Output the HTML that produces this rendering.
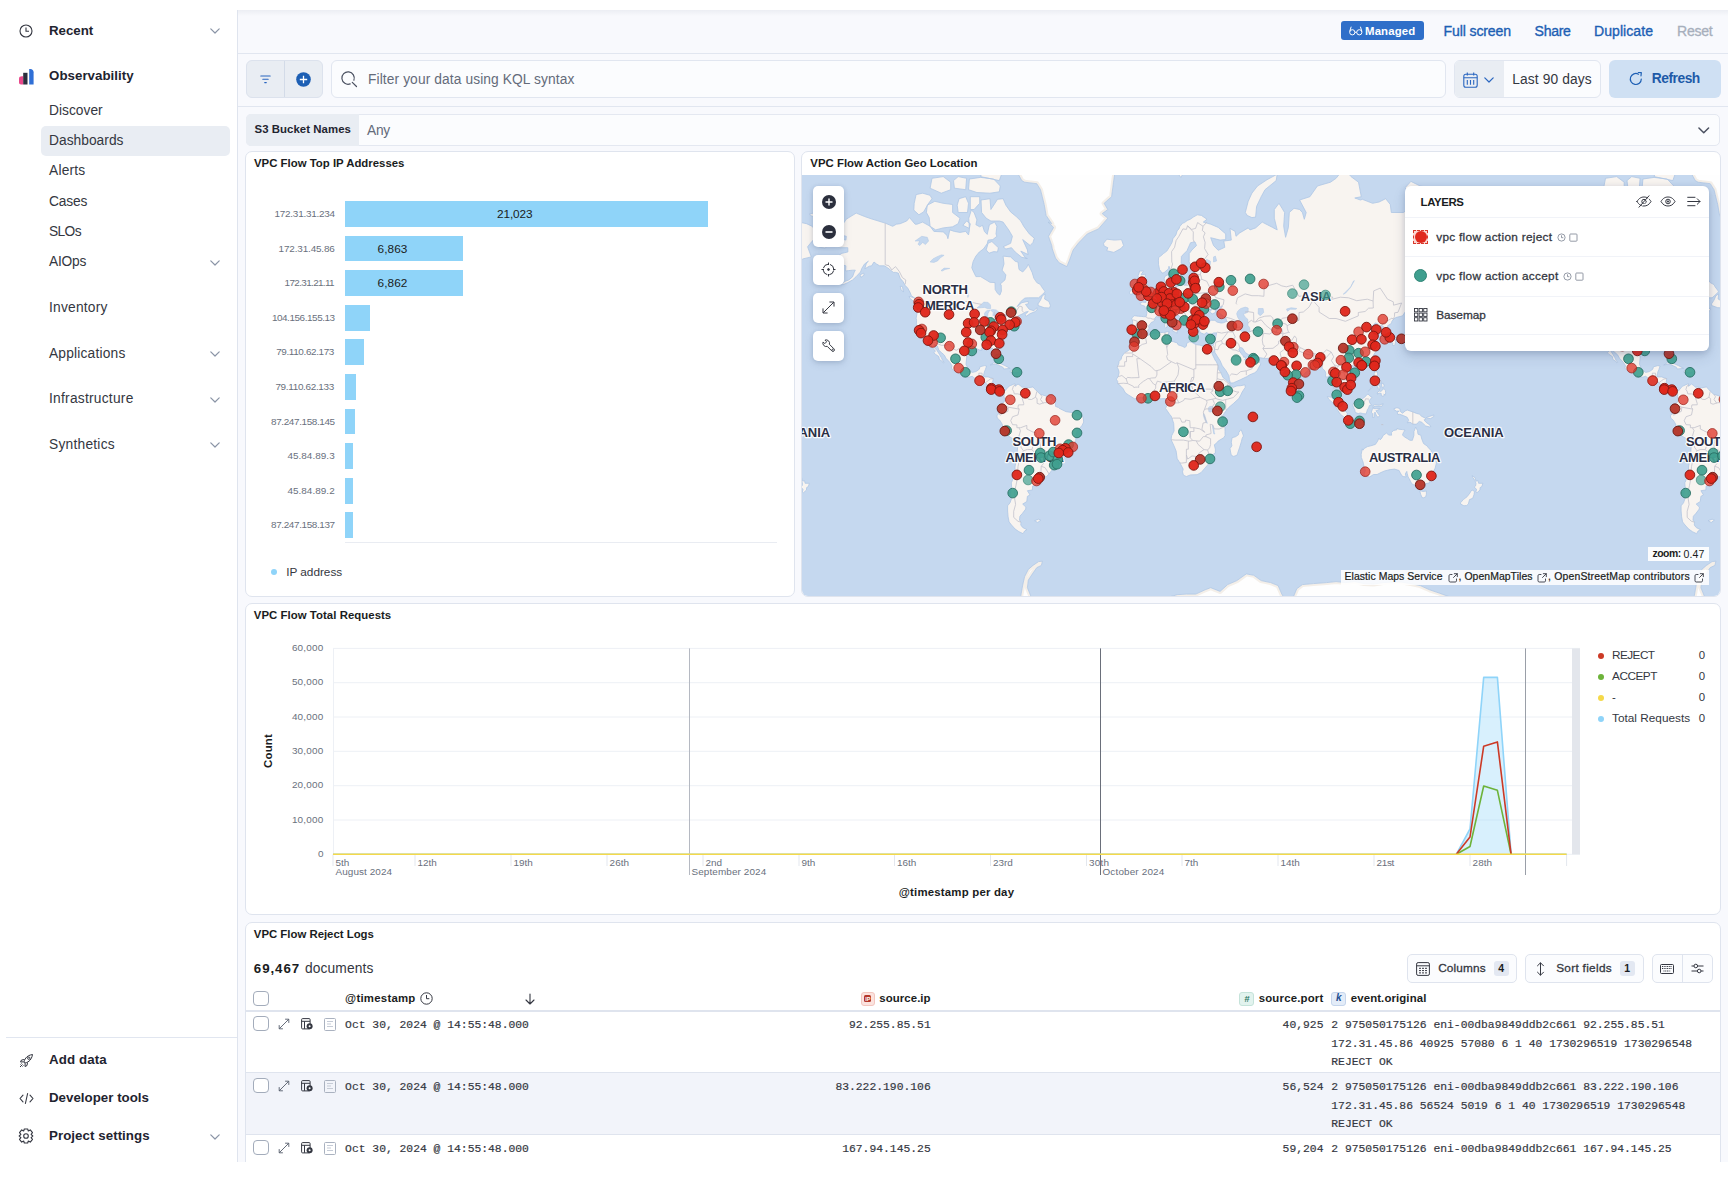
<!DOCTYPE html><html><head><meta charset="utf-8"><title>VPC Flow Logs Overview</title><style>
*{box-sizing:border-box;margin:0;padding:0}
html,body{width:1734px;height:1180px;overflow:hidden;background:#fff}
body{font-family:"Liberation Sans",sans-serif;position:relative}
.t{position:absolute;white-space:nowrap;line-height:20px;height:20px}
.b{position:absolute}
svg{position:absolute;overflow:visible}
.m{-webkit-text-stroke:0.3px currentColor}
</style></head><body>
<div class="b" style="left:237px;top:10px;width:1491px;height:1152px;background:#f8f9fd;border-left:1px solid #dfe4ee;overflow:hidden"></div>
<div class="b" style="left:238px;top:10px;width:1490px;height:6px;background:linear-gradient(#eceef4,#f8f9fd)"></div>
<div class="b" style="left:238px;top:53px;width:1490px;height:1px;background:#e1e6f0;"></div>
<div class="b" style="left:238px;top:106px;width:1490px;height:1px;background:#e1e6f0;"></div>
<svg style="left:18.5px;top:24px" width="14" height="14" viewBox="0 0 14 14"><circle cx="7" cy="7" r="6" fill="none" stroke="#343741" stroke-width="1.1"/><path d="M7 3.4V7.2H10" fill="none" stroke="#343741" stroke-width="1.1"/></svg>
<div class="t" style="left:49.0px;top:21.0px;font-size:13.3px;color:#1f2430;font-weight:700;letter-spacing:-0.008px;">Recent</div>
<svg style="left:209.5px;top:28.2px" width="10.0" height="6.0" viewBox="0 0 10 6"><path d="M0.8 0.8 L5 5 L9.2 0.8" fill="none" stroke="#8a94a6" stroke-width="1.2" stroke-linecap="round" stroke-linejoin="round"/></svg>
<svg style="left:18.5px;top:68.5px" width="15" height="16" viewBox="0 0 15 16"><path d="M0 9.5C0 8 1.2 7.2 3 7.2H4.2V15.5H2C0.8 15.500 0 14.6 0 13.500Z" fill="#e8488b"/><rect x="4.200" y="3.8" width="4.3" height="11.7" fill="#2b2f3d"/><path d="M10.2 0H11.300C13.300 0 14.6 1.3 14.6 3.2V15.5H10.2Z" fill="#2f6fd6"/></svg>
<div class="t" style="left:49.0px;top:66.0px;font-size:13.3px;color:#1f2430;font-weight:700;letter-spacing:0.033px;">Observability</div>
<div class="b" style="left:41px;top:126px;width:189px;height:30px;background:#e9edf3;border-radius:5px;"></div>
<div class="t" style="left:49.0px;top:100.8px;font-size:13.77px;color:#343741;letter-spacing:0.017px;">Discover</div>
<div class="t" style="left:49.0px;top:131.0px;font-size:13.77px;color:#343741;letter-spacing:0.025px;">Dashboards</div>
<div class="t" style="left:49.0px;top:161.3px;font-size:13.77px;color:#343741;letter-spacing:0.200px;">Alerts</div>
<div class="t" style="left:49.0px;top:191.8px;font-size:13.77px;color:#343741;letter-spacing:-0.166px;">Cases</div>
<div class="t" style="left:49.0px;top:222.0px;font-size:13.77px;color:#343741;letter-spacing:-0.610px;">SLOs</div>
<div class="t" style="left:49.0px;top:252.3px;font-size:13.77px;color:#343741;letter-spacing:-0.233px;">AIOps</div>
<svg style="left:209.5px;top:259.8px" width="10.0" height="6.0" viewBox="0 0 10 6"><path d="M0.8 0.8 L5 5 L9.2 0.8" fill="none" stroke="#8a94a6" stroke-width="1.2" stroke-linecap="round" stroke-linejoin="round"/></svg>
<div class="t" style="left:49.0px;top:298.0px;font-size:13.77px;color:#343741;letter-spacing:0.218px;">Inventory</div>
<div class="t" style="left:49.0px;top:343.5px;font-size:13.77px;color:#343741;letter-spacing:0.188px;">Applications</div>
<svg style="left:209.5px;top:351.0px" width="10.0" height="6.0" viewBox="0 0 10 6"><path d="M0.8 0.8 L5 5 L9.2 0.8" fill="none" stroke="#8a94a6" stroke-width="1.2" stroke-linecap="round" stroke-linejoin="round"/></svg>
<div class="t" style="left:49.0px;top:389.0px;font-size:13.77px;color:#343741;letter-spacing:0.249px;">Infrastructure</div>
<svg style="left:209.5px;top:396.5px" width="10.0" height="6.0" viewBox="0 0 10 6"><path d="M0.8 0.8 L5 5 L9.2 0.8" fill="none" stroke="#8a94a6" stroke-width="1.2" stroke-linecap="round" stroke-linejoin="round"/></svg>
<div class="t" style="left:49.0px;top:434.5px;font-size:13.77px;color:#343741;letter-spacing:0.238px;">Synthetics</div>
<svg style="left:209.5px;top:442.0px" width="10.0" height="6.0" viewBox="0 0 10 6"><path d="M0.8 0.8 L5 5 L9.2 0.8" fill="none" stroke="#8a94a6" stroke-width="1.2" stroke-linecap="round" stroke-linejoin="round"/></svg>
<div class="b" style="left:6px;top:1037px;width:231px;height:1px;background:#e1e6f0;"></div>
<div class="t" style="left:49.0px;top:1050.2px;font-size:13.3px;color:#1f2430;font-weight:700;letter-spacing:0.101px;">Add data</div>
<div class="t" style="left:49.0px;top:1088.2px;font-size:13.3px;color:#1f2430;font-weight:700;letter-spacing:0.015px;">Developer tools</div>
<div class="t" style="left:49.0px;top:1126.3px;font-size:13.3px;color:#1f2430;font-weight:700;letter-spacing:0.058px;">Project settings</div>
<svg style="left:209.5px;top:1134.0px" width="10.0" height="6.0" viewBox="0 0 10 6"><path d="M0.8 0.8 L5 5 L9.2 0.8" fill="none" stroke="#8a94a6" stroke-width="1.2" stroke-linecap="round" stroke-linejoin="round"/></svg>
<svg style="left:19px;top:1053px" width="15" height="15" viewBox="0 0 15 15" fill="none" stroke="#343741" stroke-width="1"><path d="M5.2 9.8C5 7 7 2.500 13.500 1.500C12.500 8 8 10 5.2 9.800Z"/><circle cx="9.800" cy="5.200" r="1.200"/><path d="M5.500 6.500L2.500 7L1.500 9L4.800 8.800M8.500 9.500L8 12.500L6 13.500L6.200 10.200M1 14L3.500 11.500M1.500 11.500L2.500 10.500M3.500 13.500L4.500 12.500"/></svg>
<svg style="left:18.5px;top:1092px" width="15" height="13" viewBox="0 0 15 13" fill="none" stroke="#343741" stroke-width="1.1" stroke-linecap="round" stroke-linejoin="round"><path d="M4 3.200L1 6.500L4 9.800M11 3.200L14 6.500L11 9.800M8.600 1.500L6.400 11.500"/></svg>
<svg style="left:18px;top:1128px" width="16" height="16" viewBox="0 0 16 16" fill="none" stroke="#343741" stroke-width="1.1" stroke-linejoin="round"><path d="M6.300 1H9.700L10.300 3L12.300 1.900L14.500 4.700L13.100 6.300L14.800 8L13.100 9.700L14.500 11.300L12.300 14.100L10.300 13L9.700 15H6.300L5.700 13L3.700 14.100L1.500 11.300L2.900 9.700L1.200 8L2.900 6.300L1.500 4.700L3.700 1.900L5.700 3Z"/><circle cx="8" cy="8" r="2.300"/></svg>
<div class="b" style="left:1341px;top:21px;width:83px;height:19px;background:#2f6fc9;border-radius:3px;"></div>
<svg style="left:1348.5px;top:25.5px" width="14" height="10" viewBox="0 0 14 10" fill="none" stroke="#fff" stroke-width="1"><circle cx="3.300" cy="6.300" r="2.600"/><circle cx="10.300" cy="6.300" r="2.600"/><path d="M5.900 6.300H7.700M0.700 5.500L2.200 0.700M12.900 5.500L11.400 0.700"/></svg>
<div class="t" style="left:1365.0px;top:20.5px;font-size:11.4px;color:#fff;font-weight:700;letter-spacing:0.142px;">Managed</div>
<div class="t" style="left:1443.5px;top:20.5px;font-size:14.08px;color:#1d5fb4;letter-spacing:-0.124px;-webkit-text-stroke:0.35px #1d5fb4;">Full screen</div>
<div class="t" style="left:1534.6px;top:20.5px;font-size:14.08px;color:#1d5fb4;letter-spacing:-0.314px;-webkit-text-stroke:0.35px #1d5fb4;">Share</div>
<div class="t" style="left:1594.0px;top:20.5px;font-size:14.08px;color:#1d5fb4;letter-spacing:0.033px;-webkit-text-stroke:0.35px #1d5fb4;">Duplicate</div>
<div class="t" style="left:1677.0px;top:20.5px;font-size:14.08px;color:#a7afbc;letter-spacing:-0.256px;-webkit-text-stroke:0.3px #a7afbc;">Reset</div>
<div class="b" style="left:246px;top:60px;width:77px;height:38px;background:#e9edf3;border:1px solid #dce2ed;border-radius:6px;"></div>
<div class="b" style="left:284.3px;top:61px;width:1.0px;height:36px;background:#d3dbe8;"></div>
<svg style="left:260px;top:75px" width="11" height="9" viewBox="0 0 11 9" stroke="#2a66c0" stroke-width="1.1" stroke-linecap="round"><path d="M0.800 1H10.200M2.800 4.300H8.200M4.700 7.600H6.300"/></svg>
<svg style="left:296px;top:71.500px" width="15" height="15" viewBox="0 0 15 15"><circle cx="7.500" cy="7.500" r="7.300" fill="#1d5fb4"/><path d="M7.500 3.800V11.200M3.800 7.500H11.200" stroke="#fff" stroke-width="1.300"/></svg>
<div class="b" style="left:331px;top:60px;width:1115px;height:38px;background:#fbfcfe;border:1px solid #e1e6f0;border-radius:6px;"></div>
<svg style="left:341px;top:71px" width="17" height="17" viewBox="0 0 17 17" fill="none" stroke="#4a5060" stroke-width="1.200" stroke-linecap="round"><path d="M11.300 11.300L15.500 15.500"/><path d="M12.900 9.200A6.200 6.200 0 1 0 9.200 12.900"/></svg>
<div class="t" style="left:368.0px;top:69.5px;font-size:13.77px;color:#646b7a;letter-spacing:0.103px;">Filter your data using KQL syntax</div>
<div class="b" style="left:1454px;top:60px;width:147px;height:38px;background:#fbfcfe;border:1px solid #e1e6f0;border-radius:6px;"></div>
<div class="b" style="left:1455px;top:61px;width:49px;height:36px;background:#e9edf3;border-radius:5px 0 0 5px;"></div>
<svg style="left:1462.500px;top:71.500px" width="15" height="16" viewBox="0 0 15 16" fill="none" stroke="#2a66c0" stroke-width="1.100" stroke-linejoin="round"><rect x="0.800" y="2.300" width="13.400" height="12.900" rx="2"/><path d="M0.800 5.800H14.200M4.300 0.500V3.500M10.700 0.500V3.500M4.300 8V12.800M7.500 8V12.800M10.700 8V12.800"/></svg>
<svg style="left:1483.7px;top:76.6px" width="10.0" height="6.0" viewBox="0 0 10 6"><path d="M0.8 0.8 L5 5 L9.2 0.8" fill="none" stroke="#2a66c0" stroke-width="1.2" stroke-linecap="round" stroke-linejoin="round"/></svg>
<div class="t" style="left:1512.2px;top:70.0px;font-size:13.77px;color:#343741;letter-spacing:0.127px;">Last 90 days</div>
<div class="b" style="left:1608.5px;top:60px;width:112.0px;height:38px;background:#cfe0f3;border-radius:6px;"></div>
<svg style="left:1629px;top:72px" width="14" height="14" viewBox="0 0 14 14" fill="none" stroke="#1d5fb4" stroke-width="1.200" stroke-linecap="round"><path d="M12.300 7A5.500 5.500 0 1 1 9.500 2.200"/><path d="M9.300 0.500L12.300 0.700L12 3.800" stroke-linejoin="round"/></svg>
<div class="t" style="left:1651.8px;top:69.3px;font-size:13.8px;color:#1d5aa8;font-weight:700;letter-spacing:-0.484px;">Refresh</div>
<div class="b" style="left:246px;top:114px;width:1474px;height:31.5px;background:#fbfcfe;border:1px solid #e4e8f1;border-radius:5px;"></div>
<div class="b" style="left:246px;top:114px;width:113px;height:31.5px;background:#e9edf3;border-radius:5px 0 0 5px;"></div>
<div class="t" style="left:254.5px;top:119.2px;font-size:11.4px;color:#1f2430;font-weight:700;letter-spacing:0.055px;">S3 Bucket Names</div>
<div class="t" style="left:367.0px;top:120.5px;font-size:13.77px;color:#646b7a;letter-spacing:-0.243px;">Any</div>
<svg style="left:1698.25px;top:127.05px" width="11.5" height="6.8999999999999995" viewBox="0 0 10 6"><path d="M0.8 0.8 L5 5 L9.2 0.8" fill="none" stroke="#4a5060" stroke-width="1.3" stroke-linecap="round" stroke-linejoin="round"/></svg>
<div class="b" style="left:245px;top:151px;width:550px;height:446px;background:#fff;border:1px solid #dfe4ee;border-radius:7px;"></div>
<div class="b" style="left:801px;top:151px;width:920px;height:446px;background:#fff;border:1px solid #dfe4ee;border-radius:7px;"></div>
<div class="b" style="left:245px;top:603px;width:1476px;height:312px;background:#fff;border:1px solid #dfe4ee;border-radius:7px;"></div>
<div class="b" style="left:245px;top:922px;width:1476px;height:278px;background:#fff;border:1px solid #dfe4ee;border-radius:7px;"></div>
<div class="t" style="left:254.0px;top:153.1px;font-size:11.4px;color:#1a1c21;font-weight:700;">VPC Flow Top IP Addresses</div>
<div class="t" style="left:810.3px;top:153.0px;font-size:11.4px;color:#1a1c21;font-weight:700;letter-spacing:0.018px;">VPC Flow Action Geo Location</div>
<div class="t" style="left:253.8px;top:604.7px;font-size:11.4px;color:#1a1c21;font-weight:700;letter-spacing:0.041px;">VPC Flow Total Requests</div>
<div class="t" style="left:253.8px;top:923.6px;font-size:11.4px;color:#1a1c21;font-weight:700;letter-spacing:-0.008px;">VPC Flow Reject Logs</div>
<div class="b" style="left:344.7px;top:200.9px;width:363.7px;height:25.900000000000006px;background:#8fd4f9;"></div>
<div class="t" style="left:274.6px;top:203.9px;font-size:9.94px;color:#69707d;letter-spacing:-0.259px;">172.31.31.234</div>
<div class="b" style="left:344.7px;top:235.5px;width:118.69999999999999px;height:25.899999999999977px;background:#8fd4f9;"></div>
<div class="t" style="left:278.6px;top:238.5px;font-size:9.94px;color:#69707d;letter-spacing:-0.153px;">172.31.45.86</div>
<div class="b" style="left:344.7px;top:270.1px;width:118.69999999999999px;height:25.899999999999977px;background:#8fd4f9;"></div>
<div class="t" style="left:284.6px;top:273.1px;font-size:9.94px;color:#69707d;letter-spacing:-0.653px;">172.31.21.11</div>
<div class="b" style="left:344.7px;top:304.7px;width:25.100000000000023px;height:25.900000000000034px;background:#8fd4f9;"></div>
<div class="t" style="left:271.9px;top:307.7px;font-size:9.94px;color:#69707d;letter-spacing:-0.442px;">104.156.155.13</div>
<div class="b" style="left:344.7px;top:339.3px;width:19.600000000000023px;height:25.899999999999977px;background:#8fd4f9;"></div>
<div class="t" style="left:276.2px;top:342.3px;font-size:9.94px;color:#69707d;letter-spacing:-0.382px;">79.110.62.173</div>
<div class="b" style="left:344.7px;top:374.0px;width:11.199999999999989px;height:25.899999999999977px;background:#8fd4f9;"></div>
<div class="t" style="left:275.4px;top:377.0px;font-size:9.94px;color:#69707d;letter-spacing:-0.320px;">79.110.62.133</div>
<div class="b" style="left:344.7px;top:408.6px;width:10.400000000000034px;height:25.899999999999977px;background:#8fd4f9;"></div>
<div class="t" style="left:271.1px;top:411.6px;font-size:9.94px;color:#69707d;letter-spacing:-0.385px;">87.247.158.145</div>
<div class="b" style="left:344.7px;top:443.2px;width:8.400000000000034px;height:25.900000000000034px;background:#8fd4f9;"></div>
<div class="t" style="left:287.4px;top:446.2px;font-size:9.94px;color:#69707d;letter-spacing:0.042px;">45.84.89.3</div>
<div class="b" style="left:344.7px;top:477.8px;width:8.400000000000034px;height:25.899999999999977px;background:#8fd4f9;"></div>
<div class="t" style="left:287.4px;top:480.8px;font-size:9.94px;color:#69707d;letter-spacing:0.042px;">45.84.89.2</div>
<div class="b" style="left:344.7px;top:512.4px;width:8.400000000000034px;height:25.899999999999977px;background:#8fd4f9;"></div>
<div class="t" style="left:271.1px;top:515.4px;font-size:9.94px;color:#69707d;letter-spacing:-0.385px;">87.247.158.137</div>
<div class="t" style="left:497.0px;top:204.0px;font-size:11.8px;color:#1a1c21;letter-spacing:-0.099px;">21,023</div>
<div class="t" style="left:377.5px;top:238.5px;font-size:11.8px;color:#1a1c21;letter-spacing:0.094px;">6,863</div>
<div class="t" style="left:377.5px;top:273.1px;font-size:11.8px;color:#1a1c21;letter-spacing:0.094px;">6,862</div>
<div class="b" style="left:344.7px;top:541.8px;width:432.7px;height:1.0px;background:#e9ecf2;"></div>
<div class="b" style="left:271.300px;top:569.200px;width:6px;height:6px;border-radius:50%;background:#8fd4f9"></div>
<div class="t" style="left:286.2px;top:561.5px;font-size:11.8px;color:#343741;letter-spacing:-0.021px;">IP address</div>
<svg style="left:0;top:0" width="1734" height="1180" viewBox="0 0 1734 1180">
<path d="M333 854.3H1580" stroke="#edf0f5" stroke-width="1"/>
<path d="M333 820.0H1580" stroke="#edf0f5" stroke-width="1"/>
<path d="M333 785.7H1580" stroke="#edf0f5" stroke-width="1"/>
<path d="M333 751.3H1580" stroke="#edf0f5" stroke-width="1"/>
<path d="M333 717.0H1580" stroke="#edf0f5" stroke-width="1"/>
<path d="M333 682.7H1580" stroke="#edf0f5" stroke-width="1"/>
<path d="M333 648.4H1580" stroke="#edf0f5" stroke-width="1"/>
<path d="M333.5 648.4V854.3" stroke="#edf0f5" stroke-width="1"/>
<rect x="1572" y="648.4" width="8" height="205.89999999999998" fill="#e3e6ec"/>
<path d="M333 854.3V866" stroke="#e3e7ee" stroke-width="1"/>
<path d="M415 854.3V866" stroke="#e3e7ee" stroke-width="1"/>
<path d="M511 854.3V866" stroke="#e3e7ee" stroke-width="1"/>
<path d="M607 854.3V866" stroke="#e3e7ee" stroke-width="1"/>
<path d="M703 854.3V866" stroke="#e3e7ee" stroke-width="1"/>
<path d="M799 854.3V866" stroke="#e3e7ee" stroke-width="1"/>
<path d="M894.5 854.3V866" stroke="#e3e7ee" stroke-width="1"/>
<path d="M990.5 854.3V866" stroke="#e3e7ee" stroke-width="1"/>
<path d="M1086.5 854.3V866" stroke="#e3e7ee" stroke-width="1"/>
<path d="M1182 854.3V866" stroke="#e3e7ee" stroke-width="1"/>
<path d="M1278 854.3V866" stroke="#e3e7ee" stroke-width="1"/>
<path d="M1374 854.3V866" stroke="#e3e7ee" stroke-width="1"/>
<path d="M1470 854.3V866" stroke="#e3e7ee" stroke-width="1"/>
<path d="M1566.6 854.3V866" stroke="#e3e7ee" stroke-width="1"/>
<path d="M689.500 648.4V875" stroke="#b5b9c2" stroke-width="1"/>
<path d="M1100.500 648.4V875" stroke="#6a6f7a" stroke-width="1"/>
<path d="M1525.500 648.4V875" stroke="#9a9fa8" stroke-width="1"/>
<path d="M1456.3 854.3 L1470 829 L1483.7 677.4 L1497.4 677.4 L1511.1 854.3Z" fill="#8fd4f9" fill-opacity="0.350"/>
<path d="M333 854.3L1456.3 854.3 1456.3 854.3 L1470 829 L1483.7 677.4 L1497.4 677.4 L1511.1 854.3 L1566.600 854.3" fill="none" stroke="#8fd4f9" stroke-width="1.600" stroke-linejoin="round"/>
<path d="M1456.3 854.3 L1470 846.5 L1483.7 786 L1497.4 790.3 L1511.1 854.3" fill="none" stroke="#6db33a" stroke-width="1.600" stroke-linejoin="round"/>
<path d="M1456.3 854.3 L1470 837 L1483.7 746.2 L1497.4 741.9 L1511.1 854.3" fill="none" stroke="#cc3a26" stroke-width="1.600" stroke-linejoin="round"/>
<path d="M333 854.3H1566.600" stroke="#f5d94a" stroke-width="1.600"/>
</svg>
<div class="t" style="left:318.0px;top:844.0px;font-size:9.94px;color:#69707d;">0</div>
<div class="t" style="left:291.9px;top:809.7px;font-size:9.94px;color:#69707d;letter-spacing:0.200px;">10,000</div>
<div class="t" style="left:291.9px;top:775.4px;font-size:9.94px;color:#69707d;letter-spacing:0.200px;">20,000</div>
<div class="t" style="left:291.9px;top:741.0px;font-size:9.94px;color:#69707d;letter-spacing:0.200px;">30,000</div>
<div class="t" style="left:291.9px;top:706.7px;font-size:9.94px;color:#69707d;letter-spacing:0.200px;">40,000</div>
<div class="t" style="left:291.9px;top:672.4px;font-size:9.94px;color:#69707d;letter-spacing:0.200px;">50,000</div>
<div class="t" style="left:291.9px;top:638.1px;font-size:9.94px;color:#69707d;letter-spacing:0.200px;">60,000</div>
<div class="t" style="left:248px;top:741.400px;width:40px;text-align:center;font-size:11.400px;font-weight:700;color:#1a1c21;transform:rotate(-90deg);letter-spacing:0.2px">Count</div>
<div class="t" style="left:335.6px;top:852.5px;font-size:9.94px;color:#69707d;letter-spacing:-0.106px;">5th</div>
<div class="t" style="left:417.6px;top:852.5px;font-size:9.94px;color:#69707d;letter-spacing:-0.087px;">12th</div>
<div class="t" style="left:513.6px;top:852.5px;font-size:9.94px;color:#69707d;letter-spacing:-0.087px;">19th</div>
<div class="t" style="left:609.6px;top:852.5px;font-size:9.94px;color:#69707d;letter-spacing:0.038px;">26th</div>
<div class="t" style="left:705.6px;top:852.5px;font-size:9.94px;color:#69707d;letter-spacing:-0.028px;">2nd</div>
<div class="t" style="left:801.6px;top:852.5px;font-size:9.94px;color:#69707d;letter-spacing:-0.106px;">9th</div>
<div class="t" style="left:897.1px;top:852.5px;font-size:9.94px;color:#69707d;letter-spacing:-0.087px;">16th</div>
<div class="t" style="left:993.1px;top:852.5px;font-size:9.94px;color:#69707d;letter-spacing:-0.099px;">23rd</div>
<div class="t" style="left:1089.1px;top:852.5px;font-size:9.94px;color:#69707d;letter-spacing:0.163px;">30th</div>
<div class="t" style="left:1184.6px;top:852.5px;font-size:9.94px;color:#69707d;letter-spacing:-0.106px;">7th</div>
<div class="t" style="left:1280.6px;top:852.5px;font-size:9.94px;color:#69707d;letter-spacing:-0.087px;">14th</div>
<div class="t" style="left:1376.6px;top:852.5px;font-size:9.94px;color:#69707d;letter-spacing:-0.322px;">21st</div>
<div class="t" style="left:1472.6px;top:852.5px;font-size:9.94px;color:#69707d;letter-spacing:0.038px;">28th</div>
<div class="t" style="left:335.6px;top:862.3px;font-size:9.94px;color:#69707d;letter-spacing:0.071px;">August 2024</div>
<div class="t" style="left:691.5px;top:862.3px;font-size:9.94px;color:#69707d;letter-spacing:0.107px;">September 2024</div>
<div class="t" style="left:1102.5px;top:862.3px;font-size:9.94px;color:#69707d;letter-spacing:0.147px;">October 2024</div>
<div class="t" style="left:898.7px;top:882.4px;font-size:11.4px;color:#1a1c21;font-weight:700;letter-spacing:0.208px;">@timestamp per day</div>
<div class="b" style="left:1597.800px;top:652.5px;width:6px;height:6px;border-radius:50%;background:#cc3a26"></div>
<div class="t" style="left:1612.0px;top:644.7px;font-size:11.8px;color:#343741;letter-spacing:-0.565px;">REJECT</div>
<div class="t" style="left:1698.7px;top:644.7px;font-size:11.4px;color:#343741;">0</div>
<div class="b" style="left:1597.800px;top:673.5px;width:6px;height:6px;border-radius:50%;background:#6db33a"></div>
<div class="t" style="left:1612.0px;top:665.7px;font-size:11.8px;color:#343741;letter-spacing:-0.477px;">ACCEPT</div>
<div class="t" style="left:1698.7px;top:665.7px;font-size:11.4px;color:#343741;">0</div>
<div class="b" style="left:1597.800px;top:694.5px;width:6px;height:6px;border-radius:50%;background:#f5d94a"></div>
<div class="t" style="left:1612.0px;top:686.7px;font-size:11.4px;color:#343741;">-</div>
<div class="t" style="left:1698.7px;top:686.7px;font-size:11.4px;color:#343741;">0</div>
<div class="b" style="left:1597.800px;top:715.5px;width:6px;height:6px;border-radius:50%;background:#8fd4f9"></div>
<div class="t" style="left:1612.0px;top:707.7px;font-size:11.8px;color:#343741;letter-spacing:0.010px;">Total Requests</div>
<div class="t" style="left:1698.7px;top:707.7px;font-size:11.4px;color:#343741;">0</div>
<div class="t" style="left:253.8px;top:959.3px;font-size:13.3px;color:#1a1c21;font-weight:700;letter-spacing:0.937px;">69,467</div>
<div class="t" style="left:304.9px;top:959.3px;font-size:13.77px;color:#343741;letter-spacing:0.149px;">documents</div>
<div class="b" style="left:1407px;top:954px;width:110px;height:29px;background:#fbfcfe;border:1px solid #dfe4ee;border-radius:5px;"></div>
<div class="b" style="left:1525px;top:954px;width:118.5px;height:29px;background:#fbfcfe;border:1px solid #dfe4ee;border-radius:5px;"></div>
<div class="b" style="left:1651.5px;top:954px;width:61.0px;height:29px;background:#fbfcfe;border:1px solid #dfe4ee;border-radius:5px;"></div>
<div class="b" style="left:1682px;top:955px;width:1px;height:27px;background:#dfe4ee;"></div>
<svg style="left:1415.600px;top:961.500px" width="14" height="14" viewBox="0 0 14 14" fill="none" stroke="#343741" stroke-width="1"><rect x="0.600" y="0.600" width="12.800" height="12.800" rx="1.500"/><path d="M0.600 3.800H13.400M3 6.300H5M6 6.300H8M9 6.300H11M3 8.600H5M6 8.600H8M9 8.600H11M3 10.900H5M6 10.900H8M9 10.900H11"/></svg>
<div class="t" style="left:1438.2px;top:958.2px;font-size:11.8px;color:#343741;letter-spacing:0.134px;-webkit-text-stroke:0.300px #343741;">Columns</div>
<div class="b" style="left:1493.5px;top:961.3px;width:15.200000000000045px;height:14.400000000000091px;background:#e3e8f2;border-radius:3px;"></div>
<div class="t" style="left:1498.2px;top:958.4px;font-size:10.5px;color:#1a1c21;font-weight:700;">4</div>
<svg style="left:1536.200px;top:961.500px" width="9" height="14" viewBox="0 0 9 14" fill="none" stroke="#343741" stroke-width="1" stroke-linecap="round" stroke-linejoin="round"><path d="M4.500 1V13M1.500 3.800L4.500 0.800L7.500 3.800M1.500 10.200L4.500 13.200L7.500 10.200"/></svg>
<div class="t" style="left:1556.2px;top:958.2px;font-size:11.8px;color:#343741;letter-spacing:0.303px;-webkit-text-stroke:0.300px #343741;">Sort fields</div>
<div class="b" style="left:1619.8px;top:961.3px;width:14.799999999999955px;height:14.400000000000091px;background:#e3e8f2;border-radius:3px;"></div>
<div class="t" style="left:1624.3px;top:958.4px;font-size:10.5px;color:#1a1c21;font-weight:700;">1</div>
<svg style="left:1659.500px;top:963.500px" width="14" height="10" viewBox="0 0 14 10" fill="none" stroke="#343741" stroke-width="1"><rect x="0.500" y="0.500" width="13" height="9" rx="1"/><path d="M2 2.500H12M2 4.500H12M3.500 7H10.500" stroke-width="1.200" stroke-dasharray="1 0.700"/></svg>
<svg style="left:1690.500px;top:963px" width="13" height="11" viewBox="0 0 13 11" fill="none" stroke="#343741" stroke-width="1"><path d="M0.500 3H3M6.600 3H12.500M0.500 8H6.400M10 8H12.500"/><circle cx="4.800" cy="3" r="1.800"/><circle cx="8.200" cy="8" r="1.800"/></svg>
<div class="b" style="left:253.4px;top:990.7px;width:15.500px;height:15.500px;border:1px solid #a3acbb;border-radius:4px;background:#fff"></div>
<div class="t" style="left:345.1px;top:988.3px;font-size:11.4px;color:#1a1c21;font-weight:700;letter-spacing:0.237px;">@timestamp</div>
<svg style="left:419.500px;top:992px" width="13" height="13" viewBox="0 0 13 13" fill="none" stroke="#343741" stroke-width="1"><circle cx="6.500" cy="6.500" r="5.700"/><path d="M6.500 3V6.700H9.300"/></svg>
<svg style="left:525.200px;top:993px" width="10" height="12" viewBox="0 0 10 12" fill="none" stroke="#343741" stroke-width="1.100" stroke-linecap="round" stroke-linejoin="round"><path d="M5 1V11M1 7L5 11L9 7"/></svg>
<div class="b" style="left:861px;top:992px;width:13.5px;height:13.5px;background:#fbe3df;border:1px solid #f3c6bf;border-radius:3px;"></div>
<div class="b" style="left:864.200px;top:995.300px;width:7.200px;height:7px;background:#b5372a;border-radius:1.500px"></div>
<div class="t" style="left:864.200px;top:988.800px;font-size:5.500px;font-weight:700;color:#fff;letter-spacing:0;width:7.200px;text-align:center">IP</div>
<div class="t" style="left:879.3px;top:988.3px;font-size:11.4px;color:#1a1c21;font-weight:700;letter-spacing:0.080px;">source.ip</div>
<div class="b" style="left:1239.2px;top:992px;width:15.099999999999909px;height:13.5px;background:#e2f3ee;border:1px solid #c5e3da;border-radius:3px;"></div>
<div class="t" style="left:1244.2px;top:988.6px;font-size:9.5px;color:#2c7a66;font-weight:700;font-family:'Liberation Sans',sans-serif;font-style:italic;">#</div>
<div class="t" style="left:1258.7px;top:988.3px;font-size:11.4px;color:#1a1c21;font-weight:700;letter-spacing:0.190px;">source.port</div>
<div class="b" style="left:1331.3px;top:992px;width:15.200000000000045px;height:13.5px;background:#e3ecf8;border:1px solid #c5d5ec;border-radius:3px;"></div>
<div class="t" style="left:1336.1px;top:988.2px;font-size:10px;color:#1d4f91;font-weight:700;font-family:'Liberation Sans',sans-serif;font-style:italic;">k</div>
<div class="t" style="left:1350.8px;top:988.3px;font-size:11.4px;color:#1a1c21;font-weight:700;letter-spacing:0.113px;">event.original</div>
<div class="b" style="left:246px;top:1010px;width:1474px;height:2px;background:#dfe4ee;"></div>
<div class="b" style="left:253.4px;top:1015.9px;width:15.500px;height:15.500px;border:1px solid #a3acbb;border-radius:4px;background:#fff"></div>
<svg style="left:278.1px;top:1018.4000000000001px" width="12" height="12" viewBox="0 0 12 12" fill="none" stroke="#555c6b" stroke-width="0.9" stroke-linecap="round" stroke-linejoin="round"><path d="M1.500 10.500L10.500 1.500M7.500 1.200H10.800V4.500M1.200 7.500V10.800H4.500"/></svg>
<svg style="left:300.7px;top:1018.4000000000001px" width="12" height="12" viewBox="0 0 12 12"><rect x="0.600" y="0.600" width="8.500" height="10.300" rx="1" fill="none" stroke="#343741"/><path d="M0.600 3.300H9M3.500 3.300V10.800" stroke="#343741" fill="none"/><circle cx="8.600" cy="8.300" r="3" fill="#343741"/><circle cx="8.600" cy="8.300" r="1" fill="#fff"/></svg>
<svg style="left:323.5px;top:1017.9000000000001px" width="12" height="13" viewBox="0 0 12 13" fill="none" stroke="#aab2c0" stroke-width="1"><rect x="0.500" y="0.500" width="11" height="12" rx="1"/><path d="M3 3.500H9M3 6H7M3 8.500H9" stroke="#c5cbd6"/></svg>
<div class="t" style="left:345.1px;top:1014.8px;font-size:11.35px;color:#343741;font-family:'Liberation Mono',monospace;-webkit-text-stroke:0.18px #343741;">Oct 30, 2024 @ 14:55:48.000</div>
<div class="t" style="left:849.0px;top:1014.8px;font-size:11.35px;color:#343741;font-family:'Liberation Mono',monospace;-webkit-text-stroke:0.18px #343741;">92.255.85.51</div>
<div class="t" style="left:1282.6px;top:1014.8px;font-size:11.35px;color:#343741;font-family:'Liberation Mono',monospace;-webkit-text-stroke:0.18px #343741;">40,925</div>
<div class="t" style="left:1331.3px;top:1014.8px;font-size:11.35px;color:#343741;font-family:'Liberation Mono',monospace;-webkit-text-stroke:0.18px #343741;">2 975050175126 eni-00dba9849ddb2c661 92.255.85.51</div>
<div class="t" style="left:1331.3px;top:1033.6px;font-size:11.35px;color:#343741;font-family:'Liberation Mono',monospace;-webkit-text-stroke:0.18px #343741;">172.31.45.86 40925 57080 6 1 40 1730296519 1730296548</div>
<div class="t" style="left:1331.3px;top:1052.4px;font-size:11.35px;color:#343741;font-family:'Liberation Mono',monospace;-webkit-text-stroke:0.18px #343741;">REJECT OK</div>
<div class="b" style="left:246px;top:1072.9px;width:1474px;height:61.0px;background:#f2f4fa;"></div>
<div class="b" style="left:246px;top:1071.9px;width:1474px;height:1.0px;background:#dfe4ee;"></div>
<div class="b" style="left:253.4px;top:1077.8px;width:15.500px;height:15.500px;border:1px solid #a3acbb;border-radius:4px;background:#fff"></div>
<svg style="left:278.1px;top:1080.3000000000002px" width="12" height="12" viewBox="0 0 12 12" fill="none" stroke="#555c6b" stroke-width="0.9" stroke-linecap="round" stroke-linejoin="round"><path d="M1.500 10.500L10.500 1.500M7.500 1.200H10.800V4.500M1.200 7.500V10.800H4.500"/></svg>
<svg style="left:300.7px;top:1080.3000000000002px" width="12" height="12" viewBox="0 0 12 12"><rect x="0.600" y="0.600" width="8.500" height="10.300" rx="1" fill="none" stroke="#343741"/><path d="M0.600 3.300H9M3.500 3.300V10.800" stroke="#343741" fill="none"/><circle cx="8.600" cy="8.300" r="3" fill="#343741"/><circle cx="8.600" cy="8.300" r="1" fill="#fff"/></svg>
<svg style="left:323.5px;top:1079.8000000000002px" width="12" height="13" viewBox="0 0 12 13" fill="none" stroke="#aab2c0" stroke-width="1"><rect x="0.500" y="0.500" width="11" height="12" rx="1"/><path d="M3 3.500H9M3 6H7M3 8.500H9" stroke="#c5cbd6"/></svg>
<div class="t" style="left:345.1px;top:1076.7px;font-size:11.35px;color:#343741;font-family:'Liberation Mono',monospace;-webkit-text-stroke:0.18px #343741;">Oct 30, 2024 @ 14:55:48.000</div>
<div class="t" style="left:835.4px;top:1076.7px;font-size:11.35px;color:#343741;font-family:'Liberation Mono',monospace;-webkit-text-stroke:0.18px #343741;">83.222.190.106</div>
<div class="t" style="left:1282.6px;top:1076.7px;font-size:11.35px;color:#343741;font-family:'Liberation Mono',monospace;-webkit-text-stroke:0.18px #343741;">56,524</div>
<div class="t" style="left:1331.3px;top:1076.7px;font-size:11.35px;color:#343741;font-family:'Liberation Mono',monospace;-webkit-text-stroke:0.18px #343741;">2 975050175126 eni-00dba9849ddb2c661 83.222.190.106</div>
<div class="t" style="left:1331.3px;top:1095.5px;font-size:11.35px;color:#343741;font-family:'Liberation Mono',monospace;-webkit-text-stroke:0.18px #343741;">172.31.45.86 56524 5019 6 1 40 1730296519 1730296548</div>
<div class="t" style="left:1331.3px;top:1114.3px;font-size:11.35px;color:#343741;font-family:'Liberation Mono',monospace;-webkit-text-stroke:0.18px #343741;">REJECT OK</div>
<div class="b" style="left:246px;top:1133.8px;width:1474px;height:1.0px;background:#dfe4ee;"></div>
<div class="b" style="left:253.4px;top:1139.7px;width:15.500px;height:15.500px;border:1px solid #a3acbb;border-radius:4px;background:#fff"></div>
<svg style="left:278.1px;top:1142.2px" width="12" height="12" viewBox="0 0 12 12" fill="none" stroke="#555c6b" stroke-width="0.9" stroke-linecap="round" stroke-linejoin="round"><path d="M1.500 10.500L10.500 1.500M7.500 1.200H10.800V4.500M1.200 7.500V10.800H4.500"/></svg>
<svg style="left:300.7px;top:1142.2px" width="12" height="12" viewBox="0 0 12 12"><rect x="0.600" y="0.600" width="8.500" height="10.300" rx="1" fill="none" stroke="#343741"/><path d="M0.600 3.300H9M3.500 3.300V10.800" stroke="#343741" fill="none"/><circle cx="8.600" cy="8.300" r="3" fill="#343741"/><circle cx="8.600" cy="8.300" r="1" fill="#fff"/></svg>
<svg style="left:323.5px;top:1141.7px" width="12" height="13" viewBox="0 0 12 13" fill="none" stroke="#aab2c0" stroke-width="1"><rect x="0.500" y="0.500" width="11" height="12" rx="1"/><path d="M3 3.500H9M3 6H7M3 8.500H9" stroke="#c5cbd6"/></svg>
<div class="t" style="left:345.1px;top:1138.6px;font-size:11.35px;color:#343741;font-family:'Liberation Mono',monospace;-webkit-text-stroke:0.18px #343741;">Oct 30, 2024 @ 14:55:48.000</div>
<div class="t" style="left:842.2px;top:1138.6px;font-size:11.35px;color:#343741;font-family:'Liberation Mono',monospace;-webkit-text-stroke:0.18px #343741;">167.94.145.25</div>
<div class="t" style="left:1282.6px;top:1138.6px;font-size:11.35px;color:#343741;font-family:'Liberation Mono',monospace;-webkit-text-stroke:0.18px #343741;">59,204</div>
<div class="t" style="left:1331.3px;top:1138.6px;font-size:11.35px;color:#343741;font-family:'Liberation Mono',monospace;-webkit-text-stroke:0.18px #343741;">2 975050175126 eni-00dba9849ddb2c661 167.94.145.25</div>
<div class="b" style="left:802px;top:175px;width:918px;height:421px;background:#c5d8ef;border-radius:0 0 6px 6px;overflow:hidden">
<svg style="left:0;top:0" width="918" height="421" viewBox="802 175 918 421">
<path d="M523.8 214.8L527.9 215.4L533.5 219.3L529.8 222.1L537.2 224.2L544.7 227.4L552.2 233.9L552.2 239.6L546.6 240.1L537.2 237.7L540.0 245.5L544.7 250.3L551.3 247.3L550.3 241.0L557.8 240.1L556.5 228.4L561.6 231.4L562.5 236.3L566.2 232.9L574.7 227.9L576.5 229.9L582.1 227.9L588.7 222.1L599.0 227.4L603.7 229.9L600.8 218.2L600.8 209.5L605.5 203.3L611.1 212.5L610.2 226.3L612.1 237.3L614.9 227.4L615.8 212.5L620.5 208.3L626.1 209.5L628.9 212.5L630.8 219.3L632.7 212.5L626.1 200.0L636.4 196.7L643.9 186.0L657.0 182.2L662.6 178.3L670.6 168.2L677.5 176.6L685.0 182.2L687.8 196.7L681.3 198.0L686.9 200.0L688.8 199.3L699.1 203.3L705.6 202.0L712.2 198.7L716.8 204.5L717.8 212.5L722.5 212.5L729.9 212.5L736.5 207.6L739.3 204.5L746.8 207.6L756.1 211.3L759.9 215.9L775.8 223.1L782.3 222.6L793.5 223.7L794.5 221.0L799.2 222.1L806.6 223.7L812.2 226.3L816.9 232.4L821.6 236.3L831.5 240.5L825.3 248.1L819.7 247.3L815.1 243.3L813.7 239.6L810.4 243.3L807.6 246.8L811.3 256.9L802.9 258.9L795.4 265.1L794.1 266.2L786.1 265.1L782.3 266.6L780.4 271.3L779.5 274.9L781.0 279.3L778.6 283.9L774.8 289.0L772.4 289.6L768.7 296.0L767.3 294.2L766.6 286.5L766.8 278.3L769.2 273.5L773.9 268.4L778.2 263.9L781.4 258.9L783.3 256.1L775.8 259.3L768.7 259.7L765.5 267.7L757.6 267.3L753.3 268.4L743.4 268.1L738.4 273.1L734.0 278.3L732.2 285.5L732.7 287.4L738.4 287.1L739.8 289.0L738.7 294.2L738.0 301.5L734.6 308.5L730.9 313.1L729.0 315.9L722.5 317.5L720.2 319.0L718.3 321.5L718.1 323.3L714.2 325.7L714.0 327.2L715.7 328.6L717.6 332.4L717.8 334.7L717.0 336.8L714.4 337.7L712.0 338.4L711.8 335.9L712.2 332.9L712.3 331.2L709.0 329.8L709.9 326.4L708.0 325.5L705.6 326.2L702.8 328.1L704.1 323.8L701.9 323.0L699.1 325.7L695.9 327.4L696.6 329.8L698.1 330.5L699.1 331.9L701.3 330.5L704.7 331.5L702.8 333.1L700.6 334.7L698.7 337.0L700.4 338.6L701.5 341.5L703.4 344.4L703.6 346.2L701.5 347.5L703.6 348.3L703.0 351.3L701.5 352.6L699.3 356.6L696.4 359.7L693.8 362.2L689.1 364.2L686.9 364.8L683.2 366.0L682.0 368.2L680.9 366.0L678.1 365.6L675.3 367.2L673.4 370.4L674.7 373.2L677.0 375.9L678.1 376.7L679.8 380.9L680.2 383.4L679.8 384.8L677.5 386.7L675.7 387.4L674.7 389.1L671.6 390.9L671.9 388.2L671.0 387.4L669.1 387.1L668.0 385.0L666.7 383.8L664.3 383.0L663.5 381.5L662.6 381.9L662.6 384.4L661.3 386.3L661.1 389.5L663.1 391.2L663.7 393.5L666.0 394.8L668.2 396.7L669.1 398.6L668.9 401.8L670.3 404.4L669.1 404.6L666.7 402.9L665.0 401.4L663.7 398.6L663.1 396.7L662.8 394.8L659.4 392.2L659.8 389.1L660.2 387.2L659.8 383.4L658.8 380.5L658.1 375.7L656.0 375.7L653.8 377.1L651.9 376.7L652.3 373.7L651.4 370.8L649.1 368.6L647.2 364.2L644.8 364.8L642.0 365.4L638.3 365.8L637.9 367.4L636.0 369.2L631.3 373.3L629.5 375.5L627.0 377.1L625.4 378.6L625.7 382.3L624.8 385.3L625.0 387.6L623.3 389.5L621.8 390.3L620.5 391.8L619.4 391.0L618.1 388.2L615.4 382.7L613.6 377.8L611.7 370.8L611.3 366.4L610.8 364.8L608.3 367.4L604.6 364.2L607.0 363.0L604.0 361.7L600.8 359.1L599.9 357.8L595.2 358.3L592.1 358.5L588.7 358.1L585.5 357.6L582.7 357.0L581.8 354.5L580.8 354.3L577.5 355.3L574.7 354.5L571.8 352.6L570.5 350.5L569.0 348.1L566.8 347.5L565.3 349.2L566.2 351.3L568.1 354.1L569.4 355.6L570.5 357.6L571.3 356.4L572.0 358.7L570.9 359.7L575.6 360.3L577.5 359.7L579.0 358.1L580.8 356.0L581.0 359.1L585.1 361.5L587.4 363.8L585.1 367.8L583.6 370.8L581.2 372.8L576.5 374.7L573.2 376.7L567.2 379.6L559.7 382.9L556.9 383.0L555.9 379.6L555.4 375.7L552.6 370.8L548.8 365.8L546.6 360.7L544.0 356.6L541.4 352.4L541.0 349.2L539.9 352.4L539.5 352.8L536.5 348.3L535.9 345.3L538.7 345.7L539.7 345.1L541.0 342.0L541.9 339.5L542.5 335.9L543.2 332.9L540.2 332.9L536.9 334.7L532.9 332.6L530.7 334.3L527.9 333.1L526.6 332.4L525.6 329.1L524.5 326.4L524.5 325.2L526.9 324.2L530.1 323.0L534.1 322.3L537.8 320.3L541.4 320.3L543.4 322.0L547.5 323.0L549.8 322.8L553.3 321.3L552.2 317.7L549.8 316.2L546.2 313.3L544.0 312.0L546.6 308.5L549.0 306.6L547.0 306.9L545.7 307.1L541.4 308.8L541.9 311.5L543.8 311.5L541.7 312.5L538.5 314.1L536.3 311.5L538.4 309.6L535.4 309.0L533.1 308.5L531.1 312.0L529.2 314.6L527.7 317.2L526.9 319.0L527.9 320.5L529.8 322.1L526.9 322.8L524.5 324.5L524.0 323.3L521.1 323.0L520.4 324.7L518.3 323.8L517.8 326.4L519.1 327.6L520.4 329.6L519.8 330.3L518.9 331.5L518.9 333.8L517.6 333.8L516.1 332.9L515.3 330.7L516.1 329.3L514.2 328.1L513.3 326.4L511.8 324.0L511.8 320.8L510.1 319.3L509.4 318.7L506.2 316.4L503.9 314.6L502.6 311.7L500.9 312.8L501.1 310.9L498.5 311.5L498.5 314.4L500.8 316.2L502.1 319.0L505.8 320.5L505.4 321.8L507.1 322.5L510.1 325.0L509.9 325.7L507.7 324.0L506.6 326.0L507.7 327.6L506.6 329.1L505.4 330.3L504.8 329.8L505.6 327.6L504.7 325.2L503.2 323.8L502.1 323.3L499.8 322.0L498.3 320.8L496.1 319.3L495.1 318.0L494.8 316.4L493.8 314.9L492.2 314.1L489.2 315.9L486.7 317.5L485.4 317.0L483.9 316.7L482.8 316.4L481.1 318.7L481.7 319.5L479.6 321.8L477.7 322.5L477.0 323.5L474.9 326.4L475.9 328.4L474.6 329.3L474.2 331.0L471.0 332.9L467.3 333.1L465.4 334.5L463.7 333.6L462.4 331.9L460.7 332.4L458.7 332.4L457.9 328.4L458.8 324.7L459.2 322.3L458.8 319.8L458.1 318.0L459.8 316.7L460.7 315.7L464.8 316.2L468.4 316.4L469.9 316.7L472.1 316.7L472.7 316.4L473.3 313.3L473.4 310.9L473.3 309.3L471.8 307.7L471.4 306.3L470.3 305.8L467.3 304.9L466.5 303.2L469.0 302.1L471.8 302.4L472.5 302.4L472.1 299.5L473.1 299.5L473.4 300.4L474.9 300.7L475.7 300.1L477.6 299.0L478.5 297.5L479.1 295.7L480.9 295.1L482.2 294.5L483.0 292.7L484.3 289.6L485.8 288.7L488.6 288.4L490.7 287.8L491.8 286.8L492.2 285.2L491.6 283.6L491.0 281.6L490.7 278.3L491.6 276.2L495.3 274.2L495.1 276.6L494.8 278.3L495.9 278.6L494.6 280.0L493.6 282.6L493.5 283.9L494.6 285.2L495.9 286.5L497.8 286.2L498.1 285.9L500.8 284.6L502.3 286.8L505.4 285.9L509.2 283.9L510.5 285.2L512.2 285.2L512.9 283.9L514.8 282.3L515.0 281.0L514.8 277.3L515.7 275.2L517.8 274.0L520.2 276.6L521.1 273.8L521.3 271.7L519.5 271.0L519.5 268.8L521.7 267.7L527.9 267.7L532.0 266.2L529.2 263.2L522.3 265.1L518.5 266.6L517.0 264.3L515.5 262.0L515.7 260.1L515.7 253.6L518.5 249.9L523.0 245.5L521.5 241.9L520.6 241.9L517.0 242.8L513.5 250.7L510.1 254.1L507.9 256.5L507.7 263.2L510.5 265.1L510.3 268.4L507.3 270.6L506.7 274.2L506.2 277.6L505.4 279.3L504.7 279.3L502.3 281.6L501.3 282.0L499.8 281.3L499.3 280.0L499.6 278.0L497.8 274.2L496.5 269.5L495.5 266.2L495.0 268.4L494.2 269.5L490.5 272.7L488.6 273.1L486.0 269.5L485.0 264.3L484.9 260.1L485.2 257.3L487.1 256.1L489.9 253.6L493.3 251.1L495.7 247.3L496.5 246.0L498.5 242.4L499.4 238.7L502.4 234.9L503.6 230.9L505.4 228.9L506.4 226.3L509.2 223.1L511.0 222.6L513.9 220.4L516.7 219.3L519.8 217.1ZM798.6 475.6L801.6 477.7L802.5 481.1L804.6 480.7L805.1 483.3L809.4 483.3L808.3 486.6L806.6 487.6L806.5 490.0L803.5 492.7L802.3 492.0L803.1 489.3L800.7 487.1L802.1 485.9L802.5 483.5L801.4 480.4L799.2 477.4ZM798.6 490.0L801.0 491.5L800.5 494.7L799.2 498.3L796.0 499.6L794.9 503.9L793.2 505.5L790.4 505.8L787.2 504.1L787.0 502.8L789.8 499.6L793.5 496.8L796.3 493.2L797.5 491.0ZM809.4 214.2L815.1 212.5L816.9 214.2L812.2 216.5ZM838.1 226.8L844.1 222.6L846.1 219.3L856.2 213.1L864.6 216.5L871.2 218.8L885.2 223.1L892.7 226.3L896.4 224.2L900.2 223.7L906.7 221.0L909.5 217.6L915.1 224.2L917.0 224.2L922.6 222.1L930.1 226.3L933.9 231.4L943.2 231.9L947.0 235.4L947.9 238.7L949.8 229.9L954.4 231.4L960.0 232.4L965.7 231.4L968.5 234.9L969.4 230.4L968.8 218.2L971.3 210.1L974.1 212.5L976.9 219.9L975.9 224.7L979.7 226.8L982.5 225.3L984.4 231.4L987.2 234.4L989.4 224.7L994.7 222.1L996.9 226.3L996.0 233.9L996.9 236.3L992.8 239.6L988.1 240.1L987.2 243.7L983.4 249.0L979.3 252.0L975.9 256.1L973.1 261.6L971.8 267.7L972.8 270.2L975.9 276.6L980.6 276.6L986.2 280.0L990.0 282.3L995.0 282.6L995.2 289.6L997.5 293.3L999.9 295.1L1001.4 291.2L1001.2 284.9L999.9 284.3L1004.9 280.0L1005.9 274.9L1002.1 270.2L1004.0 263.9L1003.1 256.1L1010.6 256.9L1015.2 261.3L1018.0 262.0L1019.0 269.5L1022.7 272.0L1026.5 267.7L1028.3 264.3L1032.1 272.4L1033.9 278.3L1036.8 282.6L1040.5 284.6L1041.4 286.5L1044.2 290.3L1045.0 291.8L1042.7 294.2L1038.6 297.8L1033.0 297.8L1028.3 297.8L1024.8 298.1L1020.8 301.5L1017.1 306.6L1021.8 302.7L1028.3 301.3L1028.3 303.8L1025.5 304.4L1027.4 306.9L1029.3 309.3L1033.9 310.7L1036.8 307.7L1037.1 309.9L1034.9 311.7L1030.2 313.6L1026.1 316.4L1025.2 314.4L1028.3 311.5L1025.5 312.0L1023.7 313.3L1019.9 315.1L1017.5 316.2L1016.7 318.2L1016.4 319.5L1018.0 320.8L1016.7 321.3L1015.2 321.8L1010.9 323.0L1010.6 323.8L1010.6 325.7L1008.9 327.9L1007.8 326.7L1008.5 328.8L1007.6 331.0L1006.8 332.2L1006.1 328.8L1005.7 332.4L1006.8 332.6L1007.8 336.3L1005.9 337.9L1003.1 339.5L999.5 342.2L997.5 343.8L996.7 347.3L998.4 351.3L999.3 354.9L999.1 357.2L997.6 358.5L996.0 356.4L994.1 352.8L994.1 350.3L992.4 348.1L990.0 348.8L985.9 347.5L984.4 347.5L981.6 347.9L982.1 350.1L979.7 350.1L977.8 349.2L975.0 348.6L971.6 349.6L967.2 352.8L966.8 356.6L966.0 364.4L969.2 370.4L972.2 372.4L975.9 371.6L979.3 369.2L979.9 366.8L984.4 365.6L986.6 366.0L985.3 369.8L984.4 371.8L984.0 373.7L983.2 376.9L988.1 376.9L993.3 378.6L992.6 382.5L992.4 386.3L993.7 388.2L995.6 390.1L999.3 389.7L1001.2 389.1L1004.0 390.7L1004.9 391.0L1007.8 387.4L1009.1 386.3L1010.2 385.7L1014.9 383.6L1015.0 386.3L1018.0 384.0L1020.8 385.9L1021.8 387.2L1023.8 387.1L1028.3 387.8L1033.0 386.9L1034.9 389.1L1036.8 391.0L1040.1 394.2L1045.7 395.9L1051.2 397.8L1052.7 398.8L1055.5 403.6L1055.5 406.4L1058.3 407.4L1059.2 408.3L1066.1 411.7L1071.4 412.4L1077.0 413.9L1083.0 416.7L1083.7 422.0L1082.2 425.2L1077.0 431.5L1076.0 435.4L1075.7 440.7L1073.6 445.8L1070.4 451.2L1068.2 451.2L1062.4 453.3L1058.6 456.6L1058.3 460.8L1057.3 462.9L1055.1 466.3L1051.5 470.7L1049.1 474.0L1046.3 476.7L1043.9 476.7L1039.7 474.7L1039.7 476.1L1042.0 478.1L1042.9 480.2L1041.4 484.0L1032.6 486.1L1032.4 490.0L1027.4 490.7L1030.0 495.0L1027.4 496.3L1026.8 501.5L1022.7 504.1L1025.9 507.1L1025.7 509.1L1022.5 513.3L1019.9 516.2L1019.5 520.1L1021.0 522.2L1020.8 525.0L1022.7 527.5L1027.0 529.7L1024.6 531.0L1023.1 533.7L1019.0 531.7L1015.2 529.1L1011.5 525.0L1009.1 521.9L1008.1 516.8L1007.6 511.0L1007.6 505.8L1010.0 502.8L1011.5 498.6L1010.0 497.0L1010.4 493.5L1010.9 490.0L1011.7 488.3L1011.3 482.8L1012.2 480.9L1013.2 478.1L1015.0 472.5L1015.0 467.0L1015.6 463.7L1017.1 456.2L1017.3 452.5L1017.7 445.6L1017.5 442.2L1015.2 439.9L1011.5 437.9L1008.3 436.0L1006.3 433.3L1004.8 429.6L1002.7 425.8L1002.0 423.9L1001.0 422.2L999.5 419.9L997.3 418.2L996.9 415.8L998.8 413.4L999.5 411.7L997.5 411.1L998.0 408.9L999.1 407.0L1000.1 405.1L1001.6 403.6L1004.0 402.1L1004.8 399.7L1004.0 396.7L1004.2 394.6L1003.3 393.5L1002.7 391.4L1000.3 390.3L998.6 391.6L999.0 393.1L997.5 393.3L996.2 392.0L993.9 391.6L992.4 391.2L990.5 389.0L988.7 388.4L988.7 386.3L985.3 382.5L981.6 381.5L977.8 380.5L976.1 379.4L972.2 376.3L968.5 377.3L962.1 375.1L958.2 373.0L953.9 370.8L951.3 368.0L952.0 365.8L949.9 362.4L946.0 358.3L944.3 355.1L941.5 352.6L938.9 350.3L937.4 345.9L934.4 344.4L934.4 347.7L937.2 350.7L939.5 354.5L941.3 357.6L942.6 360.3L944.1 362.4L943.4 363.0L942.6 361.7L939.3 359.3L938.9 356.6L935.4 354.3L933.9 352.8L935.4 351.1L932.4 347.5L930.9 344.2L929.7 342.2L927.5 339.5L923.6 338.2L920.9 333.3L919.8 330.5L917.6 327.6L916.3 324.2L916.6 320.3L916.1 318.2L917.0 313.6L917.0 309.3L915.7 303.2L919.3 304.1L919.8 306.3L920.2 303.2L918.5 300.7L915.5 298.7L911.4 295.7L909.9 292.1L907.7 288.1L905.2 285.5L903.0 281.6L900.2 278.3L898.3 273.1L895.5 272.4L893.4 272.4L887.5 267.7L884.3 265.8L879.6 265.8L876.4 263.9L874.0 262.0L871.6 265.8L869.3 266.2L864.8 268.8L866.5 262.8L868.4 261.3L864.6 263.9L861.8 268.4L860.5 272.0L856.2 276.6L852.5 280.0L847.8 282.6L844.1 284.3L840.7 284.9L845.0 281.3L848.7 280.0L852.5 276.9L854.3 272.0L855.3 270.2L852.5 270.2L848.7 270.6L845.6 271.0L845.9 265.8L841.2 264.7L839.4 262.0L838.4 258.1L840.7 253.6L847.8 252.0L847.8 247.7L839.6 247.7L834.5 242.8L841.2 238.7L845.9 240.1L846.3 236.3L842.6 235.4L842.2 232.9L836.9 229.9ZM1027.4 258.5L1021.8 257.3L1015.2 252.0L1011.5 247.7L1005.9 249.0L1003.1 246.8L1010.6 243.3L1012.4 236.3L1008.7 229.9L1003.1 222.1L999.3 221.0L990.9 221.0L986.2 218.2L981.6 212.5L981.0 200.0L990.0 198.7L990.9 209.5L997.5 199.3L1003.1 198.7L1005.9 205.2L1010.6 211.9L1016.2 216.5L1020.8 221.0L1023.7 226.3L1029.3 233.9L1034.3 238.2L1033.0 242.4L1030.2 245.5L1022.7 239.6L1027.4 249.9L1028.1 254.5L1020.8 251.1L1025.5 258.1ZM930.1 226.3L935.7 229.9L943.2 227.9L952.6 226.8L958.2 223.7L960.0 218.2L952.6 212.5L952.6 204.5L943.2 203.3L934.8 201.3L927.3 205.2L926.4 212.5L929.2 217.6ZM913.8 210.1L918.9 214.8L923.6 211.9L928.2 203.9L932.0 198.7L930.1 195.3L922.6 193.2L916.1 194.6L914.2 203.3ZM958.2 212.5L967.5 212.5L968.5 203.3L965.7 196.7L959.1 198.7L957.2 205.2ZM970.3 209.5L974.1 209.5L979.7 203.3L979.7 196.7L970.3 196.7ZM968.5 189.7L976.9 192.5L990.0 193.2L999.3 191.8L1000.3 186.0L993.7 179.0L980.6 177.4L969.4 179.0ZM930.1 188.2L941.3 193.2L950.7 189.7L950.7 182.2L943.2 176.6L932.0 178.3ZM954.4 188.2L965.7 189.7L966.6 178.3L958.2 176.6L953.5 180.6ZM962.9 225.3L969.4 228.4L970.3 223.7L966.6 221.0ZM980.6 176.6L999.3 180.6L1003.1 169.9L1006.8 156.1L1018.0 140.3L1027.4 121.8L1008.7 107.5L980.6 121.8L976.9 145.9L984.4 165.5ZM986.2 249.9L989.0 253.2L993.7 251.6L997.5 252.0L998.4 247.7L991.9 241.5L988.1 243.3ZM1038.1 305.5L1044.2 307.7L1049.5 308.0L1050.4 305.5L1048.9 301.5L1044.6 299.0L1045.2 293.9L1042.4 295.7L1040.5 300.1L1038.1 303.8ZM990.2 365.0L993.7 362.8L998.4 362.6L1004.9 365.6L1010.2 368.4L1003.6 369.0L1003.1 367.4L998.4 365.2L995.6 364.0ZM1009.8 371.8L1012.8 369.0L1018.0 369.2L1021.0 371.6L1016.2 372.8L1011.5 372.4ZM1103.5 243.3L1106.9 239.2L1114.4 240.1L1121.5 239.6L1123.6 245.5L1120.9 248.6L1113.8 252.4L1106.7 250.7L1107.8 247.7L1104.1 246.0ZM1197.3 214.8L1201.4 215.4L1207.0 219.3L1203.3 222.1L1210.7 224.2L1218.2 227.4L1225.7 233.9L1225.7 239.6L1220.1 240.1L1210.7 237.7L1213.5 245.5L1218.2 250.3L1224.8 247.3L1223.8 241.0L1231.3 240.1L1230.0 228.4L1235.1 231.4L1236.0 236.3L1239.7 232.9L1248.2 227.9L1250.0 229.9L1255.6 227.9L1262.2 222.1L1272.5 227.4L1277.2 229.9L1274.3 218.2L1274.3 209.5L1279.0 203.3L1284.6 212.5L1283.7 226.3L1285.6 237.3L1288.4 227.4L1289.3 212.5L1294.0 208.3L1299.6 209.5L1302.4 212.5L1304.3 219.3L1306.2 212.5L1299.6 200.0L1309.9 196.7L1317.4 186.0L1330.5 182.2L1336.1 178.3L1344.1 168.2L1351.0 176.6L1358.5 182.2L1361.3 196.7L1354.8 198.0L1360.4 200.0L1362.3 199.3L1372.6 203.3L1379.1 202.0L1385.7 198.7L1390.3 204.5L1391.3 212.5L1396.0 212.5L1403.4 212.5L1410.0 207.6L1412.8 204.5L1420.3 207.6L1429.6 211.3L1433.4 215.9L1449.3 223.1L1455.8 222.6L1467.0 223.7L1468.0 221.0L1472.7 222.1L1480.1 223.7L1485.8 226.3L1490.4 232.4L1495.1 236.3L1505.0 240.5L1498.8 248.1L1493.2 247.3L1488.6 243.3L1487.2 239.6L1483.9 243.3L1481.1 246.8L1484.8 256.9L1476.4 258.9L1468.9 265.1L1467.6 266.2L1459.6 265.1L1455.8 266.6L1453.9 271.3L1453.0 274.9L1454.5 279.3L1452.1 283.9L1448.3 289.0L1445.9 289.6L1442.2 296.0L1440.8 294.2L1440.1 286.5L1440.3 278.3L1442.7 273.5L1447.4 268.4L1451.7 263.9L1454.9 258.9L1456.8 256.1L1449.3 259.3L1442.2 259.7L1439.0 267.7L1431.1 267.3L1426.8 268.4L1416.9 268.1L1411.9 273.1L1407.5 278.3L1405.7 285.5L1406.2 287.4L1411.9 287.1L1413.3 289.0L1412.2 294.2L1411.5 301.5L1408.1 308.5L1404.4 313.1L1402.5 315.9L1396.0 317.5L1393.7 319.0L1391.8 321.5L1391.6 323.3L1387.7 325.7L1387.5 327.2L1389.2 328.6L1391.1 332.4L1391.3 334.7L1390.5 336.8L1387.9 337.7L1385.5 338.4L1385.3 335.9L1385.7 332.9L1385.8 331.2L1382.5 329.8L1383.4 326.4L1381.5 325.5L1379.1 326.2L1376.3 328.1L1377.6 323.8L1375.4 323.0L1372.6 325.7L1369.4 327.4L1370.1 329.8L1371.6 330.5L1372.6 331.9L1374.8 330.5L1378.2 331.5L1376.3 333.1L1374.1 334.7L1372.2 337.0L1373.9 338.6L1375.0 341.5L1376.9 344.4L1377.1 346.2L1375.0 347.5L1377.1 348.3L1376.5 351.3L1375.0 352.6L1372.8 356.6L1369.9 359.7L1367.3 362.2L1362.6 364.2L1360.4 364.8L1356.7 366.0L1355.5 368.2L1354.4 366.0L1351.6 365.6L1348.8 367.2L1346.9 370.4L1348.2 373.2L1350.5 375.9L1351.6 376.7L1353.3 380.9L1353.7 383.4L1353.3 384.8L1351.0 386.7L1349.2 387.4L1348.2 389.1L1345.1 390.9L1345.4 388.2L1344.5 387.4L1342.6 387.1L1341.5 385.0L1340.2 383.8L1337.8 383.0L1337.0 381.5L1336.1 381.9L1336.1 384.4L1334.8 386.3L1334.6 389.5L1336.6 391.2L1337.2 393.5L1339.5 394.8L1341.7 396.7L1342.6 398.6L1342.4 401.8L1343.8 404.4L1342.6 404.6L1340.2 402.9L1338.5 401.4L1337.2 398.6L1336.6 396.7L1336.3 394.8L1332.9 392.2L1333.3 389.1L1333.7 387.2L1333.3 383.4L1332.3 380.5L1331.6 375.7L1329.5 375.7L1327.3 377.1L1325.4 376.7L1325.8 373.7L1324.9 370.8L1322.6 368.6L1320.7 364.2L1318.3 364.8L1315.5 365.4L1311.8 365.8L1311.4 367.4L1309.5 369.2L1304.8 373.3L1303.0 375.5L1300.5 377.1L1298.9 378.6L1299.2 382.3L1298.3 385.3L1298.5 387.6L1296.8 389.5L1295.3 390.3L1294.0 391.8L1292.9 391.0L1291.6 388.2L1288.9 382.7L1287.1 377.8L1285.2 370.8L1284.8 366.4L1284.3 364.8L1281.8 367.4L1278.1 364.2L1280.5 363.0L1277.5 361.7L1274.3 359.1L1273.4 357.8L1268.7 358.3L1265.6 358.5L1262.2 358.1L1259.0 357.6L1256.2 357.0L1255.3 354.5L1254.3 354.3L1251.0 355.3L1248.2 354.5L1245.3 352.6L1244.0 350.5L1242.5 348.1L1240.3 347.5L1238.8 349.2L1239.7 351.3L1241.6 354.1L1242.9 355.6L1244.0 357.6L1244.8 356.4L1245.5 358.7L1244.4 359.7L1249.1 360.3L1251.0 359.7L1252.5 358.1L1254.3 356.0L1254.5 359.1L1258.6 361.5L1260.9 363.8L1258.6 367.8L1257.1 370.8L1254.7 372.8L1250.0 374.7L1246.7 376.7L1240.7 379.6L1233.2 382.9L1230.4 383.0L1229.4 379.6L1228.9 375.7L1226.1 370.8L1222.3 365.8L1220.1 360.7L1217.5 356.6L1214.9 352.4L1214.5 349.2L1213.4 352.4L1213.0 352.8L1210.0 348.3L1209.4 345.3L1212.2 345.7L1213.2 345.1L1214.5 342.0L1215.4 339.5L1216.0 335.9L1216.7 332.9L1213.7 332.9L1210.4 334.7L1206.4 332.6L1204.2 334.3L1201.4 333.1L1200.1 332.4L1199.1 329.1L1198.0 326.4L1198.0 325.2L1200.4 324.2L1203.6 323.0L1207.6 322.3L1211.3 320.3L1214.9 320.3L1216.9 322.0L1221.0 323.0L1223.3 322.8L1226.8 321.3L1225.7 317.7L1223.3 316.2L1219.7 313.3L1217.5 312.0L1220.1 308.5L1222.5 306.6L1220.5 306.9L1219.2 307.1L1214.9 308.8L1215.4 311.5L1217.3 311.5L1215.2 312.5L1212.0 314.1L1209.8 311.5L1211.9 309.6L1208.9 309.0L1206.6 308.5L1204.6 312.0L1202.7 314.6L1201.2 317.2L1200.4 319.0L1201.4 320.5L1203.3 322.1L1200.4 322.8L1198.0 324.5L1197.5 323.3L1194.6 323.0L1193.9 324.7L1191.8 323.8L1191.3 326.4L1192.6 327.6L1193.9 329.6L1193.3 330.3L1192.4 331.5L1192.4 333.8L1191.1 333.8L1189.6 332.9L1188.8 330.7L1189.6 329.3L1187.7 328.1L1186.8 326.4L1185.3 324.0L1185.3 320.8L1183.6 319.3L1182.9 318.7L1179.7 316.4L1177.4 314.6L1176.1 311.7L1174.4 312.8L1174.6 310.9L1172.0 311.5L1172.0 314.4L1174.3 316.2L1175.6 319.0L1179.3 320.5L1178.9 321.8L1180.6 322.5L1183.6 325.0L1183.4 325.7L1181.2 324.0L1180.1 326.0L1181.2 327.6L1180.1 329.1L1178.9 330.3L1178.3 329.8L1179.1 327.6L1178.2 325.2L1176.7 323.8L1175.6 323.3L1173.3 322.0L1171.8 320.8L1169.6 319.3L1168.6 318.0L1168.3 316.4L1167.3 314.9L1165.7 314.1L1162.7 315.9L1160.2 317.5L1158.9 317.0L1157.4 316.7L1156.3 316.4L1154.6 318.7L1155.2 319.5L1153.1 321.8L1151.2 322.5L1150.5 323.5L1148.4 326.4L1149.4 328.4L1148.1 329.3L1147.7 331.0L1144.5 332.9L1140.8 333.1L1138.9 334.5L1137.2 333.6L1135.9 331.9L1134.2 332.4L1132.2 332.4L1131.4 328.4L1132.3 324.7L1132.7 322.3L1132.3 319.8L1131.6 318.0L1133.3 316.7L1134.2 315.7L1138.3 316.2L1141.9 316.4L1143.4 316.7L1145.6 316.7L1146.2 316.4L1146.8 313.3L1146.9 310.9L1146.8 309.3L1145.3 307.7L1144.9 306.3L1143.8 305.8L1140.8 304.9L1140.0 303.2L1142.5 302.1L1145.3 302.4L1146.0 302.4L1145.6 299.5L1146.6 299.5L1146.9 300.4L1148.4 300.7L1149.2 300.1L1151.1 299.0L1152.0 297.5L1152.6 295.7L1154.4 295.1L1155.7 294.5L1156.5 292.7L1157.8 289.6L1159.3 288.7L1162.1 288.4L1164.2 287.8L1165.3 286.8L1165.7 285.2L1165.1 283.6L1164.5 281.6L1164.2 278.3L1165.1 276.2L1168.8 274.2L1168.6 276.6L1168.3 278.3L1169.4 278.6L1168.1 280.0L1167.1 282.6L1167.0 283.9L1168.1 285.2L1169.4 286.5L1171.3 286.2L1171.6 285.9L1174.3 284.6L1175.8 286.8L1178.9 285.9L1182.7 283.9L1184.0 285.2L1185.7 285.2L1186.4 283.9L1188.3 282.3L1188.5 281.0L1188.3 277.3L1189.2 275.2L1191.3 274.0L1193.7 276.6L1194.6 273.8L1194.8 271.7L1193.0 271.0L1193.0 268.8L1195.2 267.7L1201.4 267.7L1205.5 266.2L1202.7 263.2L1195.8 265.1L1192.0 266.6L1190.5 264.3L1189.0 262.0L1189.2 260.1L1189.2 253.6L1192.0 249.9L1196.5 245.5L1195.0 241.9L1194.1 241.9L1190.5 242.8L1187.0 250.7L1183.6 254.1L1181.4 256.5L1181.2 263.2L1184.0 265.1L1183.8 268.4L1180.8 270.6L1180.2 274.2L1179.7 277.6L1178.9 279.3L1178.2 279.3L1175.8 281.6L1174.8 282.0L1173.3 281.3L1172.8 280.0L1173.1 278.0L1171.3 274.2L1170.0 269.5L1169.0 266.2L1168.5 268.4L1167.7 269.5L1164.0 272.7L1162.1 273.1L1159.5 269.5L1158.5 264.3L1158.4 260.1L1158.7 257.3L1160.6 256.1L1163.4 253.6L1166.8 251.1L1169.2 247.3L1170.0 246.0L1172.0 242.4L1172.9 238.7L1175.9 234.9L1177.1 230.9L1178.9 228.9L1179.9 226.3L1182.7 223.1L1184.5 222.6L1187.4 220.4L1190.2 219.3L1193.3 217.1ZM1138.3 298.4L1139.3 298.7L1141.3 297.8L1142.3 298.1L1144.5 297.2L1146.6 296.9L1149.4 296.6L1150.9 296.0L1151.6 295.4L1151.6 294.5L1150.1 294.2L1151.2 293.3L1152.2 290.9L1151.4 290.0L1149.6 290.0L1149.4 288.1L1148.8 286.2L1147.9 284.9L1146.4 283.3L1145.3 280.6L1144.1 280.0L1143.0 280.0L1144.1 279.0L1145.1 276.2L1145.6 274.9L1145.3 274.2L1141.1 274.9L1141.7 273.5L1143.2 271.7L1143.4 271.0L1139.6 271.0L1138.9 273.5L1138.1 275.5L1138.3 277.6L1137.4 279.0L1138.5 280.0L1138.1 282.3L1139.8 281.6L1140.2 282.0L1139.5 283.6L1139.8 284.6L1142.5 283.6L1142.3 284.9L1143.6 286.2L1143.2 288.4L1142.6 288.7L1140.4 288.7L1140.2 290.3L1141.3 291.2L1140.2 292.4L1139.1 293.0L1139.5 293.9L1141.5 293.9L1143.0 294.5L1143.9 293.9L1143.4 295.1L1141.1 295.1L1140.6 295.7L1139.6 297.2ZM1137.0 292.1L1137.8 289.6L1137.6 288.7L1137.4 286.5L1138.7 285.2L1138.3 284.3L1137.6 282.6L1135.2 282.0L1133.5 283.0L1132.7 284.6L1133.5 284.9L1132.9 285.5L1130.3 285.5L1130.3 288.1L1132.2 289.0L1131.2 290.0L1130.5 290.9L1129.5 292.4L1129.9 293.6L1130.7 294.5L1133.5 293.3L1135.9 292.4ZM1210.0 348.3L1211.7 352.4L1212.2 354.1L1215.4 360.7L1216.0 360.9L1218.6 366.8L1218.6 369.6L1221.0 372.8L1222.9 377.4L1225.7 379.6L1228.9 382.5L1230.0 383.4L1229.8 385.1L1233.2 387.4L1236.9 385.9L1240.7 385.7L1245.0 384.8L1245.2 387.4L1242.2 392.0L1240.7 395.2L1238.8 398.6L1233.7 403.3L1228.5 407.7L1225.7 411.3L1223.3 414.7L1222.1 416.6L1222.5 419.8L1222.7 423.7L1224.2 426.4L1225.0 427.1L1225.0 431.5L1225.1 435.4L1223.8 437.7L1218.2 441.0L1216.9 442.8L1214.3 444.8L1215.4 449.2L1215.4 453.1L1210.7 455.7L1210.0 457.4L1210.2 461.6L1209.1 463.3L1207.0 465.7L1201.2 472.5L1197.1 474.7L1190.5 474.9L1186.4 476.5L1183.4 475.2L1182.5 471.8L1183.2 469.1L1179.9 462.9L1177.2 458.7L1176.1 451.0L1173.7 445.2L1171.1 439.7L1171.6 435.8L1174.1 430.8L1173.7 423.5L1172.0 418.4L1171.1 416.0L1169.6 414.3L1165.5 408.3L1166.6 406.3L1167.3 403.4L1167.1 401.4L1166.8 399.5L1165.7 398.6L1164.0 398.6L1160.2 398.9L1158.7 396.7L1155.4 395.0L1153.5 395.2L1151.2 395.6L1148.6 396.7L1145.1 398.2L1141.5 397.3L1137.8 398.0L1134.6 398.8L1128.8 395.2L1125.6 393.1L1124.3 391.0L1123.4 389.1L1120.9 386.3L1119.1 384.6L1117.6 383.6L1117.8 381.7L1116.3 379.2L1118.1 376.7L1119.1 372.6L1118.5 369.8L1117.2 367.2L1118.7 363.8L1119.1 361.3L1121.1 359.3L1121.9 356.4L1124.3 353.0L1124.9 352.6L1128.2 350.7L1129.9 349.4L1131.0 347.3L1130.7 344.9L1131.8 343.1L1134.8 340.2L1136.3 339.3L1137.2 337.0L1138.0 335.2L1139.1 335.0L1141.0 336.6L1143.6 336.3L1147.9 335.4L1149.2 334.7L1150.9 333.8L1154.8 332.9L1158.5 332.9L1162.1 332.4L1163.6 332.6L1167.5 331.7L1169.6 332.2L1168.3 332.9L1168.8 335.2L1169.8 336.6L1169.2 337.7L1167.9 339.5L1170.5 341.1L1173.7 341.8L1177.2 342.9L1178.2 344.9L1180.1 345.5L1182.7 346.4L1184.7 347.5L1186.4 346.2L1186.6 343.5L1189.2 341.8L1191.3 342.0L1193.9 343.5L1196.1 344.6L1199.9 345.1L1203.3 346.2L1204.9 345.5L1207.0 344.6L1209.4 345.3ZM1241.2 429.6L1242.9 434.4L1243.5 436.0L1242.2 438.3L1241.4 441.6L1239.7 447.2L1237.5 453.7L1236.9 455.3L1233.6 456.4L1231.3 455.3L1230.6 452.0L1230.0 448.6L1231.9 445.8L1231.3 442.2L1232.1 437.7L1235.6 436.7L1238.6 434.6L1238.8 432.5L1240.3 430.4ZM1298.3 388.8L1300.9 391.0L1302.2 393.3L1301.7 395.0L1299.8 395.9L1298.5 395.0L1298.1 392.0ZM1392.6 340.2L1394.1 339.5L1395.8 341.1L1395.0 344.6L1394.1 345.7L1392.6 345.5L1392.8 343.1L1391.5 342.0L1391.6 340.6ZM1396.9 339.3L1400.3 338.6L1401.0 339.7L1400.1 340.9L1398.4 340.6L1397.6 342.0L1396.3 340.9ZM1394.1 339.3L1394.8 338.4L1397.3 336.1L1399.7 335.6L1402.1 335.4L1403.4 334.7L1404.7 332.9L1405.9 331.2L1405.3 332.9L1408.1 331.5L1409.0 330.0L1410.7 327.2L1410.5 325.5L1410.9 323.5L1411.5 322.3L1412.6 322.8L1413.5 321.8L1413.9 324.0L1414.7 326.4L1413.0 329.3L1412.8 332.4L1412.6 335.4L1410.9 337.0L1410.5 335.6L1409.4 336.6L1408.9 337.9L1407.5 337.9L1405.3 337.9L1405.1 338.6L1403.1 340.4L1401.7 338.8L1402.3 337.9L1401.6 337.9L1399.7 338.2L1396.9 338.6L1396.0 339.5L1394.8 339.3ZM1411.1 321.8L1413.2 320.8L1412.8 319.5L1414.5 318.7L1416.9 320.3L1419.1 317.7L1421.8 317.0L1420.8 314.4L1419.0 315.1L1415.6 312.5L1414.5 311.2L1413.9 312.0L1414.1 315.1L1413.3 317.0L1411.7 317.0L1410.5 319.8ZM1416.0 285.2L1416.9 289.6L1417.1 294.2L1418.4 300.7L1419.7 301.5L1416.5 301.0L1416.0 305.8L1417.5 307.7L1416.5 309.6L1414.7 310.1L1414.7 305.8L1414.8 301.5L1414.3 297.2L1414.7 293.3L1414.1 288.7L1415.2 285.5ZM1376.3 358.1L1377.2 358.7L1376.3 361.7L1375.2 364.8L1373.9 363.2L1373.9 361.1L1375.4 358.7ZM1352.4 370.4L1353.9 368.8L1356.3 368.8L1356.7 369.6L1355.7 371.2L1354.0 372.4L1352.4 371.8ZM1374.6 371.8L1377.6 371.8L1377.6 374.7L1376.5 376.7L1376.9 379.6L1378.2 380.0L1381.0 380.9L1381.2 383.2L1379.7 382.5L1378.2 381.7L1376.7 380.7L1374.8 380.9L1374.6 379.6L1373.5 378.6L1373.1 376.1L1374.2 375.5L1374.2 373.7ZM1377.2 394.1L1379.7 393.1L1381.4 393.7L1381.0 395.4L1383.4 396.5L1384.2 394.8L1383.8 393.9L1385.1 395.2L1385.7 392.9L1385.3 390.1L1383.8 388.6L1382.5 390.1L1380.6 391.6L1379.7 390.9L1377.6 392.2ZM1381.5 383.4L1383.4 383.4L1384.2 385.9L1383.2 387.8L1382.3 387.8L1381.7 385.7ZM1377.2 384.8L1379.3 385.3L1380.0 387.2L1379.5 389.7L1378.2 389.0L1378.0 387.2L1377.1 387.2ZM1368.3 391.4L1372.6 387.1L1372.9 385.7L1372.2 385.7L1370.7 388.2L1368.3 390.7ZM1354.0 403.1L1355.5 403.8L1357.2 402.5L1360.4 401.0L1362.3 398.8L1364.1 397.6L1366.0 395.8L1367.9 393.9L1369.8 395.9L1372.0 397.3L1370.7 398.8L1369.2 400.6L1369.8 402.9L1371.6 405.1L1369.4 405.5L1368.6 408.1L1367.5 409.4L1366.8 411.7L1366.0 414.1L1363.4 413.6L1362.3 413.4L1360.4 413.0L1358.2 413.6L1355.2 412.4L1354.8 409.8L1353.3 407.0L1352.7 404.8ZM1327.3 396.5L1331.4 397.3L1333.7 399.9L1336.8 402.5L1339.3 403.8L1342.1 405.9L1343.2 408.9L1344.7 410.7L1347.3 413.0L1347.1 417.9L1345.8 417.9L1344.5 417.5L1340.4 414.3L1336.8 408.9L1334.2 405.1L1333.8 403.8L1330.8 401.0L1328.8 399.3ZM1373.1 405.5L1375.0 404.6L1379.1 405.1L1383.2 403.8L1381.9 406.3L1379.1 406.1L1375.4 406.1L1373.7 406.8L1373.5 408.5L1376.3 408.7L1379.9 408.5L1379.7 409.2L1376.7 410.6L1375.9 410.7L1377.8 413.2L1379.5 415.6L1378.2 417.3L1376.5 416.0L1375.4 413.0L1375.0 412.1L1374.2 413.6L1374.2 417.3L1372.6 417.5L1372.6 413.6L1371.3 412.2L1372.2 409.8L1373.1 407.4ZM1393.9 408.7L1396.9 407.7L1399.7 408.5L1400.6 411.7L1402.5 413.2L1405.3 410.9L1407.2 410.0L1412.8 411.9L1416.5 413.4L1419.3 414.1L1421.8 416.4L1425.5 418.2L1425.7 419.6L1424.0 419.8L1425.9 422.2L1428.3 423.9L1431.1 426.4L1429.6 426.9L1425.7 426.0L1424.4 424.9L1422.1 422.4L1419.3 421.4L1417.5 423.0L1416.5 424.3L1412.8 424.1L1410.0 422.2L1407.2 422.8L1408.7 420.3L1407.2 417.3L1403.4 415.6L1399.7 414.3L1397.8 414.5L1397.3 412.2L1399.3 411.1L1396.3 411.1L1394.1 409.6ZM1426.4 417.5L1429.6 416.4L1433.7 414.9L1433.9 416.4L1430.6 418.6L1427.4 418.2ZM1415.6 427.1L1417.5 430.6L1418.0 434.2L1420.8 435.2L1421.8 439.1L1423.6 443.6L1427.4 446.2L1428.1 447.4L1431.1 450.6L1431.5 452.3L1435.1 455.9L1435.6 460.3L1436.4 462.9L1435.2 468.1L1433.0 472.2L1432.1 474.5L1430.0 479.3L1429.6 482.8L1425.5 483.7L1422.9 486.6L1419.7 484.4L1417.5 486.1L1413.9 484.9L1411.7 483.7L1410.4 481.1L1409.0 478.4L1408.1 477.0L1407.2 473.6L1406.8 471.4L1405.3 474.0L1406.2 477.0L1403.2 476.5L1401.9 475.8L1400.1 472.5L1399.1 470.5L1394.5 469.1L1390.2 469.6L1384.7 470.9L1381.0 472.5L1377.1 474.5L1373.5 474.5L1369.6 477.0L1364.3 475.6L1364.1 473.8L1365.5 470.2L1364.1 467.0L1363.4 463.3L1362.5 460.5L1361.3 457.4L1361.2 454.3L1362.3 448.8L1363.0 450.2L1364.3 448.4L1367.5 446.6L1370.9 445.8L1375.4 444.4L1377.6 441.2L1378.9 438.1L1380.2 439.9L1381.9 437.9L1383.2 435.4L1386.4 433.1L1388.8 435.0L1391.6 435.2L1391.3 432.5L1393.7 430.4L1396.9 429.8L1397.1 428.3L1398.8 429.2L1402.5 429.6L1405.1 430.0L1403.4 432.5L1402.5 435.0L1404.4 436.9L1407.2 438.5L1410.0 440.3L1412.4 440.3L1413.9 435.4L1413.9 431.5L1414.3 430.8ZM1419.7 490.5L1423.1 491.5L1426.4 491.0L1426.4 494.2L1425.7 496.8L1423.6 497.8L1422.1 497.6L1420.6 494.2ZM1472.1 475.6L1475.1 477.7L1476.0 481.1L1478.1 480.7L1478.6 483.3L1482.9 483.3L1481.8 486.6L1480.1 487.6L1480.0 490.0L1477.0 492.7L1475.8 492.0L1476.6 489.3L1474.2 487.1L1475.6 485.9L1476.0 483.5L1474.9 480.4L1472.7 477.4ZM1472.1 490.0L1474.5 491.5L1474.0 494.7L1472.7 498.3L1469.5 499.6L1468.4 503.9L1466.7 505.5L1463.9 505.8L1460.7 504.1L1460.5 502.8L1463.3 499.6L1467.0 496.8L1469.8 493.2L1471.0 491.0ZM1172.2 330.0L1174.1 329.6L1178.2 329.3L1177.2 331.7L1177.2 333.1L1175.2 332.2L1172.4 331.0ZM1164.3 322.8L1166.2 322.3L1167.3 324.0L1167.0 327.2L1165.7 327.9L1164.7 327.2L1164.7 323.8ZM1166.6 317.7L1166.8 320.0L1166.2 321.8L1165.1 320.5L1165.1 319.3L1166.0 318.2ZM1193.0 335.6L1198.2 336.3L1198.0 337.0L1195.2 337.3L1193.0 336.6ZM1209.4 336.8L1213.7 335.4L1212.6 337.0L1210.7 337.9L1209.4 337.5ZM1245.3 212.5L1248.2 201.3L1251.9 193.2L1257.5 186.0L1266.9 179.8L1277.2 174.2L1276.2 180.6L1265.0 189.7L1261.2 196.7L1256.6 206.4L1255.6 217.1L1251.9 217.6L1247.2 215.4ZM1405.3 187.5L1410.9 181.4L1420.3 186.0L1427.8 187.5L1430.6 189.7L1422.1 191.1L1416.5 201.3L1410.9 200.7L1414.7 191.1L1407.2 191.8ZM1482.9 214.2L1488.6 212.5L1490.4 214.2L1485.8 216.5ZM1169.6 156.1L1175.2 169.9L1180.8 177.4L1188.3 165.5L1199.5 145.9L1186.4 140.3L1171.5 148.0ZM860.0 274.9L863.7 273.1L864.1 275.2L860.9 277.3ZM909.0 296.3L914.2 297.8L918.0 301.8L917.8 303.5L914.2 301.8L909.9 298.4ZM900.2 286.2L902.4 286.5L903.5 292.1L901.1 289.6ZM1034.5 520.7L1038.6 519.2L1040.9 520.1L1037.7 522.5ZM1511.6 226.8L1517.6 222.6L1519.6 219.3L1529.7 213.1L1538.1 216.5L1544.7 218.8L1558.7 223.1L1566.2 226.3L1569.9 224.2L1573.7 223.7L1580.2 221.0L1583.0 217.6L1588.6 224.2L1590.5 224.2L1596.1 222.1L1603.6 226.3L1607.4 231.4L1616.7 231.9L1620.5 235.4L1621.4 238.7L1623.3 229.9L1627.9 231.4L1633.5 232.4L1639.2 231.4L1642.0 234.9L1642.9 230.4L1642.3 218.2L1644.8 210.1L1647.6 212.5L1650.4 219.9L1649.4 224.7L1653.2 226.8L1656.0 225.3L1657.9 231.4L1660.7 234.4L1662.9 224.7L1668.2 222.1L1670.4 226.3L1669.5 233.9L1670.4 236.3L1666.3 239.6L1661.6 240.1L1660.7 243.7L1656.9 249.0L1652.8 252.0L1649.4 256.1L1646.6 261.6L1645.3 267.7L1646.3 270.2L1649.4 276.6L1654.1 276.6L1659.7 280.0L1663.5 282.3L1668.5 282.6L1668.7 289.6L1671.0 293.3L1673.4 295.1L1674.9 291.2L1674.7 284.9L1673.4 284.3L1678.4 280.0L1679.4 274.9L1675.6 270.2L1677.5 263.9L1676.6 256.1L1684.1 256.9L1688.7 261.3L1691.5 262.0L1692.5 269.5L1696.2 272.0L1700.0 267.7L1701.8 264.3L1705.6 272.4L1707.4 278.3L1710.2 282.6L1714.0 284.6L1714.9 286.5L1717.7 290.3L1718.5 291.8L1716.2 294.2L1712.1 297.8L1706.5 297.8L1701.8 297.8L1698.3 298.1L1694.3 301.5L1690.6 306.6L1695.3 302.7L1701.8 301.3L1701.8 303.8L1699.0 304.4L1700.9 306.9L1702.8 309.3L1707.4 310.7L1710.2 307.7L1710.6 309.9L1708.4 311.7L1703.7 313.6L1699.6 316.4L1698.7 314.4L1701.8 311.5L1699.0 312.0L1697.2 313.3L1693.4 315.1L1691.0 316.2L1690.2 318.2L1689.9 319.5L1691.5 320.8L1690.2 321.3L1688.7 321.8L1684.4 323.0L1684.1 323.8L1684.1 325.7L1682.4 327.9L1681.3 326.7L1682.0 328.8L1681.1 331.0L1680.3 332.2L1679.6 328.8L1679.2 332.4L1680.3 332.6L1681.3 336.3L1679.4 337.9L1676.6 339.5L1673.0 342.2L1671.0 343.8L1670.2 347.3L1671.9 351.3L1672.8 354.9L1672.6 357.2L1671.1 358.5L1669.5 356.4L1667.6 352.8L1667.6 350.3L1665.9 348.1L1663.5 348.8L1659.4 347.5L1657.9 347.5L1655.1 347.9L1655.6 350.1L1653.2 350.1L1651.3 349.2L1648.5 348.6L1645.1 349.6L1640.7 352.8L1640.3 356.6L1639.5 364.4L1642.7 370.4L1645.7 372.4L1649.4 371.6L1652.8 369.2L1653.4 366.8L1657.9 365.6L1660.1 366.0L1658.8 369.8L1657.9 371.8L1657.5 373.7L1656.7 376.9L1661.6 376.9L1666.8 378.6L1666.1 382.5L1665.9 386.3L1667.2 388.2L1669.1 390.1L1672.8 389.7L1674.7 389.1L1677.5 390.7L1678.4 391.0L1681.3 387.4L1682.6 386.3L1683.7 385.7L1688.4 383.6L1688.5 386.3L1691.5 384.0L1694.3 385.9L1695.3 387.2L1697.3 387.1L1701.8 387.8L1706.5 386.9L1708.4 389.1L1710.2 391.0L1713.6 394.2L1719.2 395.9L1724.7 397.8L1726.2 398.8L1729.0 403.6L1729.0 406.4L1731.8 407.4L1732.7 408.3L1739.6 411.7L1744.9 412.4L1750.5 413.9L1756.5 416.7L1757.2 422.0L1755.7 425.2L1750.5 431.5L1749.5 435.4L1749.2 440.7L1747.1 445.8L1743.9 451.2L1741.7 451.2L1735.9 453.3L1732.1 456.6L1731.8 460.8L1730.8 462.9L1728.6 466.3L1725.0 470.7L1722.6 474.0L1719.8 476.7L1717.4 476.7L1713.2 474.7L1713.2 476.1L1715.5 478.1L1716.4 480.2L1714.9 484.0L1706.1 486.1L1705.9 490.0L1700.9 490.7L1703.5 495.0L1700.9 496.3L1700.3 501.5L1696.2 504.1L1699.4 507.1L1699.2 509.1L1696.0 513.3L1693.4 516.2L1693.0 520.1L1694.5 522.2L1694.3 525.0L1696.2 527.5L1700.5 529.7L1698.1 531.0L1696.6 533.7L1692.5 531.7L1688.7 529.1L1685.0 525.0L1682.6 521.9L1681.6 516.8L1681.1 511.0L1681.1 505.8L1683.5 502.8L1685.0 498.6L1683.5 497.0L1683.9 493.5L1684.4 490.0L1685.2 488.3L1684.8 482.8L1685.7 480.9L1686.7 478.1L1688.5 472.5L1688.5 467.0L1689.1 463.7L1690.6 456.2L1690.8 452.5L1691.2 445.6L1691.0 442.2L1688.7 439.9L1685.0 437.9L1681.8 436.0L1679.8 433.3L1678.3 429.6L1676.2 425.8L1675.5 423.9L1674.5 422.2L1673.0 419.9L1670.8 418.2L1670.4 415.8L1672.3 413.4L1673.0 411.7L1671.0 411.1L1671.5 408.9L1672.6 407.0L1673.6 405.1L1675.1 403.6L1677.5 402.1L1678.3 399.7L1677.5 396.7L1677.7 394.6L1676.8 393.5L1676.2 391.4L1673.8 390.3L1672.1 391.6L1672.5 393.1L1671.0 393.3L1669.7 392.0L1667.4 391.6L1665.9 391.2L1664.0 389.0L1662.2 388.4L1662.2 386.3L1658.8 382.5L1655.1 381.5L1651.3 380.5L1649.6 379.4L1645.7 376.3L1642.0 377.3L1635.6 375.1L1631.7 373.0L1627.4 370.8L1624.8 368.0L1625.5 365.8L1623.4 362.4L1619.5 358.3L1617.8 355.1L1615.0 352.6L1612.4 350.3L1610.9 345.9L1607.9 344.4L1607.9 347.7L1610.7 350.7L1613.0 354.5L1614.8 357.6L1616.1 360.3L1617.6 362.4L1616.9 363.0L1616.1 361.7L1612.8 359.3L1612.4 356.6L1608.9 354.3L1607.4 352.8L1608.9 351.1L1605.9 347.5L1604.4 344.2L1603.2 342.2L1601.0 339.5L1597.1 338.2L1594.4 333.3L1593.3 330.5L1591.1 327.6L1589.8 324.2L1590.1 320.3L1589.6 318.2L1590.5 313.6L1590.5 309.3L1589.2 303.2L1592.8 304.1L1593.3 306.3L1593.7 303.2L1592.0 300.7L1589.0 298.7L1584.9 295.7L1583.4 292.1L1581.2 288.1L1578.7 285.5L1576.5 281.6L1573.7 278.3L1571.8 273.1L1569.0 272.4L1566.9 272.4L1561.0 267.7L1557.8 265.8L1553.1 265.8L1549.9 263.9L1547.5 262.0L1545.1 265.8L1542.8 266.2L1538.3 268.8L1540.0 262.8L1541.9 261.3L1538.1 263.9L1535.3 268.4L1534.0 272.0L1529.7 276.6L1526.0 280.0L1521.3 282.6L1517.6 284.3L1514.2 284.9L1518.5 281.3L1522.2 280.0L1526.0 276.9L1527.8 272.0L1528.8 270.2L1526.0 270.2L1522.2 270.6L1519.1 271.0L1519.4 265.8L1514.7 264.7L1512.9 262.0L1511.9 258.1L1514.2 253.6L1521.3 252.0L1521.3 247.7L1513.1 247.7L1508.0 242.8L1514.7 238.7L1519.4 240.1L1519.8 236.3L1516.1 235.4L1515.7 232.9L1510.4 229.9ZM1700.9 258.5L1695.3 257.3L1688.7 252.0L1685.0 247.7L1679.4 249.0L1676.6 246.8L1684.1 243.3L1685.9 236.3L1682.2 229.9L1676.6 222.1L1672.8 221.0L1664.4 221.0L1659.7 218.2L1655.1 212.5L1654.5 200.0L1663.5 198.7L1664.4 209.5L1671.0 199.3L1676.6 198.7L1679.4 205.2L1684.1 211.9L1689.7 216.5L1694.3 221.0L1697.2 226.3L1702.8 233.9L1707.8 238.2L1706.5 242.4L1703.7 245.5L1696.2 239.6L1700.9 249.9L1701.6 254.5L1694.3 251.1L1699.0 258.1ZM1603.6 226.3L1609.2 229.9L1616.7 227.9L1626.1 226.8L1631.7 223.7L1633.5 218.2L1626.1 212.5L1626.1 204.5L1616.7 203.3L1608.3 201.3L1600.8 205.2L1599.9 212.5L1602.7 217.6ZM1587.3 210.1L1592.4 214.8L1597.1 211.9L1601.7 203.9L1605.5 198.7L1603.6 195.3L1596.1 193.2L1589.6 194.6L1587.7 203.3ZM1631.7 212.5L1641.0 212.5L1642.0 203.3L1639.2 196.7L1632.6 198.7L1630.7 205.2ZM1643.8 209.5L1647.6 209.5L1653.2 203.3L1653.2 196.7L1643.8 196.7ZM1642.0 189.7L1650.4 192.5L1663.5 193.2L1672.8 191.8L1673.8 186.0L1667.2 179.0L1654.1 177.4L1642.9 179.0ZM1603.6 188.2L1614.8 193.2L1624.2 189.7L1624.2 182.2L1616.7 176.6L1605.5 178.3ZM1627.9 188.2L1639.2 189.7L1640.1 178.3L1631.7 176.6L1627.0 180.6ZM1636.4 225.3L1642.9 228.4L1643.8 223.7L1640.1 221.0ZM1654.1 176.6L1672.8 180.6L1676.6 169.9L1680.3 156.1L1691.5 140.3L1700.9 121.8L1682.2 107.5L1654.1 121.8L1650.4 145.9L1657.9 165.5ZM1659.7 249.9L1662.5 253.2L1667.2 251.6L1671.0 252.0L1671.9 247.7L1665.3 241.5L1661.6 243.3ZM1711.6 305.5L1717.7 307.7L1723.0 308.0L1723.9 305.5L1722.4 301.5L1718.1 299.0L1718.7 293.9L1715.9 295.7L1714.0 300.1L1711.6 303.8ZM1663.7 365.0L1667.2 362.8L1671.9 362.6L1678.4 365.6L1683.7 368.4L1677.1 369.0L1676.6 367.4L1671.9 365.2L1669.1 364.0ZM1683.3 371.8L1686.3 369.0L1691.5 369.2L1694.5 371.6L1689.7 372.8L1685.0 372.4ZM1533.5 274.9L1537.2 273.1L1537.6 275.2L1534.4 277.3ZM1582.5 296.3L1587.7 297.8L1591.5 301.8L1591.3 303.5L1587.7 301.8L1583.4 298.4ZM1573.7 286.2L1575.9 286.5L1577.0 292.1L1574.6 289.6ZM1708.0 520.7L1712.1 519.2L1714.4 520.1L1711.2 522.5Z" fill="#f8f4f0" stroke="#aec6e4" stroke-width="0.8" stroke-linejoin="round"/>
<clipPath id="icec"><path d="M138.8 742.6L138.8 651.2L166.8 650.3L179.9 639.8L194.9 635.7L213.6 624.3L232.3 619.4L251.0 616.0L266.0 620.8L284.7 610.7L297.8 609.5L316.5 610.7L329.6 612.0L340.8 607.6L347.3 595.8L349.2 585.1L351.1 576.7L354.8 569.4L359.5 565.4L365.1 561.6L368.9 561.2L367.9 565.4L363.2 567.6L359.5 573.0L354.8 580.1L353.9 587.7L359.5 601.5L363.2 617.3L359.5 635.7L382.0 648.5L410.0 648.5L425.0 631.8L438.1 614.0L453.0 604.5L460.5 602.1L475.5 598.6L490.5 598.1L498.0 596.4L503.6 594.7L512.9 594.1L522.3 594.1L531.6 589.8L537.2 587.7L546.6 591.4L554.1 584.6L563.4 580.6L572.8 573.9L580.3 575.3L587.8 580.6L597.1 582.6L604.6 585.6L608.3 594.1L612.1 600.4L619.6 597.5L623.3 588.7L628.9 584.6L640.1 583.6L653.2 582.6L662.6 581.6L671.9 582.6L681.3 581.6L690.6 583.6L700.0 584.1L709.4 582.6L718.7 582.1L728.1 582.1L737.4 583.6L746.8 585.6L756.1 589.8L765.5 593.0L774.8 596.4L784.2 598.6L793.5 601.5L793.5 610.7L784.2 624.3L782.3 644.1L793.5 651.2L812.2 651.2L812.2 742.6ZM1012.4 163.7L1021.8 180.6L1024.6 182.2L1036.8 183.7L1040.5 189.7L1044.2 204.5L1046.1 215.4L1051.7 223.7L1048.0 222.1L1053.6 227.4L1048.5 236.3L1051.7 245.5L1052.3 249.0L1055.5 258.1L1059.2 262.8L1066.9 266.6L1069.5 260.1L1073.2 249.9L1078.7 242.8L1087.3 233.9L1098.5 228.9L1107.8 218.2L1102.2 213.6L1107.8 209.5L1104.1 203.3L1111.6 196.7L1113.5 182.2L1115.3 169.9L1111.6 145.9L1092.9 99.5L1064.8 114.9L1036.8 121.8L1021.8 140.3L1025.5 151.1ZM812.2 742.6L812.2 651.2L840.3 650.3L853.4 639.8L868.4 635.7L887.1 624.3L905.8 619.4L924.5 616.0L939.5 620.8L958.2 610.7L971.3 609.5L990.0 610.7L1003.1 612.0L1014.3 607.6L1020.8 595.8L1022.7 585.1L1024.6 576.7L1028.3 569.4L1033.0 565.4L1038.6 561.6L1042.4 561.2L1041.4 565.4L1036.8 567.6L1033.0 573.0L1028.3 580.1L1027.4 587.7L1033.0 601.5L1036.8 617.3L1033.0 635.7L1055.5 648.5L1083.5 648.5L1098.5 631.8L1111.6 614.0L1126.5 604.5L1134.0 602.1L1149.0 598.6L1164.0 598.1L1171.5 596.4L1177.1 594.7L1186.4 594.1L1195.8 594.1L1205.1 589.8L1210.7 587.7L1220.1 591.4L1227.6 584.6L1236.9 580.6L1246.3 573.9L1253.8 575.3L1261.2 580.6L1270.6 582.6L1278.1 585.6L1281.8 594.1L1285.6 600.4L1293.1 597.5L1296.8 588.7L1302.4 584.6L1313.6 583.6L1326.7 582.6L1336.1 581.6L1345.4 582.6L1354.8 581.6L1364.1 583.6L1373.5 584.1L1382.9 582.6L1392.2 582.1L1401.6 582.1L1410.9 583.6L1420.3 585.6L1429.6 589.8L1439.0 593.0L1448.3 596.4L1457.7 598.6L1467.0 601.5L1467.0 610.7L1457.7 624.3L1455.8 644.1L1467.0 651.2L1485.8 651.2L1485.8 742.6ZM1685.9 163.7L1695.3 180.6L1698.1 182.2L1710.2 183.7L1714.0 189.7L1717.7 204.5L1719.6 215.4L1725.2 223.7L1721.5 222.1L1727.1 227.4L1722.0 236.3L1725.2 245.5L1725.8 249.0L1729.0 258.1L1732.7 262.8L1740.4 266.6L1743.0 260.1L1746.7 249.9L1752.2 242.8L1760.8 233.9L1772.0 228.9L1781.3 218.2L1775.7 213.6L1781.3 209.5L1777.6 203.3L1785.1 196.7L1787.0 182.2L1788.8 169.9L1785.1 145.9L1766.4 99.5L1738.3 114.9L1710.2 121.8L1695.3 140.3L1699.0 151.1ZM1485.8 742.6L1485.8 651.2L1513.8 650.3L1526.9 639.8L1541.9 635.7L1560.6 624.3L1579.3 619.4L1598.0 616.0L1613.0 620.8L1631.7 610.7L1644.8 609.5L1663.5 610.7L1676.6 612.0L1687.8 607.6L1694.3 595.8L1696.2 585.1L1698.1 576.7L1701.8 569.4L1706.5 565.4L1712.1 561.6L1715.9 561.2L1714.9 565.4L1710.2 567.6L1706.5 573.0L1701.8 580.1L1700.9 587.7L1706.5 601.5L1710.2 617.3L1706.5 635.7L1729.0 648.5L1757.0 648.5L1772.0 631.8L1785.1 614.0L1800.0 604.5L1807.5 602.1L1822.5 598.6L1837.5 598.1L1845.0 596.4L1850.6 594.7L1859.9 594.1L1869.3 594.1L1878.6 589.8L1884.2 587.7L1893.6 591.4L1901.1 584.6L1910.4 580.6L1919.8 573.9L1927.3 575.3L1934.8 580.6L1944.1 582.6L1951.6 585.6L1955.3 594.1L1959.1 600.4L1966.6 597.5L1970.3 588.7L1975.9 584.6L1987.1 583.6L2000.2 582.6L2009.6 581.6L2018.9 582.6L2028.3 581.6L2037.6 583.6L2047.0 584.1L2056.4 582.6L2065.7 582.1L2075.1 582.1L2084.4 583.6L2093.8 585.6L2103.1 589.8L2112.5 593.0L2121.8 596.4L2131.2 598.6L2140.5 601.5L2140.5 610.7L2131.2 624.3L2129.3 644.1L2140.5 651.2L2159.2 651.2L2159.2 742.6Z"/></clipPath>
<path d="M138.8 742.6L138.8 651.2L166.8 650.3L179.9 639.8L194.9 635.7L213.6 624.3L232.3 619.4L251.0 616.0L266.0 620.8L284.7 610.7L297.8 609.5L316.5 610.7L329.6 612.0L340.8 607.6L347.3 595.8L349.2 585.1L351.1 576.7L354.8 569.4L359.5 565.4L365.1 561.6L368.9 561.2L367.9 565.4L363.2 567.6L359.5 573.0L354.8 580.1L353.9 587.7L359.5 601.5L363.2 617.3L359.5 635.7L382.0 648.5L410.0 648.5L425.0 631.8L438.1 614.0L453.0 604.5L460.5 602.1L475.5 598.6L490.5 598.1L498.0 596.4L503.6 594.7L512.9 594.1L522.3 594.1L531.6 589.8L537.2 587.7L546.6 591.4L554.1 584.6L563.4 580.6L572.8 573.9L580.3 575.3L587.8 580.6L597.1 582.6L604.6 585.6L608.3 594.1L612.1 600.4L619.6 597.5L623.3 588.7L628.9 584.6L640.1 583.6L653.2 582.6L662.6 581.6L671.9 582.6L681.3 581.6L690.6 583.6L700.0 584.1L709.4 582.6L718.7 582.1L728.1 582.1L737.4 583.6L746.8 585.6L756.1 589.8L765.5 593.0L774.8 596.4L784.2 598.6L793.5 601.5L793.5 610.7L784.2 624.3L782.3 644.1L793.5 651.2L812.2 651.2L812.2 742.6ZM1012.4 163.7L1021.8 180.6L1024.6 182.2L1036.8 183.7L1040.5 189.7L1044.2 204.5L1046.1 215.4L1051.7 223.7L1048.0 222.1L1053.6 227.4L1048.5 236.3L1051.7 245.5L1052.3 249.0L1055.5 258.1L1059.2 262.8L1066.9 266.6L1069.5 260.1L1073.2 249.9L1078.7 242.8L1087.3 233.9L1098.5 228.9L1107.8 218.2L1102.2 213.6L1107.8 209.5L1104.1 203.3L1111.6 196.7L1113.5 182.2L1115.3 169.9L1111.6 145.9L1092.9 99.5L1064.8 114.9L1036.8 121.8L1021.8 140.3L1025.5 151.1ZM812.2 742.6L812.2 651.2L840.3 650.3L853.4 639.8L868.4 635.7L887.1 624.3L905.8 619.4L924.5 616.0L939.5 620.8L958.2 610.7L971.3 609.5L990.0 610.7L1003.1 612.0L1014.3 607.6L1020.8 595.8L1022.7 585.1L1024.6 576.7L1028.3 569.4L1033.0 565.4L1038.6 561.6L1042.4 561.2L1041.4 565.4L1036.8 567.6L1033.0 573.0L1028.3 580.1L1027.4 587.7L1033.0 601.5L1036.8 617.3L1033.0 635.7L1055.5 648.5L1083.5 648.5L1098.5 631.8L1111.6 614.0L1126.5 604.5L1134.0 602.1L1149.0 598.6L1164.0 598.1L1171.5 596.4L1177.1 594.7L1186.4 594.1L1195.8 594.1L1205.1 589.8L1210.7 587.7L1220.1 591.4L1227.6 584.6L1236.9 580.6L1246.3 573.9L1253.8 575.3L1261.2 580.6L1270.6 582.6L1278.1 585.6L1281.8 594.1L1285.6 600.4L1293.1 597.5L1296.8 588.7L1302.4 584.6L1313.6 583.6L1326.7 582.6L1336.1 581.6L1345.4 582.6L1354.8 581.6L1364.1 583.6L1373.5 584.1L1382.9 582.6L1392.2 582.1L1401.6 582.1L1410.9 583.6L1420.3 585.6L1429.6 589.8L1439.0 593.0L1448.3 596.4L1457.7 598.6L1467.0 601.5L1467.0 610.7L1457.7 624.3L1455.8 644.1L1467.0 651.2L1485.8 651.2L1485.8 742.6ZM1685.9 163.7L1695.3 180.6L1698.1 182.2L1710.2 183.7L1714.0 189.7L1717.7 204.5L1719.6 215.4L1725.2 223.7L1721.5 222.1L1727.1 227.4L1722.0 236.3L1725.2 245.5L1725.8 249.0L1729.0 258.1L1732.7 262.8L1740.4 266.6L1743.0 260.1L1746.7 249.9L1752.2 242.8L1760.8 233.9L1772.0 228.9L1781.3 218.2L1775.7 213.6L1781.3 209.5L1777.6 203.3L1785.1 196.7L1787.0 182.2L1788.8 169.9L1785.1 145.9L1766.4 99.5L1738.3 114.9L1710.2 121.8L1695.3 140.3L1699.0 151.1ZM1485.8 742.6L1485.8 651.2L1513.8 650.3L1526.9 639.8L1541.9 635.7L1560.6 624.3L1579.3 619.4L1598.0 616.0L1613.0 620.8L1631.7 610.7L1644.8 609.5L1663.5 610.7L1676.6 612.0L1687.8 607.6L1694.3 595.8L1696.2 585.1L1698.1 576.7L1701.8 569.4L1706.5 565.4L1712.1 561.6L1715.9 561.2L1714.9 565.4L1710.2 567.6L1706.5 573.0L1701.8 580.1L1700.9 587.7L1706.5 601.5L1710.2 617.3L1706.5 635.7L1729.0 648.5L1757.0 648.5L1772.0 631.8L1785.1 614.0L1800.0 604.5L1807.5 602.1L1822.5 598.6L1837.5 598.1L1845.0 596.4L1850.6 594.7L1859.9 594.1L1869.3 594.1L1878.6 589.8L1884.2 587.7L1893.6 591.4L1901.1 584.6L1910.4 580.6L1919.8 573.9L1927.3 575.3L1934.8 580.6L1944.1 582.6L1951.6 585.6L1955.3 594.1L1959.1 600.4L1966.6 597.5L1970.3 588.7L1975.9 584.6L1987.1 583.6L2000.2 582.6L2009.6 581.6L2018.9 582.6L2028.3 581.6L2037.6 583.6L2047.0 584.1L2056.4 582.6L2065.7 582.1L2075.1 582.1L2084.4 583.6L2093.8 585.6L2103.1 589.8L2112.5 593.0L2121.8 596.4L2131.2 598.6L2140.5 601.5L2140.5 610.7L2131.2 624.3L2129.3 644.1L2140.5 651.2L2159.2 651.2L2159.2 742.6Z" fill="#fefefe" stroke="#f4efe9" stroke-width="5" stroke-linejoin="round" clip-path="url(#icec)"/>
<path d="M138.8 742.6L138.8 651.2L166.8 650.3L179.9 639.8L194.9 635.7L213.6 624.3L232.3 619.4L251.0 616.0L266.0 620.8L284.7 610.7L297.8 609.5L316.5 610.7L329.6 612.0L340.8 607.6L347.3 595.8L349.2 585.1L351.1 576.7L354.8 569.4L359.5 565.4L365.1 561.6L368.9 561.2L367.9 565.4L363.2 567.6L359.5 573.0L354.8 580.1L353.9 587.7L359.5 601.5L363.2 617.3L359.5 635.7L382.0 648.5L410.0 648.5L425.0 631.8L438.1 614.0L453.0 604.5L460.5 602.1L475.5 598.6L490.5 598.1L498.0 596.4L503.6 594.7L512.9 594.1L522.3 594.1L531.6 589.8L537.2 587.7L546.6 591.4L554.1 584.6L563.4 580.6L572.8 573.9L580.3 575.3L587.8 580.6L597.1 582.6L604.6 585.6L608.3 594.1L612.1 600.4L619.6 597.5L623.3 588.7L628.9 584.6L640.1 583.6L653.2 582.6L662.6 581.6L671.9 582.6L681.3 581.6L690.6 583.6L700.0 584.1L709.4 582.6L718.7 582.1L728.1 582.1L737.4 583.6L746.8 585.6L756.1 589.8L765.5 593.0L774.8 596.4L784.2 598.6L793.5 601.5L793.5 610.7L784.2 624.3L782.3 644.1L793.5 651.2L812.2 651.2L812.2 742.6ZM1012.4 163.7L1021.8 180.6L1024.6 182.2L1036.8 183.7L1040.5 189.7L1044.2 204.5L1046.1 215.4L1051.7 223.7L1048.0 222.1L1053.6 227.4L1048.5 236.3L1051.7 245.5L1052.3 249.0L1055.5 258.1L1059.2 262.8L1066.9 266.6L1069.5 260.1L1073.2 249.9L1078.7 242.8L1087.3 233.9L1098.5 228.9L1107.8 218.2L1102.2 213.6L1107.8 209.5L1104.1 203.3L1111.6 196.7L1113.5 182.2L1115.3 169.9L1111.6 145.9L1092.9 99.5L1064.8 114.9L1036.8 121.8L1021.8 140.3L1025.5 151.1ZM812.2 742.6L812.2 651.2L840.3 650.3L853.4 639.8L868.4 635.7L887.1 624.3L905.8 619.4L924.5 616.0L939.5 620.8L958.2 610.7L971.3 609.5L990.0 610.7L1003.1 612.0L1014.3 607.6L1020.8 595.8L1022.7 585.1L1024.6 576.7L1028.3 569.4L1033.0 565.4L1038.6 561.6L1042.4 561.2L1041.4 565.4L1036.8 567.6L1033.0 573.0L1028.3 580.1L1027.4 587.7L1033.0 601.5L1036.8 617.3L1033.0 635.7L1055.5 648.5L1083.5 648.5L1098.5 631.8L1111.6 614.0L1126.5 604.5L1134.0 602.1L1149.0 598.6L1164.0 598.1L1171.5 596.4L1177.1 594.7L1186.4 594.1L1195.8 594.1L1205.1 589.8L1210.7 587.7L1220.1 591.4L1227.6 584.6L1236.9 580.6L1246.3 573.9L1253.8 575.3L1261.2 580.6L1270.6 582.6L1278.1 585.6L1281.8 594.1L1285.6 600.4L1293.1 597.5L1296.8 588.7L1302.4 584.6L1313.6 583.6L1326.7 582.6L1336.1 581.6L1345.4 582.6L1354.8 581.6L1364.1 583.6L1373.5 584.1L1382.9 582.6L1392.2 582.1L1401.6 582.1L1410.9 583.6L1420.3 585.6L1429.6 589.8L1439.0 593.0L1448.3 596.4L1457.7 598.6L1467.0 601.5L1467.0 610.7L1457.7 624.3L1455.8 644.1L1467.0 651.2L1485.8 651.2L1485.8 742.6ZM1685.9 163.7L1695.3 180.6L1698.1 182.2L1710.2 183.7L1714.0 189.7L1717.7 204.5L1719.6 215.4L1725.2 223.7L1721.5 222.1L1727.1 227.4L1722.0 236.3L1725.2 245.5L1725.8 249.0L1729.0 258.1L1732.7 262.8L1740.4 266.6L1743.0 260.1L1746.7 249.9L1752.2 242.8L1760.8 233.9L1772.0 228.9L1781.3 218.2L1775.7 213.6L1781.3 209.5L1777.6 203.3L1785.1 196.7L1787.0 182.2L1788.8 169.9L1785.1 145.9L1766.4 99.5L1738.3 114.9L1710.2 121.8L1695.3 140.3L1699.0 151.1ZM1485.8 742.6L1485.8 651.2L1513.8 650.3L1526.9 639.8L1541.9 635.7L1560.6 624.3L1579.3 619.4L1598.0 616.0L1613.0 620.8L1631.7 610.7L1644.8 609.5L1663.5 610.7L1676.6 612.0L1687.8 607.6L1694.3 595.8L1696.2 585.1L1698.1 576.7L1701.8 569.4L1706.5 565.4L1712.1 561.6L1715.9 561.2L1714.9 565.4L1710.2 567.6L1706.5 573.0L1701.8 580.1L1700.9 587.7L1706.5 601.5L1710.2 617.3L1706.5 635.7L1729.0 648.5L1757.0 648.5L1772.0 631.8L1785.1 614.0L1800.0 604.5L1807.5 602.1L1822.5 598.6L1837.5 598.1L1845.0 596.4L1850.6 594.7L1859.9 594.1L1869.3 594.1L1878.6 589.8L1884.2 587.7L1893.6 591.4L1901.1 584.6L1910.4 580.6L1919.8 573.9L1927.3 575.3L1934.8 580.6L1944.1 582.6L1951.6 585.6L1955.3 594.1L1959.1 600.4L1966.6 597.5L1970.3 588.7L1975.9 584.6L1987.1 583.6L2000.2 582.6L2009.6 581.6L2018.9 582.6L2028.3 581.6L2037.6 583.6L2047.0 584.1L2056.4 582.6L2065.7 582.1L2075.1 582.1L2084.4 583.6L2093.8 585.6L2103.1 589.8L2112.5 593.0L2121.8 596.4L2131.2 598.6L2140.5 601.5L2140.5 610.7L2131.2 624.3L2129.3 644.1L2140.5 651.2L2159.2 651.2L2159.2 742.6Z" fill="none" stroke="#aec6e4" stroke-width="0.8" stroke-linejoin="round"/>
<path d="M1240.7 308.5L1245.3 307.1L1248.2 308.0L1248.2 312.0L1244.4 313.8L1243.1 313.8L1245.3 317.2L1247.6 319.0L1248.2 322.8L1247.8 325.2L1249.7 327.6L1250.0 331.7L1246.3 333.1L1242.9 331.7L1240.7 331.0L1240.5 329.1L1243.1 324.2L1241.6 323.8L1240.1 320.8L1237.9 317.7L1236.6 313.8L1237.9 310.9ZM1258.4 308.5L1263.1 308.5L1263.7 312.5L1260.3 315.7L1258.1 313.8ZM1343.2 294.2L1346.4 291.2L1351.0 286.5L1354.4 280.6L1353.5 281.0L1350.1 288.1L1345.4 293.3ZM1286.5 309.0L1291.2 307.7L1296.8 308.5L1295.9 309.3L1290.2 309.3L1287.4 311.2ZM1208.3 407.9L1209.8 406.4L1212.6 406.4L1213.0 409.2L1211.1 412.1L1208.9 411.7ZM1203.6 413.4L1204.8 415.4L1206.2 420.1L1207.4 423.3L1206.1 422.6L1204.2 418.2L1203.4 415.4ZM1212.6 424.9L1213.7 427.7L1214.3 432.5L1214.9 434.0L1213.7 433.8L1213.0 429.6L1212.4 426.8ZM976.9 308.0L980.6 304.9L983.8 302.1L988.1 302.4L990.5 304.9L990.7 308.5L987.2 308.5L984.7 307.4L981.6 307.7ZM984.7 320.3L986.2 321.0L987.5 317.7L988.1 313.1L990.0 310.1L987.2 310.4L984.9 312.5L984.4 313.8L984.9 316.4ZM990.5 310.1L992.8 309.6L996.2 309.9L999.3 312.5L999.0 313.6L996.5 313.1L996.2 317.0L994.7 317.7L994.7 315.1L992.8 315.7L993.2 312.5ZM993.0 321.0L995.6 321.5L999.0 320.0L1001.4 318.2L998.4 318.5L994.7 319.8ZM999.7 317.0L1003.1 317.0L1006.3 316.4L1006.1 314.6L1003.1 315.1L1000.6 315.9ZM964.2 287.4L966.0 286.8L968.7 295.7L967.9 297.5L967.0 294.2L965.1 291.2ZM915.1 241.0L921.7 236.3L927.3 237.3L928.6 241.0L925.4 244.6L922.6 242.4L919.8 245.5L918.0 244.2L919.8 241.0ZM930.1 262.0L932.9 258.9L936.7 256.9L941.3 254.9L944.1 255.3L940.4 257.7L937.6 260.9L933.9 262.4ZM941.0 270.6L944.1 268.1L949.8 268.4L945.1 269.5L942.3 271.0ZM1206.8 265.8L1210.2 264.7L1210.6 261.3L1206.6 259.3L1205.5 262.0ZM1213.5 262.0L1216.7 260.9L1215.4 256.1L1213.5 256.9ZM1018.0 436.2L1019.9 436.6L1020.5 438.3L1019.0 437.9ZM988.1 384.0L989.6 384.6L990.2 386.1L988.7 385.5ZM1650.4 308.0L1654.1 304.9L1657.3 302.1L1661.6 302.4L1664.0 304.9L1664.2 308.5L1660.7 308.5L1658.2 307.4L1655.1 307.7ZM1658.2 320.3L1659.7 321.0L1661.0 317.7L1661.6 313.1L1663.5 310.1L1660.7 310.4L1658.4 312.5L1657.9 313.8L1658.4 316.4ZM1664.0 310.1L1666.3 309.6L1669.7 309.9L1672.8 312.5L1672.5 313.6L1670.0 313.1L1669.7 317.0L1668.2 317.7L1668.2 315.1L1666.3 315.7L1666.7 312.5ZM1666.5 321.0L1669.1 321.5L1672.5 320.0L1674.9 318.2L1671.9 318.5L1668.2 319.8ZM1673.2 317.0L1676.6 317.0L1679.8 316.4L1679.6 314.6L1676.6 315.1L1674.1 315.9ZM1637.7 287.4L1639.5 286.8L1642.2 295.7L1641.4 297.5L1640.5 294.2L1638.6 291.2ZM1588.6 241.0L1595.2 236.3L1600.8 237.3L1602.1 241.0L1598.9 244.6L1596.1 242.4L1593.3 245.5L1591.5 244.2L1593.3 241.0ZM1603.6 262.0L1606.4 258.9L1610.2 256.9L1614.8 254.9L1617.6 255.3L1613.9 257.7L1611.1 260.9L1607.4 262.4ZM1614.5 270.6L1617.6 268.1L1623.3 268.4L1618.6 269.5L1615.8 271.0ZM1691.5 436.2L1693.4 436.6L1694.0 438.3L1692.5 437.9ZM1661.6 384.0L1663.1 384.6L1663.7 386.1L1662.2 385.5Z" fill="#c5d8ef" stroke="#aec6e4" stroke-width="0.5"/>
<path d="M885.2 223.1L885.2 264.7L889.0 265.8L891.8 269.9L895.5 266.6L899.2 271.3L902.4 277.6L905.8 280.0L905.2 284.3M918.5 301.5L970.9 301.5L972.0 302.4L976.9 303.5L981.6 304.4M994.7 311.7L994.7 317.7L993.5 320.3M1001.2 317.2L1005.9 315.1L1008.7 312.5L1015.2 312.5L1017.5 309.3L1019.5 306.0L1022.2 306.9L1022.2 310.7L1023.7 312.5M929.9 342.6L934.4 342.2L941.3 345.3L946.6 345.3L946.6 344.2L949.8 344.2L953.5 349.0L956.3 350.3L959.1 348.6L962.9 353.5L967.2 356.8M976.5 379.4L976.5 378.0L977.8 376.5L979.9 376.5L978.8 374.3L978.8 373.2L982.1 373.2L982.1 376.9L982.7 376.9M980.4 380.9L981.9 379.8L983.4 380.7L984.9 381.7M981.9 379.8L982.1 378.4L983.8 377.3M985.7 382.5L988.1 380.7L990.4 379.0L993.3 378.6M988.7 386.1L990.5 386.3L992.4 386.5M993.9 391.6L994.1 389.0M1004.2 390.9L1003.3 393.5M1015.6 384.8L1013.4 386.1L1012.4 389.5L1013.6 391.2L1014.3 393.9L1017.9 393.9L1022.7 395.4L1022.2 398.6L1023.7 403.3L1023.7 404.8L1018.4 404.9L1018.0 407.4L1019.2 409.1L1018.0 414.9L1012.6 416.7L1010.7 420.7L1012.6 424.7L1016.9 424.9L1016.9 427.7L1018.8 427.7L1020.5 430.6L1019.9 432.9L1019.0 436.0L1019.0 440.3L1021.8 443.0L1020.8 447.0L1023.5 450.8L1021.0 454.3L1020.8 459.3L1018.8 462.5L1018.0 466.7L1017.5 473.1L1018.4 475.2L1017.1 479.7L1016.0 485.4L1014.9 490.0L1014.7 498.9L1015.6 504.4L1013.7 511.3L1013.7 517.4L1018.0 521.3L1021.0 522.2M1022.7 395.4L1025.0 395.8L1028.7 399.3L1031.5 399.5L1035.4 397.3L1036.8 391.4M1035.4 397.3L1037.1 398.6L1037.1 403.3L1039.6 404.2L1042.4 403.3L1044.2 402.7L1047.0 402.7L1050.8 402.3L1052.5 399.1M1040.5 394.4L1042.0 396.7L1040.5 399.5L1043.3 403.3M1048.0 396.1L1047.0 398.0L1047.6 400.4L1047.0 402.7M1019.2 409.1L1008.3 407.2L1007.6 406.8L1004.0 405.9L1001.6 404.4M1008.3 407.2L1007.9 411.3L1002.7 413.6L1000.1 415.2L998.8 413.4M1018.8 427.7L1020.7 427.7L1026.8 425.4L1026.8 429.0L1033.0 432.1L1036.4 433.1L1036.4 437.7L1039.9 437.9L1041.2 441.2L1040.5 444.8L1033.4 444.4L1031.9 449.6L1027.4 449.4L1023.5 450.8M1040.5 444.8L1040.9 449.4L1044.8 449.8L1047.4 453.3L1046.9 456.6L1041.2 456.4L1039.4 459.9L1044.2 460.1L1046.9 456.6M1031.9 449.6L1034.9 452.9L1041.2 456.4M1046.9 456.6L1048.5 459.7L1044.6 462.2L1041.2 466.3L1040.9 472.7L1039.7 474.7M1041.2 466.3L1045.0 467.6L1049.1 474.0M1124.7 353.0L1132.7 353.0L1132.7 350.9L1142.3 344.4L1146.6 343.3L1145.6 337.5L1144.9 336.8M1132.7 353.9L1140.0 358.7L1151.2 366.6L1155.2 370.8L1156.9 370.6L1159.9 369.8L1171.5 361.7L1175.6 363.6L1177.1 362.8L1193.9 369.8L1193.9 368.8L1195.8 368.8L1195.8 344.6M1195.8 364.8L1207.6 364.8L1212.6 364.8L1218.0 364.8M1170.5 341.1L1168.3 344.2L1166.8 347.7L1167.7 354.5L1166.6 356.2L1167.7 359.7L1171.5 361.7M1165.1 332.6L1164.5 337.9L1163.0 339.7L1165.8 343.5L1166.8 347.7M1117.2 366.2L1124.7 366.2L1124.7 361.7L1126.5 361.7L1126.5 356.6L1132.7 356.6L1132.7 353.9M1140.0 358.7L1136.8 358.7L1138.7 375.7L1139.1 377.6L1131.2 377.8L1127.5 377.4L1126.2 379.0L1121.9 375.5L1118.1 376.7M1126.2 379.0L1127.7 383.6L1123.4 383.2L1117.8 383.6M1127.7 383.6L1133.3 386.3L1134.0 387.8L1134.8 387.2L1137.4 387.1L1138.7 387.4L1138.7 385.3L1140.8 383.4L1143.4 381.3L1145.3 380.2L1147.7 378.6L1149.4 378.6L1151.4 378.0L1155.5 377.8L1156.9 375.1L1156.9 370.6M1149.4 378.6L1153.5 384.0L1155.7 385.0L1155.7 388.2L1154.2 390.1L1154.1 395.0M1155.7 385.0L1157.4 381.1L1162.1 382.5L1167.7 381.9L1174.4 381.1L1175.2 382.5L1177.1 384.4M1174.4 381.1L1178.0 374.9L1178.9 368.0L1177.1 362.8M1175.2 382.5L1175.6 383.6L1178.2 388.2L1174.8 388.2L1178.0 392.9L1176.1 395.8L1176.3 397.6L1178.9 402.9L1173.9 402.9L1170.1 402.9L1167.3 402.7M1170.1 402.9L1170.1 405.1L1167.0 405.1M1193.9 369.8L1193.9 377.3L1191.8 377.6L1190.2 383.0L1191.8 386.3L1193.3 390.7L1200.3 397.4L1196.3 397.6L1190.9 399.3L1184.5 398.6L1183.8 400.4L1178.9 402.9M1178.2 388.2L1183.8 392.0L1184.5 390.1L1191.8 386.3M1200.3 397.4L1206.6 400.4L1207.0 402.7L1204.4 409.6L1203.3 412.2L1204.0 415.2L1206.4 422.4L1203.1 423.0L1201.9 429.2L1204.8 432.3L1199.9 428.9L1193.9 427.7L1193.9 431.5L1190.2 431.5L1190.2 437.7L1192.8 440.5L1196.3 440.8M1206.6 400.4L1212.6 399.1L1216.2 398.4L1216.3 398.8L1222.9 400.4L1225.7 399.5L1225.7 408.7L1226.6 410.2M1212.6 399.1L1214.5 403.4L1212.6 406.6L1212.6 408.9L1219.5 413.0L1222.3 415.8M1212.6 408.9L1206.1 408.9L1204.4 409.6M1218.0 364.8L1217.3 372.8L1221.2 372.8M1217.3 372.8L1217.1 378.6L1216.5 383.0L1212.8 388.2L1212.8 391.0L1210.7 392.4L1216.2 398.4M1217.1 378.6L1221.0 379.8L1223.8 379.6L1228.3 383.4L1229.6 383.0M1228.3 383.4L1227.2 386.3L1229.4 385.3M1229.4 385.3L1229.1 386.5L1231.3 390.1L1236.9 392.0L1238.8 392.0L1233.2 397.6L1227.6 399.1L1225.7 399.5M1193.9 377.3L1193.0 380.5L1190.2 383.0M1193.3 390.7L1194.8 390.7L1200.4 389.0L1203.3 387.8L1205.1 389.1L1210.7 389.1L1212.8 391.0M1172.0 418.4L1173.3 418.1L1180.1 418.1L1181.9 422.2L1185.3 422.0L1185.5 420.1L1189.8 420.7L1190.2 427.7L1193.9 427.7M1171.1 439.7L1175.2 440.1L1183.4 440.1L1189.0 441.2L1192.8 440.5M1190.2 437.7L1190.2 431.5M1196.3 440.8L1199.5 441.2L1203.3 436.6L1205.9 436.6L1205.9 435.0L1211.1 433.5L1210.2 424.3L1212.6 424.9M1212.6 424.9L1214.3 428.9L1219.2 429.0L1224.6 426.8M1205.9 436.6L1210.6 438.7L1210.6 444.6L1209.6 447.8L1207.6 450.0L1208.9 454.1L1208.9 459.1L1210.6 459.1M1196.3 440.8L1198.0 444.4L1204.0 449.6L1207.6 450.0M1204.0 449.6L1199.5 452.7L1196.9 456.6L1192.0 455.9L1187.7 459.1L1186.4 454.9L1186.4 449.2L1188.3 449.2L1188.3 441.8L1189.0 441.2M1186.4 454.9L1186.4 462.5L1181.6 463.1L1179.9 462.9M1132.3 320.5L1133.7 320.0L1137.4 321.3L1136.1 325.2L1135.0 326.0L1135.9 329.6L1135.2 331.9M1145.6 316.7L1147.9 318.2L1150.3 318.2L1152.2 319.0L1155.0 319.3M1153.7 295.4L1156.9 298.7L1159.9 300.1L1161.0 300.1L1164.3 301.5L1163.2 305.5L1160.4 309.3L1162.1 310.1L1161.3 312.3L1163.4 314.6L1163.0 315.7M1163.2 305.5L1167.0 305.8L1168.6 307.4L1166.4 308.5L1164.7 308.8L1162.1 310.1M1155.4 294.5L1158.4 294.5L1160.2 296.3L1161.0 300.1M1162.5 288.7L1162.1 292.1L1160.2 293.0L1160.2 296.3M1167.0 305.8L1173.3 305.8L1173.3 303.0L1171.6 297.8L1176.7 295.7L1176.3 286.8M1173.3 303.0L1177.1 301.5L1180.8 302.7L1184.2 300.1L1191.1 301.3L1191.8 304.4L1190.3 303.2L1184.2 304.9L1180.8 304.1L1179.1 307.4L1174.6 308.5L1168.6 307.4M1176.7 295.7L1184.2 300.1M1191.1 301.3L1193.9 296.6L1193.2 290.9L1193.7 285.9L1191.7 285.2L1186.0 285.2M1193.7 285.9L1199.1 281.0L1201.8 279.3L1200.8 275.2L1200.3 274.9L1201.8 268.1M1188.5 279.6L1195.8 279.0L1199.1 281.0M1194.5 273.5L1200.3 274.9M1201.8 279.3L1206.8 281.3L1210.2 288.4L1207.9 292.4L1193.2 293.9M1207.9 292.4L1213.4 293.3L1215.6 297.5L1224.0 299.8L1223.3 304.6L1220.5 306.9M1191.8 304.4L1195.6 305.2L1198.8 303.5L1201.8 308.2L1201.8 311.2L1204.6 312.0M1198.8 303.5L1203.4 304.4L1205.1 308.8M1190.3 303.2L1187.0 309.3L1191.5 313.8L1190.9 319.5L1198.2 321.0L1201.4 320.3M1191.5 313.8L1200.1 314.9L1202.5 315.9M1187.0 309.3L1184.2 310.1L1179.9 308.5L1174.6 308.5M1184.2 310.1L1184.5 312.8L1178.6 312.0L1177.6 311.2L1174.4 311.2M1184.5 312.8L1185.7 315.1L1184.9 316.4L1183.6 319.0M1185.7 315.1L1187.5 320.5L1185.3 320.5M1187.5 320.5L1187.4 322.8L1188.3 323.0L1191.8 322.0L1198.2 321.0M1187.4 322.8L1186.8 326.0M1198.2 321.0L1198.8 322.0L1197.6 323.3M1206.8 222.1L1203.1 226.3L1202.3 230.4L1205.1 232.9L1203.4 236.8L1205.1 242.4L1204.6 248.6L1208.1 254.5L1201.0 263.6M1203.1 226.3L1197.6 222.6L1195.6 228.4L1191.7 229.4L1187.5 225.8L1186.4 229.4L1182.9 228.9L1178.9 236.3L1176.1 240.5L1174.6 247.3L1171.6 251.6L1171.8 262.0L1172.6 263.9L1171.1 268.8L1170.0 269.2M1187.5 225.8L1193.3 231.9L1193.2 239.2L1194.1 241.9M1216.5 332.6L1217.7 332.2L1221.6 333.1L1228.1 331.9L1232.8 331.9L1231.5 326.7L1232.8 326.0L1230.6 322.5L1226.6 321.5M1232.8 326.0L1236.0 327.9L1239.9 326.9L1240.5 329.1M1236.0 327.9L1233.2 322.0L1235.8 320.5L1239.9 320.8M1223.8 316.7L1230.9 318.5L1235.8 320.5M1232.8 331.9L1235.2 336.8L1233.9 339.3L1238.6 344.2L1239.9 348.3M1215.8 342.2L1221.6 340.6L1228.1 331.9M1221.6 340.6L1222.3 343.5L1224.6 344.0L1232.6 349.8L1236.0 350.1L1238.2 351.3L1239.5 351.3M1215.8 342.2L1215.4 344.9L1214.5 349.2M1214.5 349.2L1213.2 345.3M1218.0 349.8L1219.2 345.9L1222.3 343.5M1214.5 349.2L1218.0 349.8M1246.3 375.1L1246.3 370.8L1251.9 368.8L1253.2 364.8L1252.3 363.4L1247.4 363.0L1245.5 360.1M1252.3 363.4L1254.0 359.3L1254.5 358.9M1229.8 375.7L1231.7 373.9L1236.9 374.7L1240.7 371.6L1246.3 370.8M1249.8 331.7L1253.8 330.0L1257.5 330.7L1263.5 333.3L1262.2 340.0L1263.1 345.1L1264.6 345.9L1262.9 348.6L1266.9 354.1L1264.2 358.3M1262.9 348.6L1273.0 348.3L1278.6 344.0L1278.6 341.1L1280.5 340.6L1282.0 338.6L1283.0 333.8L1288.6 332.4L1289.7 332.6M1263.5 333.3L1269.7 334.0L1273.4 331.5L1276.2 332.4L1283.0 333.8M1288.6 332.4L1287.4 328.8L1287.1 325.7L1292.9 322.8L1299.0 320.3L1299.0 312.5L1303.3 312.0L1309.0 307.1L1312.3 301.3M1276.4 361.3L1281.8 359.9L1280.0 352.6L1285.6 348.3L1288.8 345.7L1288.4 342.0L1290.1 343.1L1294.6 335.9L1296.6 338.6L1296.2 344.9L1300.5 347.7L1298.7 350.7L1304.8 353.7L1313.8 355.8L1315.1 353.9L1321.3 354.7L1326.7 349.8L1331.2 352.0M1300.5 347.7L1309.9 352.4L1315.1 353.9M1313.8 355.8L1313.8 358.9L1314.9 360.1L1315.1 365.4M1313.8 358.9L1317.0 358.1L1321.9 358.7L1319.6 361.7L1322.2 366.2L1321.7 367.4M1322.2 366.2L1323.5 360.7L1326.2 357.6L1331.2 352.0M1331.2 352.0L1333.7 356.8L1331.4 360.7L1334.2 364.8L1338.3 366.4L1339.5 364.0L1345.1 363.2L1348.6 363.0L1351.0 365.8M1338.3 366.4L1336.3 368.2L1337.0 369.8L1338.3 369.8L1338.0 373.3L1340.0 372.4L1343.6 372.2L1345.1 375.9L1346.6 379.8L1350.1 379.2L1350.1 383.8L1346.9 385.1L1344.3 387.4M1338.3 366.4L1340.2 364.0M1343.6 372.2L1345.8 371.6L1350.1 376.7L1350.1 379.2M1346.6 379.8L1340.4 380.2L1341.3 385.0M1334.2 364.8L1336.3 368.2M1336.3 368.2L1334.0 369.4L1332.0 371.8L1334.0 375.9L1332.7 378.4L1334.6 382.5L1335.3 384.8L1333.8 387.8M1336.3 395.0L1338.1 396.3L1340.0 395.4M1312.3 301.3L1321.1 296.3L1332.9 297.2L1331.0 299.5L1340.4 297.2L1348.6 297.8L1356.7 300.7L1367.3 299.2L1373.1 301.0L1373.3 308.0L1368.6 308.2L1365.1 311.5L1358.3 312.5L1358.3 315.9L1345.4 321.3L1336.1 318.5L1329.3 318.5L1319.1 312.0L1319.1 307.4L1313.3 301.0M1373.1 301.0L1373.7 290.9L1380.2 288.1L1387.5 299.2L1393.3 301.8L1393.5 305.2L1401.6 303.0L1398.0 312.3L1394.6 312.8L1394.5 316.4L1393.3 319.3M1393.3 319.3L1392.0 318.0L1388.5 320.3L1386.4 320.8L1381.7 325.0M1386.0 330.5L1389.2 328.6M1236.9 304.4L1236.0 303.2L1237.5 297.8L1245.2 293.9L1251.9 295.7L1258.6 295.7L1263.9 296.3L1264.2 286.8L1276.6 283.3L1281.8 285.9L1286.3 286.8L1292.7 285.2L1298.9 296.3L1305.0 295.7L1312.3 301.3M1245.0 312.0L1248.2 311.7L1253.6 312.5L1253.8 322.0L1255.6 322.0L1258.6 318.2L1264.8 316.2L1270.4 315.9L1272.7 317.7L1273.8 322.3L1276.4 322.8L1280.9 320.3L1282.4 318.2L1286.5 317.7L1288.0 317.2L1299.0 319.3M1249.8 331.7L1251.3 331.2M1248.2 322.8L1251.3 320.3L1253.8 322.0M1255.6 322.0L1261.2 319.8L1265.7 325.2L1273.4 331.5M1273.4 331.5L1276.2 332.4L1277.0 329.6L1275.8 326.2L1280.9 325.2L1280.9 322.8L1285.9 324.0L1287.1 325.7M1277.0 329.6L1281.8 328.8L1283.0 333.1M1412.8 411.9L1412.8 424.1M1354.0 403.1L1354.8 405.1L1358.2 405.1L1363.4 404.4L1365.6 398.8L1369.0 399.1M1381.2 424.7L1382.9 424.5L1383.0 425.2M1558.7 223.1L1558.7 264.7L1562.5 265.8L1565.3 269.9L1569.0 266.6L1572.7 271.3L1575.9 277.6L1579.3 280.0L1578.7 284.3M1592.0 301.5L1644.4 301.5L1645.5 302.4L1650.4 303.5L1655.1 304.4M1668.2 311.7L1668.2 317.7L1667.0 320.3M1674.7 317.2L1679.4 315.1L1682.2 312.5L1688.7 312.5L1691.0 309.3L1693.0 306.0L1695.7 306.9L1695.7 310.7L1697.2 312.5M1603.4 342.6L1607.9 342.2L1614.8 345.3L1620.1 345.3L1620.1 344.2L1623.3 344.2L1627.0 349.0L1629.8 350.3L1632.6 348.6L1636.4 353.5L1640.7 356.8M1650.0 379.4L1650.0 378.0L1651.3 376.5L1653.4 376.5L1652.3 374.3L1652.3 373.2L1655.6 373.2L1655.6 376.9L1656.2 376.9M1653.9 380.9L1655.4 379.8L1656.9 380.7L1658.4 381.7M1655.4 379.8L1655.6 378.4L1657.3 377.3M1659.2 382.5L1661.6 380.7L1663.9 379.0L1666.8 378.6M1662.2 386.1L1664.0 386.3L1665.9 386.5M1667.4 391.6L1667.6 389.0M1677.7 390.9L1676.8 393.5M1689.1 384.8L1686.9 386.1L1685.9 389.5L1687.1 391.2L1687.8 393.9L1691.4 393.9L1696.2 395.4L1695.7 398.6L1697.2 403.3L1697.2 404.8L1691.9 404.9L1691.5 407.4L1692.7 409.1L1691.5 414.9L1686.1 416.7L1684.2 420.7L1686.1 424.7L1690.4 424.9L1690.4 427.7L1692.3 427.7L1694.0 430.6L1693.4 432.9L1692.5 436.0L1692.5 440.3L1695.3 443.0L1694.3 447.0L1697.0 450.8L1694.5 454.3L1694.3 459.3L1692.3 462.5L1691.5 466.7L1691.0 473.1L1691.9 475.2L1690.6 479.7L1689.5 485.4L1688.4 490.0L1688.2 498.9L1689.1 504.4L1687.2 511.3L1687.2 517.4L1691.5 521.3L1694.5 522.2M1696.2 395.4L1698.5 395.8L1702.2 399.3L1705.0 399.5L1708.9 397.3L1710.2 391.4M1708.9 397.3L1710.6 398.6L1710.6 403.3L1713.1 404.2L1715.9 403.3L1717.7 402.7L1720.5 402.7L1724.3 402.3L1726.0 399.1M1714.0 394.4L1715.5 396.7L1714.0 399.5L1716.8 403.3M1721.5 396.1L1720.5 398.0L1721.1 400.4L1720.5 402.7M1692.7 409.1L1681.8 407.2L1681.1 406.8L1677.5 405.9L1675.1 404.4M1681.8 407.2L1681.4 411.3L1676.2 413.6L1673.6 415.2L1672.3 413.4M1692.3 427.7L1694.2 427.7L1700.3 425.4L1700.3 429.0L1706.5 432.1L1709.9 433.1L1709.9 437.7L1713.4 437.9L1714.7 441.2L1714.0 444.8L1706.9 444.4L1705.4 449.6L1700.9 449.4L1697.0 450.8M1714.0 444.8L1714.4 449.4L1718.3 449.8L1720.9 453.3L1720.4 456.6L1714.7 456.4L1712.9 459.9L1717.7 460.1L1720.4 456.6M1705.4 449.6L1708.4 452.9L1714.7 456.4M1720.4 456.6L1722.0 459.7L1718.1 462.2L1714.7 466.3L1714.4 472.7L1713.2 474.7M1714.7 466.3L1718.5 467.6L1722.6 474.0" fill="none" stroke="#c2c2cc" stroke-width="0.8" stroke-linejoin="round"/>
<text x="945.1" y="294.1" text-anchor="middle" font-family="'Liberation Sans',sans-serif" font-weight="700" font-size="13" letter-spacing="-0.24" fill="#2a2e44" stroke="#fff" stroke-width="2.4" stroke-linejoin="round" paint-order="stroke" stroke-opacity="0.9">NORTH</text>
<text x="945.0" y="310.0" text-anchor="middle" font-family="'Liberation Sans',sans-serif" font-weight="700" font-size="13" letter-spacing="-0.38" fill="#2a2e44" stroke="#fff" stroke-width="2.4" stroke-linejoin="round" paint-order="stroke" stroke-opacity="0.9">AMERICA</text>
<text x="1034.3" y="445.9" text-anchor="middle" font-family="'Liberation Sans',sans-serif" font-weight="700" font-size="13" letter-spacing="-0.38" fill="#2a2e44" stroke="#fff" stroke-width="2.4" stroke-linejoin="round" paint-order="stroke" stroke-opacity="0.9">SOUTH</text>
<text x="1034.5" y="461.5" text-anchor="middle" font-family="'Liberation Sans',sans-serif" font-weight="700" font-size="13" letter-spacing="-0.38" fill="#2a2e44" stroke="#fff" stroke-width="2.4" stroke-linejoin="round" paint-order="stroke" stroke-opacity="0.9">AMERICA</text>
<text x="1618.6" y="294.1" text-anchor="middle" font-family="'Liberation Sans',sans-serif" font-weight="700" font-size="13" letter-spacing="-0.24" fill="#2a2e44" stroke="#fff" stroke-width="2.4" stroke-linejoin="round" paint-order="stroke" stroke-opacity="0.9">NORTH</text>
<text x="1618.5" y="310.0" text-anchor="middle" font-family="'Liberation Sans',sans-serif" font-weight="700" font-size="13" letter-spacing="-0.38" fill="#2a2e44" stroke="#fff" stroke-width="2.4" stroke-linejoin="round" paint-order="stroke" stroke-opacity="0.9">AMERICA</text>
<text x="1707.8" y="445.9" text-anchor="middle" font-family="'Liberation Sans',sans-serif" font-weight="700" font-size="13" letter-spacing="-0.38" fill="#2a2e44" stroke="#fff" stroke-width="2.4" stroke-linejoin="round" paint-order="stroke" stroke-opacity="0.9">SOUTH</text>
<text x="1708.0" y="461.5" text-anchor="middle" font-family="'Liberation Sans',sans-serif" font-weight="700" font-size="13" letter-spacing="-0.38" fill="#2a2e44" stroke="#fff" stroke-width="2.4" stroke-linejoin="round" paint-order="stroke" stroke-opacity="0.9">AMERICA</text>
<text x="1181.9" y="392.1" text-anchor="middle" font-family="'Liberation Sans',sans-serif" font-weight="700" font-size="13" letter-spacing="-0.52" fill="#2a2e44" stroke="#fff" stroke-width="2.4" stroke-linejoin="round" paint-order="stroke" stroke-opacity="0.9">AFRICA</text>
<text x="1315.9" y="301.0" text-anchor="middle" font-family="'Liberation Sans',sans-serif" font-weight="700" font-size="13" letter-spacing="-0.24" fill="#2a2e44" stroke="#fff" stroke-width="2.4" stroke-linejoin="round" paint-order="stroke" stroke-opacity="0.9">ASIA</text>
<text x="1473.8" y="437.4" text-anchor="middle" font-family="'Liberation Sans',sans-serif" font-weight="700" font-size="13" letter-spacing="-0.04" fill="#2a2e44" stroke="#fff" stroke-width="2.4" stroke-linejoin="round" paint-order="stroke" stroke-opacity="0.9">OCEANIA</text>
<text x="800.3" y="437.4" text-anchor="middle" font-family="'Liberation Sans',sans-serif" font-weight="700" font-size="13" letter-spacing="-0.04" fill="#2a2e44" stroke="#fff" stroke-width="2.4" stroke-linejoin="round" paint-order="stroke" stroke-opacity="0.9">OCEANIA</text>
<text x="1404.4" y="462.0" text-anchor="middle" font-family="'Liberation Sans',sans-serif" font-weight="700" font-size="13" letter-spacing="-0.46" fill="#2a2e44" stroke="#fff" stroke-width="2.4" stroke-linejoin="round" paint-order="stroke" stroke-opacity="0.9">AUSTRALIA</text>
<circle cx="1011.4" cy="311.7" r="4.850" fill="#409f8f" fill-opacity="0.92" stroke="#2a6f63" stroke-opacity="0.97" stroke-width="0.9"/>
<circle cx="1684.4" cy="311.7" r="4.850" fill="#409f8f" fill-opacity="0.92" stroke="#2a6f63" stroke-opacity="0.97" stroke-width="0.9"/>
<circle cx="990.4" cy="322.4" r="4.850" fill="#409f8f" fill-opacity="0.92" stroke="#2a6f63" stroke-opacity="0.97" stroke-width="0.9"/>
<circle cx="1663.4" cy="322.4" r="4.850" fill="#409f8f" fill-opacity="0.92" stroke="#2a6f63" stroke-opacity="0.97" stroke-width="0.9"/>
<circle cx="1014.2" cy="326.2" r="4.850" fill="#409f8f" fill-opacity="0.92" stroke="#2a6f63" stroke-opacity="0.97" stroke-width="0.9"/>
<circle cx="1687.2" cy="326.2" r="4.850" fill="#409f8f" fill-opacity="0.92" stroke="#2a6f63" stroke-opacity="0.97" stroke-width="0.9"/>
<circle cx="985.8" cy="337.3" r="4.850" fill="#409f8f" fill-opacity="0.92" stroke="#2a6f63" stroke-opacity="0.97" stroke-width="0.9"/>
<circle cx="1658.8" cy="337.3" r="4.850" fill="#409f8f" fill-opacity="0.92" stroke="#2a6f63" stroke-opacity="0.97" stroke-width="0.9"/>
<circle cx="940.6" cy="337.8" r="4.850" fill="#409f8f" fill-opacity="0.92" stroke="#2a6f63" stroke-opacity="0.97" stroke-width="0.9"/>
<circle cx="1613.6" cy="337.8" r="4.850" fill="#409f8f" fill-opacity="0.92" stroke="#2a6f63" stroke-opacity="0.97" stroke-width="0.9"/>
<circle cx="971.8" cy="350.9" r="4.850" fill="#409f8f" fill-opacity="0.92" stroke="#2a6f63" stroke-opacity="0.97" stroke-width="0.9"/>
<circle cx="1644.8" cy="350.9" r="4.850" fill="#409f8f" fill-opacity="0.92" stroke="#2a6f63" stroke-opacity="0.97" stroke-width="0.9"/>
<circle cx="955.5" cy="358.8" r="4.850" fill="#409f8f" fill-opacity="0.92" stroke="#2a6f63" stroke-opacity="0.97" stroke-width="0.9"/>
<circle cx="1628.5" cy="358.8" r="4.850" fill="#409f8f" fill-opacity="0.92" stroke="#2a6f63" stroke-opacity="0.97" stroke-width="0.9"/>
<circle cx="998.8" cy="358.8" r="4.850" fill="#409f8f" fill-opacity="0.92" stroke="#2a6f63" stroke-opacity="0.97" stroke-width="0.9"/>
<circle cx="1671.8" cy="358.8" r="4.850" fill="#409f8f" fill-opacity="0.92" stroke="#2a6f63" stroke-opacity="0.97" stroke-width="0.9"/>
<circle cx="965.3" cy="372.3" r="4.850" fill="#409f8f" fill-opacity="0.92" stroke="#2a6f63" stroke-opacity="0.97" stroke-width="0.9"/>
<circle cx="1638.3" cy="372.3" r="4.850" fill="#409f8f" fill-opacity="0.92" stroke="#2a6f63" stroke-opacity="0.97" stroke-width="0.9"/>
<circle cx="1017.0" cy="372.3" r="4.850" fill="#409f8f" fill-opacity="0.92" stroke="#2a6f63" stroke-opacity="0.97" stroke-width="0.9"/>
<circle cx="1690.0" cy="372.3" r="4.850" fill="#409f8f" fill-opacity="0.92" stroke="#2a6f63" stroke-opacity="0.97" stroke-width="0.9"/>
<circle cx="918.6" cy="301.9" r="4.850" fill="#e0382c" fill-opacity="0.78" stroke="#9a2a22" stroke-opacity="0.83" stroke-width="0.9"/>
<circle cx="1591.6" cy="301.9" r="4.850" fill="#e0382c" fill-opacity="0.78" stroke="#9a2a22" stroke-opacity="0.83" stroke-width="0.9"/>
<circle cx="919.1" cy="304.2" r="4.850" fill="#e0281c" fill-opacity="0.96" stroke="#7d1610" stroke-opacity="1.00" stroke-width="0.9"/>
<circle cx="1592.1" cy="304.2" r="4.850" fill="#e0281c" fill-opacity="0.96" stroke="#7d1610" stroke-opacity="1.00" stroke-width="0.9"/>
<circle cx="918.2" cy="307.5" r="4.850" fill="#e0281c" fill-opacity="0.96" stroke="#7d1610" stroke-opacity="1.00" stroke-width="0.9"/>
<circle cx="1591.2" cy="307.5" r="4.850" fill="#e0281c" fill-opacity="0.96" stroke="#7d1610" stroke-opacity="1.00" stroke-width="0.9"/>
<circle cx="925.2" cy="312.2" r="4.850" fill="#e0281c" fill-opacity="0.96" stroke="#7d1610" stroke-opacity="1.00" stroke-width="0.9"/>
<circle cx="1598.2" cy="312.2" r="4.850" fill="#e0281c" fill-opacity="0.96" stroke="#7d1610" stroke-opacity="1.00" stroke-width="0.9"/>
<circle cx="949.0" cy="314.5" r="4.850" fill="#e0281c" fill-opacity="0.96" stroke="#7d1610" stroke-opacity="1.00" stroke-width="0.9"/>
<circle cx="1622.0" cy="314.5" r="4.850" fill="#e0281c" fill-opacity="0.96" stroke="#7d1610" stroke-opacity="1.00" stroke-width="0.9"/>
<circle cx="974.6" cy="314.0" r="4.850" fill="#e0281c" fill-opacity="0.96" stroke="#7d1610" stroke-opacity="1.00" stroke-width="0.9"/>
<circle cx="1647.6" cy="314.0" r="4.850" fill="#e0281c" fill-opacity="0.96" stroke="#7d1610" stroke-opacity="1.00" stroke-width="0.9"/>
<circle cx="968.1" cy="323.4" r="4.850" fill="#e0281c" fill-opacity="0.96" stroke="#7d1610" stroke-opacity="1.00" stroke-width="0.9"/>
<circle cx="1641.1" cy="323.4" r="4.850" fill="#e0281c" fill-opacity="0.96" stroke="#7d1610" stroke-opacity="1.00" stroke-width="0.9"/>
<circle cx="974.1" cy="322.4" r="4.850" fill="#e0281c" fill-opacity="0.96" stroke="#7d1610" stroke-opacity="1.00" stroke-width="0.9"/>
<circle cx="1647.1" cy="322.4" r="4.850" fill="#e0281c" fill-opacity="0.96" stroke="#7d1610" stroke-opacity="1.00" stroke-width="0.9"/>
<circle cx="984.4" cy="321.5" r="4.850" fill="#e0281c" fill-opacity="0.96" stroke="#7d1610" stroke-opacity="1.00" stroke-width="0.9"/>
<circle cx="1657.4" cy="321.5" r="4.850" fill="#e0281c" fill-opacity="0.96" stroke="#7d1610" stroke-opacity="1.00" stroke-width="0.9"/>
<circle cx="1000.2" cy="317.3" r="4.850" fill="#e0281c" fill-opacity="0.96" stroke="#7d1610" stroke-opacity="1.00" stroke-width="0.9"/>
<circle cx="1673.2" cy="317.3" r="4.850" fill="#e0281c" fill-opacity="0.96" stroke="#7d1610" stroke-opacity="1.00" stroke-width="0.9"/>
<circle cx="1001.2" cy="319.6" r="4.850" fill="#e0281c" fill-opacity="0.96" stroke="#7d1610" stroke-opacity="1.00" stroke-width="0.9"/>
<circle cx="1674.2" cy="319.6" r="4.850" fill="#e0281c" fill-opacity="0.96" stroke="#7d1610" stroke-opacity="1.00" stroke-width="0.9"/>
<circle cx="1016.6" cy="321.5" r="4.850" fill="#e0382c" fill-opacity="0.78" stroke="#9a2a22" stroke-opacity="0.83" stroke-width="0.9"/>
<circle cx="1689.6" cy="321.5" r="4.850" fill="#e0382c" fill-opacity="0.78" stroke="#9a2a22" stroke-opacity="0.83" stroke-width="0.9"/>
<circle cx="1015.2" cy="322.4" r="4.850" fill="#e0281c" fill-opacity="0.96" stroke="#7d1610" stroke-opacity="1.00" stroke-width="0.9"/>
<circle cx="1688.2" cy="322.4" r="4.850" fill="#e0281c" fill-opacity="0.96" stroke="#7d1610" stroke-opacity="1.00" stroke-width="0.9"/>
<circle cx="1009.6" cy="324.8" r="4.850" fill="#e0281c" fill-opacity="0.96" stroke="#7d1610" stroke-opacity="1.00" stroke-width="0.9"/>
<circle cx="1682.6" cy="324.8" r="4.850" fill="#e0281c" fill-opacity="0.96" stroke="#7d1610" stroke-opacity="1.00" stroke-width="0.9"/>
<circle cx="993.7" cy="326.6" r="4.850" fill="#e0281c" fill-opacity="0.96" stroke="#7d1610" stroke-opacity="1.00" stroke-width="0.9"/>
<circle cx="1666.7" cy="326.6" r="4.850" fill="#e0281c" fill-opacity="0.96" stroke="#7d1610" stroke-opacity="1.00" stroke-width="0.9"/>
<circle cx="1002.6" cy="329.9" r="4.850" fill="#e0281c" fill-opacity="0.96" stroke="#7d1610" stroke-opacity="1.00" stroke-width="0.9"/>
<circle cx="1675.6" cy="329.9" r="4.850" fill="#e0281c" fill-opacity="0.96" stroke="#7d1610" stroke-opacity="1.00" stroke-width="0.9"/>
<circle cx="990.9" cy="330.8" r="4.850" fill="#e0281c" fill-opacity="0.96" stroke="#7d1610" stroke-opacity="1.00" stroke-width="0.9"/>
<circle cx="1663.9" cy="330.8" r="4.850" fill="#e0281c" fill-opacity="0.96" stroke="#7d1610" stroke-opacity="1.00" stroke-width="0.9"/>
<circle cx="989.5" cy="332.2" r="4.850" fill="#e0281c" fill-opacity="0.96" stroke="#7d1610" stroke-opacity="1.00" stroke-width="0.9"/>
<circle cx="1662.5" cy="332.2" r="4.850" fill="#e0281c" fill-opacity="0.96" stroke="#7d1610" stroke-opacity="1.00" stroke-width="0.9"/>
<circle cx="1002.1" cy="334.5" r="4.850" fill="#e0281c" fill-opacity="0.96" stroke="#7d1610" stroke-opacity="1.00" stroke-width="0.9"/>
<circle cx="1675.1" cy="334.5" r="4.850" fill="#e0281c" fill-opacity="0.96" stroke="#7d1610" stroke-opacity="1.00" stroke-width="0.9"/>
<circle cx="980.2" cy="329.9" r="4.850" fill="#b8382c" fill-opacity="0.97" stroke="#6a1912" stroke-opacity="1.00" stroke-width="0.9"/>
<circle cx="1653.2" cy="329.9" r="4.850" fill="#b8382c" fill-opacity="0.97" stroke="#6a1912" stroke-opacity="1.00" stroke-width="0.9"/>
<circle cx="966.2" cy="332.2" r="4.850" fill="#e0281c" fill-opacity="0.96" stroke="#7d1610" stroke-opacity="1.00" stroke-width="0.9"/>
<circle cx="1639.2" cy="332.2" r="4.850" fill="#e0281c" fill-opacity="0.96" stroke="#7d1610" stroke-opacity="1.00" stroke-width="0.9"/>
<circle cx="990.9" cy="340.6" r="4.850" fill="#e0281c" fill-opacity="0.96" stroke="#7d1610" stroke-opacity="1.00" stroke-width="0.9"/>
<circle cx="1663.9" cy="340.6" r="4.850" fill="#e0281c" fill-opacity="0.96" stroke="#7d1610" stroke-opacity="1.00" stroke-width="0.9"/>
<circle cx="986.7" cy="344.8" r="4.850" fill="#e0281c" fill-opacity="0.96" stroke="#7d1610" stroke-opacity="1.00" stroke-width="0.9"/>
<circle cx="1659.7" cy="344.8" r="4.850" fill="#e0281c" fill-opacity="0.96" stroke="#7d1610" stroke-opacity="1.00" stroke-width="0.9"/>
<circle cx="999.3" cy="343.4" r="4.850" fill="#e0281c" fill-opacity="0.96" stroke="#7d1610" stroke-opacity="1.00" stroke-width="0.9"/>
<circle cx="1672.3" cy="343.4" r="4.850" fill="#e0281c" fill-opacity="0.96" stroke="#7d1610" stroke-opacity="1.00" stroke-width="0.9"/>
<circle cx="971.8" cy="343.9" r="4.850" fill="#e0382c" fill-opacity="0.78" stroke="#9a2a22" stroke-opacity="0.83" stroke-width="0.9"/>
<circle cx="1644.8" cy="343.9" r="4.850" fill="#e0382c" fill-opacity="0.78" stroke="#9a2a22" stroke-opacity="0.83" stroke-width="0.9"/>
<circle cx="968.1" cy="342.5" r="4.850" fill="#e0281c" fill-opacity="0.96" stroke="#7d1610" stroke-opacity="1.00" stroke-width="0.9"/>
<circle cx="1641.1" cy="342.5" r="4.850" fill="#e0281c" fill-opacity="0.96" stroke="#7d1610" stroke-opacity="1.00" stroke-width="0.9"/>
<circle cx="964.3" cy="350.9" r="4.850" fill="#e0281c" fill-opacity="0.96" stroke="#7d1610" stroke-opacity="1.00" stroke-width="0.9"/>
<circle cx="1637.3" cy="350.9" r="4.850" fill="#e0281c" fill-opacity="0.96" stroke="#7d1610" stroke-opacity="1.00" stroke-width="0.9"/>
<circle cx="921.9" cy="329.0" r="4.850" fill="#e0382c" fill-opacity="0.78" stroke="#9a2a22" stroke-opacity="0.83" stroke-width="0.9"/>
<circle cx="1594.9" cy="329.0" r="4.850" fill="#e0382c" fill-opacity="0.78" stroke="#9a2a22" stroke-opacity="0.83" stroke-width="0.9"/>
<circle cx="919.1" cy="330.3" r="4.850" fill="#e0281c" fill-opacity="0.96" stroke="#7d1610" stroke-opacity="1.00" stroke-width="0.9"/>
<circle cx="1592.1" cy="330.3" r="4.850" fill="#e0281c" fill-opacity="0.96" stroke="#7d1610" stroke-opacity="1.00" stroke-width="0.9"/>
<circle cx="921.0" cy="333.1" r="4.850" fill="#e0281c" fill-opacity="0.96" stroke="#7d1610" stroke-opacity="1.00" stroke-width="0.9"/>
<circle cx="1594.0" cy="333.1" r="4.850" fill="#e0281c" fill-opacity="0.96" stroke="#7d1610" stroke-opacity="1.00" stroke-width="0.9"/>
<circle cx="932.6" cy="342.5" r="4.850" fill="#e0382c" fill-opacity="0.78" stroke="#9a2a22" stroke-opacity="0.83" stroke-width="0.9"/>
<circle cx="1605.6" cy="342.5" r="4.850" fill="#e0382c" fill-opacity="0.78" stroke="#9a2a22" stroke-opacity="0.83" stroke-width="0.9"/>
<circle cx="933.6" cy="335.5" r="4.850" fill="#e0281c" fill-opacity="0.96" stroke="#7d1610" stroke-opacity="1.00" stroke-width="0.9"/>
<circle cx="1606.6" cy="335.5" r="4.850" fill="#e0281c" fill-opacity="0.96" stroke="#7d1610" stroke-opacity="1.00" stroke-width="0.9"/>
<circle cx="928.0" cy="340.6" r="4.850" fill="#e0281c" fill-opacity="0.96" stroke="#7d1610" stroke-opacity="1.00" stroke-width="0.9"/>
<circle cx="1601.0" cy="340.6" r="4.850" fill="#e0281c" fill-opacity="0.96" stroke="#7d1610" stroke-opacity="1.00" stroke-width="0.9"/>
<circle cx="949.4" cy="346.2" r="4.850" fill="#e0382c" fill-opacity="0.78" stroke="#9a2a22" stroke-opacity="0.83" stroke-width="0.9"/>
<circle cx="1622.4" cy="346.2" r="4.850" fill="#e0382c" fill-opacity="0.78" stroke="#9a2a22" stroke-opacity="0.83" stroke-width="0.9"/>
<circle cx="958.7" cy="368.1" r="4.850" fill="#e0382c" fill-opacity="0.78" stroke="#9a2a22" stroke-opacity="0.83" stroke-width="0.9"/>
<circle cx="1631.7" cy="368.1" r="4.850" fill="#e0382c" fill-opacity="0.78" stroke="#9a2a22" stroke-opacity="0.83" stroke-width="0.9"/>
<circle cx="979.7" cy="380.7" r="4.850" fill="#e0382c" fill-opacity="0.78" stroke="#9a2a22" stroke-opacity="0.83" stroke-width="0.9"/>
<circle cx="1652.7" cy="380.7" r="4.850" fill="#e0382c" fill-opacity="0.78" stroke="#9a2a22" stroke-opacity="0.83" stroke-width="0.9"/>
<circle cx="991.4" cy="388.2" r="4.850" fill="#e0281c" fill-opacity="0.96" stroke="#7d1610" stroke-opacity="1.00" stroke-width="0.9"/>
<circle cx="1664.4" cy="388.2" r="4.850" fill="#e0281c" fill-opacity="0.96" stroke="#7d1610" stroke-opacity="1.00" stroke-width="0.9"/>
<circle cx="998.8" cy="389.6" r="4.850" fill="#e0281c" fill-opacity="0.96" stroke="#7d1610" stroke-opacity="1.00" stroke-width="0.9"/>
<circle cx="1671.8" cy="389.6" r="4.850" fill="#e0281c" fill-opacity="0.96" stroke="#7d1610" stroke-opacity="1.00" stroke-width="0.9"/>
<circle cx="1011.0" cy="312.6" r="4.850" fill="#b8382c" fill-opacity="0.97" stroke="#6a1912" stroke-opacity="1.00" stroke-width="0.9"/>
<circle cx="1684.0" cy="312.6" r="4.850" fill="#b8382c" fill-opacity="0.97" stroke="#6a1912" stroke-opacity="1.00" stroke-width="0.9"/>
<circle cx="996.0" cy="353.7" r="4.850" fill="#b8382c" fill-opacity="0.97" stroke="#6a1912" stroke-opacity="1.00" stroke-width="0.9"/>
<circle cx="1669.0" cy="353.7" r="4.850" fill="#b8382c" fill-opacity="0.97" stroke="#6a1912" stroke-opacity="1.00" stroke-width="0.9"/>
<circle cx="1077.0" cy="415.2" r="4.850" fill="#409f8f" fill-opacity="0.92" stroke="#2a6f63" stroke-opacity="0.97" stroke-width="0.9"/>
<circle cx="1077.0" cy="432.9" r="4.850" fill="#409f8f" fill-opacity="0.92" stroke="#2a6f63" stroke-opacity="0.97" stroke-width="0.9"/>
<circle cx="1068.6" cy="444.6" r="4.850" fill="#409f8f" fill-opacity="0.92" stroke="#2a6f63" stroke-opacity="0.97" stroke-width="0.9"/>
<circle cx="1040.2" cy="453.0" r="4.850" fill="#409f8f" fill-opacity="0.92" stroke="#2a6f63" stroke-opacity="0.97" stroke-width="0.9"/>
<circle cx="1713.2" cy="453.0" r="4.850" fill="#409f8f" fill-opacity="0.92" stroke="#2a6f63" stroke-opacity="0.97" stroke-width="0.9"/>
<circle cx="1041.1" cy="457.6" r="4.850" fill="#409f8f" fill-opacity="0.92" stroke="#2a6f63" stroke-opacity="0.97" stroke-width="0.9"/>
<circle cx="1714.1" cy="457.6" r="4.850" fill="#409f8f" fill-opacity="0.92" stroke="#2a6f63" stroke-opacity="0.97" stroke-width="0.9"/>
<circle cx="1049.5" cy="455.8" r="4.850" fill="#409f8f" fill-opacity="0.92" stroke="#2a6f63" stroke-opacity="0.97" stroke-width="0.9"/>
<circle cx="1722.5" cy="455.8" r="4.850" fill="#409f8f" fill-opacity="0.92" stroke="#2a6f63" stroke-opacity="0.97" stroke-width="0.9"/>
<circle cx="1053.2" cy="452.1" r="4.850" fill="#409f8f" fill-opacity="0.92" stroke="#2a6f63" stroke-opacity="0.97" stroke-width="0.9"/>
<circle cx="1057.9" cy="459.5" r="4.850" fill="#409f8f" fill-opacity="0.92" stroke="#2a6f63" stroke-opacity="0.97" stroke-width="0.9"/>
<circle cx="1054.2" cy="465.1" r="4.850" fill="#409f8f" fill-opacity="0.92" stroke="#2a6f63" stroke-opacity="0.97" stroke-width="0.9"/>
<circle cx="1057.0" cy="464.2" r="4.850" fill="#409f8f" fill-opacity="0.92" stroke="#2a6f63" stroke-opacity="0.97" stroke-width="0.9"/>
<circle cx="1029.0" cy="470.2" r="4.850" fill="#409f8f" fill-opacity="0.92" stroke="#2a6f63" stroke-opacity="0.97" stroke-width="0.9"/>
<circle cx="1702.0" cy="470.2" r="4.850" fill="#409f8f" fill-opacity="0.92" stroke="#2a6f63" stroke-opacity="0.97" stroke-width="0.9"/>
<circle cx="1028.1" cy="480.0" r="4.850" fill="#409f8f" fill-opacity="0.7" stroke="#3a8576" stroke-opacity="0.75" stroke-width="0.9"/>
<circle cx="1701.1" cy="480.0" r="4.850" fill="#409f8f" fill-opacity="0.7" stroke="#3a8576" stroke-opacity="0.75" stroke-width="0.9"/>
<circle cx="1006.6" cy="430.6" r="4.850" fill="#409f8f" fill-opacity="0.92" stroke="#2a6f63" stroke-opacity="0.97" stroke-width="0.9"/>
<circle cx="1679.6" cy="430.6" r="4.850" fill="#409f8f" fill-opacity="0.92" stroke="#2a6f63" stroke-opacity="0.97" stroke-width="0.9"/>
<circle cx="979.6" cy="380.7" r="4.850" fill="#e0382c" fill-opacity="0.78" stroke="#9a2a22" stroke-opacity="0.83" stroke-width="0.9"/>
<circle cx="1652.6" cy="380.7" r="4.850" fill="#e0382c" fill-opacity="0.78" stroke="#9a2a22" stroke-opacity="0.83" stroke-width="0.9"/>
<circle cx="991.2" cy="389.6" r="4.850" fill="#e0281c" fill-opacity="0.96" stroke="#7d1610" stroke-opacity="1.00" stroke-width="0.9"/>
<circle cx="1664.2" cy="389.6" r="4.850" fill="#e0281c" fill-opacity="0.96" stroke="#7d1610" stroke-opacity="1.00" stroke-width="0.9"/>
<circle cx="999.6" cy="391.4" r="4.850" fill="#e0281c" fill-opacity="0.96" stroke="#7d1610" stroke-opacity="1.00" stroke-width="0.9"/>
<circle cx="1672.6" cy="391.4" r="4.850" fill="#e0281c" fill-opacity="0.96" stroke="#7d1610" stroke-opacity="1.00" stroke-width="0.9"/>
<circle cx="1025.3" cy="393.3" r="4.850" fill="#e0281c" fill-opacity="0.96" stroke="#7d1610" stroke-opacity="1.00" stroke-width="0.9"/>
<circle cx="1698.3" cy="393.3" r="4.850" fill="#e0281c" fill-opacity="0.96" stroke="#7d1610" stroke-opacity="1.00" stroke-width="0.9"/>
<circle cx="1010.3" cy="399.8" r="4.850" fill="#e0382c" fill-opacity="0.78" stroke="#9a2a22" stroke-opacity="0.83" stroke-width="0.9"/>
<circle cx="1683.3" cy="399.8" r="4.850" fill="#e0382c" fill-opacity="0.78" stroke="#9a2a22" stroke-opacity="0.83" stroke-width="0.9"/>
<circle cx="1050.9" cy="399.4" r="4.850" fill="#e0382c" fill-opacity="0.78" stroke="#9a2a22" stroke-opacity="0.83" stroke-width="0.9"/>
<circle cx="1723.9" cy="399.4" r="4.850" fill="#e0382c" fill-opacity="0.78" stroke="#9a2a22" stroke-opacity="0.83" stroke-width="0.9"/>
<circle cx="1002.0" cy="408.7" r="4.850" fill="#b8382c" fill-opacity="0.97" stroke="#6a1912" stroke-opacity="1.00" stroke-width="0.9"/>
<circle cx="1675.0" cy="408.7" r="4.850" fill="#b8382c" fill-opacity="0.97" stroke="#6a1912" stroke-opacity="1.00" stroke-width="0.9"/>
<circle cx="1055.1" cy="420.3" r="4.850" fill="#e0382c" fill-opacity="0.78" stroke="#9a2a22" stroke-opacity="0.83" stroke-width="0.9"/>
<circle cx="1004.8" cy="431.1" r="4.850" fill="#b8382c" fill-opacity="0.97" stroke="#6a1912" stroke-opacity="1.00" stroke-width="0.9"/>
<circle cx="1677.8" cy="431.1" r="4.850" fill="#b8382c" fill-opacity="0.97" stroke="#6a1912" stroke-opacity="1.00" stroke-width="0.9"/>
<circle cx="1039.3" cy="433.4" r="4.850" fill="#e0382c" fill-opacity="0.78" stroke="#9a2a22" stroke-opacity="0.83" stroke-width="0.9"/>
<circle cx="1712.3" cy="433.4" r="4.850" fill="#e0382c" fill-opacity="0.78" stroke="#9a2a22" stroke-opacity="0.83" stroke-width="0.9"/>
<circle cx="1072.8" cy="446.9" r="4.850" fill="#e0382c" fill-opacity="0.78" stroke="#9a2a22" stroke-opacity="0.83" stroke-width="0.9"/>
<circle cx="1060.2" cy="448.8" r="4.850" fill="#e0382c" fill-opacity="0.78" stroke="#9a2a22" stroke-opacity="0.83" stroke-width="0.9"/>
<circle cx="1065.4" cy="448.3" r="4.850" fill="#e0281c" fill-opacity="0.96" stroke="#7d1610" stroke-opacity="1.00" stroke-width="0.9"/>
<circle cx="1062.6" cy="450.2" r="4.850" fill="#e0281c" fill-opacity="0.96" stroke="#7d1610" stroke-opacity="1.00" stroke-width="0.9"/>
<circle cx="1058.8" cy="453.0" r="4.850" fill="#e0281c" fill-opacity="0.96" stroke="#7d1610" stroke-opacity="1.00" stroke-width="0.9"/>
<circle cx="1068.2" cy="452.5" r="4.850" fill="#e0281c" fill-opacity="0.96" stroke="#7d1610" stroke-opacity="1.00" stroke-width="0.9"/>
<circle cx="1016.9" cy="474.9" r="4.850" fill="#e0281c" fill-opacity="0.96" stroke="#7d1610" stroke-opacity="1.00" stroke-width="0.9"/>
<circle cx="1689.9" cy="474.9" r="4.850" fill="#e0281c" fill-opacity="0.96" stroke="#7d1610" stroke-opacity="1.00" stroke-width="0.9"/>
<circle cx="1036.5" cy="481.0" r="4.850" fill="#e0382c" fill-opacity="0.78" stroke="#9a2a22" stroke-opacity="0.83" stroke-width="0.9"/>
<circle cx="1709.5" cy="481.0" r="4.850" fill="#e0382c" fill-opacity="0.78" stroke="#9a2a22" stroke-opacity="0.83" stroke-width="0.9"/>
<circle cx="1039.7" cy="477.2" r="4.850" fill="#b8382c" fill-opacity="0.97" stroke="#6a1912" stroke-opacity="1.00" stroke-width="0.9"/>
<circle cx="1712.7" cy="477.2" r="4.850" fill="#b8382c" fill-opacity="0.97" stroke="#6a1912" stroke-opacity="1.00" stroke-width="0.9"/>
<circle cx="1038.3" cy="478.6" r="4.850" fill="#e0281c" fill-opacity="0.96" stroke="#7d1610" stroke-opacity="1.00" stroke-width="0.9"/>
<circle cx="1711.3" cy="478.6" r="4.850" fill="#e0281c" fill-opacity="0.96" stroke="#7d1610" stroke-opacity="1.00" stroke-width="0.9"/>
<circle cx="1012.7" cy="493.1" r="4.850" fill="#409f8f" fill-opacity="0.92" stroke="#2a6f63" stroke-opacity="0.97" stroke-width="0.9"/>
<circle cx="1685.7" cy="493.1" r="4.850" fill="#409f8f" fill-opacity="0.92" stroke="#2a6f63" stroke-opacity="0.97" stroke-width="0.9"/>
<circle cx="1173.6" cy="273.8" r="4.850" fill="#409f8f" fill-opacity="0.92" stroke="#2a6f63" stroke-opacity="0.97" stroke-width="0.9"/>
<circle cx="1180.1" cy="280.8" r="4.850" fill="#409f8f" fill-opacity="0.92" stroke="#2a6f63" stroke-opacity="0.97" stroke-width="0.9"/>
<circle cx="1231.0" cy="280.3" r="4.850" fill="#409f8f" fill-opacity="0.92" stroke="#2a6f63" stroke-opacity="0.97" stroke-width="0.9"/>
<circle cx="1250.1" cy="278.9" r="4.850" fill="#409f8f" fill-opacity="0.92" stroke="#2a6f63" stroke-opacity="0.97" stroke-width="0.9"/>
<circle cx="1219.3" cy="286.8" r="4.850" fill="#409f8f" fill-opacity="0.92" stroke="#2a6f63" stroke-opacity="0.97" stroke-width="0.9"/>
<circle cx="1184.3" cy="298.0" r="4.850" fill="#409f8f" fill-opacity="0.92" stroke="#2a6f63" stroke-opacity="0.97" stroke-width="0.9"/>
<circle cx="1192.7" cy="299.0" r="4.850" fill="#409f8f" fill-opacity="0.92" stroke="#2a6f63" stroke-opacity="0.97" stroke-width="0.9"/>
<circle cx="1214.6" cy="304.5" r="4.850" fill="#409f8f" fill-opacity="0.92" stroke="#2a6f63" stroke-opacity="0.97" stroke-width="0.9"/>
<circle cx="1203.9" cy="309.2" r="4.850" fill="#409f8f" fill-opacity="0.92" stroke="#2a6f63" stroke-opacity="0.97" stroke-width="0.9"/>
<circle cx="1151.7" cy="307.8" r="4.850" fill="#409f8f" fill-opacity="0.92" stroke="#2a6f63" stroke-opacity="0.97" stroke-width="0.9"/>
<circle cx="1165.7" cy="318.1" r="4.850" fill="#409f8f" fill-opacity="0.92" stroke="#2a6f63" stroke-opacity="0.97" stroke-width="0.9"/>
<circle cx="1184.3" cy="320.4" r="4.850" fill="#409f8f" fill-opacity="0.92" stroke="#2a6f63" stroke-opacity="0.97" stroke-width="0.9"/>
<circle cx="1155.0" cy="334.4" r="4.850" fill="#409f8f" fill-opacity="0.92" stroke="#2a6f63" stroke-opacity="0.97" stroke-width="0.9"/>
<circle cx="1166.6" cy="339.5" r="4.850" fill="#409f8f" fill-opacity="0.92" stroke="#2a6f63" stroke-opacity="0.97" stroke-width="0.9"/>
<circle cx="1193.7" cy="337.2" r="4.850" fill="#409f8f" fill-opacity="0.7" stroke="#3a8576" stroke-opacity="0.75" stroke-width="0.9"/>
<circle cx="1210.4" cy="339.0" r="4.850" fill="#409f8f" fill-opacity="0.92" stroke="#2a6f63" stroke-opacity="0.97" stroke-width="0.9"/>
<circle cx="1258.0" cy="331.6" r="4.850" fill="#409f8f" fill-opacity="0.92" stroke="#2a6f63" stroke-opacity="0.97" stroke-width="0.9"/>
<circle cx="1277.6" cy="323.7" r="4.850" fill="#409f8f" fill-opacity="0.92" stroke="#2a6f63" stroke-opacity="0.97" stroke-width="0.9"/>
<circle cx="1136.8" cy="333.9" r="4.850" fill="#409f8f" fill-opacity="0.92" stroke="#2a6f63" stroke-opacity="0.97" stroke-width="0.9"/>
<circle cx="1236.1" cy="359.6" r="4.850" fill="#409f8f" fill-opacity="0.7" stroke="#3a8576" stroke-opacity="0.75" stroke-width="0.9"/>
<circle cx="1253.3" cy="358.2" r="4.850" fill="#409f8f" fill-opacity="0.92" stroke="#2a6f63" stroke-opacity="0.97" stroke-width="0.9"/>
<circle cx="1195.1" cy="266.8" r="4.850" fill="#e0281c" fill-opacity="0.96" stroke="#7d1610" stroke-opacity="1.00" stroke-width="0.9"/>
<circle cx="1205.3" cy="267.7" r="4.850" fill="#e0281c" fill-opacity="0.96" stroke="#7d1610" stroke-opacity="1.00" stroke-width="0.9"/>
<circle cx="1201.1" cy="263.1" r="4.850" fill="#e0281c" fill-opacity="0.96" stroke="#7d1610" stroke-opacity="1.00" stroke-width="0.9"/>
<circle cx="1182.5" cy="269.6" r="4.850" fill="#e0281c" fill-opacity="0.96" stroke="#7d1610" stroke-opacity="1.00" stroke-width="0.9"/>
<circle cx="1194.6" cy="285.9" r="4.850" fill="#e0281c" fill-opacity="0.96" stroke="#7d1610" stroke-opacity="1.00" stroke-width="0.9"/>
<circle cx="1193.2" cy="282.2" r="4.850" fill="#e0281c" fill-opacity="0.96" stroke="#7d1610" stroke-opacity="1.00" stroke-width="0.9"/>
<circle cx="1193.7" cy="278.0" r="4.850" fill="#e0281c" fill-opacity="0.96" stroke="#7d1610" stroke-opacity="1.00" stroke-width="0.9"/>
<circle cx="1170.8" cy="282.6" r="4.850" fill="#e0281c" fill-opacity="0.96" stroke="#7d1610" stroke-opacity="1.00" stroke-width="0.9"/>
<circle cx="1176.4" cy="279.4" r="4.850" fill="#e0281c" fill-opacity="0.96" stroke="#7d1610" stroke-opacity="1.00" stroke-width="0.9"/>
<circle cx="1134.9" cy="284.0" r="4.850" fill="#e0382c" fill-opacity="0.78" stroke="#9a2a22" stroke-opacity="0.83" stroke-width="0.9"/>
<circle cx="1141.9" cy="281.7" r="4.850" fill="#e0281c" fill-opacity="0.96" stroke="#7d1610" stroke-opacity="1.00" stroke-width="0.9"/>
<circle cx="1137.2" cy="290.1" r="4.850" fill="#e0281c" fill-opacity="0.96" stroke="#7d1610" stroke-opacity="1.00" stroke-width="0.9"/>
<circle cx="1143.8" cy="289.2" r="4.850" fill="#e0382c" fill-opacity="0.78" stroke="#9a2a22" stroke-opacity="0.83" stroke-width="0.9"/>
<circle cx="1141.0" cy="295.7" r="4.850" fill="#e0382c" fill-opacity="0.78" stroke="#9a2a22" stroke-opacity="0.83" stroke-width="0.9"/>
<circle cx="1148.4" cy="295.7" r="4.850" fill="#e0281c" fill-opacity="0.96" stroke="#7d1610" stroke-opacity="1.00" stroke-width="0.9"/>
<circle cx="1161.0" cy="290.1" r="4.850" fill="#e0281c" fill-opacity="0.96" stroke="#7d1610" stroke-opacity="1.00" stroke-width="0.9"/>
<circle cx="1158.2" cy="292.9" r="4.850" fill="#e0281c" fill-opacity="0.96" stroke="#7d1610" stroke-opacity="1.00" stroke-width="0.9"/>
<circle cx="1164.8" cy="293.8" r="4.850" fill="#e0281c" fill-opacity="0.96" stroke="#7d1610" stroke-opacity="1.00" stroke-width="0.9"/>
<circle cx="1174.1" cy="292.4" r="4.850" fill="#e0281c" fill-opacity="0.96" stroke="#7d1610" stroke-opacity="1.00" stroke-width="0.9"/>
<circle cx="1166.6" cy="296.6" r="4.850" fill="#e0281c" fill-opacity="0.96" stroke="#7d1610" stroke-opacity="1.00" stroke-width="0.9"/>
<circle cx="1175.9" cy="299.4" r="4.850" fill="#e0281c" fill-opacity="0.96" stroke="#7d1610" stroke-opacity="1.00" stroke-width="0.9"/>
<circle cx="1165.2" cy="299.9" r="4.850" fill="#e0281c" fill-opacity="0.96" stroke="#7d1610" stroke-opacity="1.00" stroke-width="0.9"/>
<circle cx="1153.1" cy="303.6" r="4.850" fill="#e0281c" fill-opacity="0.96" stroke="#7d1610" stroke-opacity="1.00" stroke-width="0.9"/>
<circle cx="1159.6" cy="311.1" r="4.850" fill="#e0382c" fill-opacity="0.78" stroke="#9a2a22" stroke-opacity="0.83" stroke-width="0.9"/>
<circle cx="1164.8" cy="307.3" r="4.850" fill="#e0281c" fill-opacity="0.96" stroke="#7d1610" stroke-opacity="1.00" stroke-width="0.9"/>
<circle cx="1172.2" cy="309.7" r="4.850" fill="#e0281c" fill-opacity="0.96" stroke="#7d1610" stroke-opacity="1.00" stroke-width="0.9"/>
<circle cx="1171.3" cy="312.5" r="4.850" fill="#e0281c" fill-opacity="0.96" stroke="#7d1610" stroke-opacity="1.00" stroke-width="0.9"/>
<circle cx="1164.8" cy="313.4" r="4.850" fill="#e0281c" fill-opacity="0.96" stroke="#7d1610" stroke-opacity="1.00" stroke-width="0.9"/>
<circle cx="1179.7" cy="305.9" r="4.850" fill="#e0382c" fill-opacity="0.78" stroke="#9a2a22" stroke-opacity="0.83" stroke-width="0.9"/>
<circle cx="1180.6" cy="308.7" r="4.850" fill="#e0382c" fill-opacity="0.78" stroke="#9a2a22" stroke-opacity="0.83" stroke-width="0.9"/>
<circle cx="1184.3" cy="306.9" r="4.850" fill="#e0281c" fill-opacity="0.96" stroke="#7d1610" stroke-opacity="1.00" stroke-width="0.9"/>
<circle cx="1188.1" cy="293.4" r="4.850" fill="#e0281c" fill-opacity="0.96" stroke="#7d1610" stroke-opacity="1.00" stroke-width="0.9"/>
<circle cx="1218.8" cy="282.2" r="4.850" fill="#e0281c" fill-opacity="0.96" stroke="#7d1610" stroke-opacity="1.00" stroke-width="0.9"/>
<circle cx="1213.2" cy="290.6" r="4.850" fill="#e0382c" fill-opacity="0.78" stroke="#9a2a22" stroke-opacity="0.83" stroke-width="0.9"/>
<circle cx="1232.8" cy="290.6" r="4.850" fill="#e0382c" fill-opacity="0.78" stroke="#9a2a22" stroke-opacity="0.83" stroke-width="0.9"/>
<circle cx="1263.6" cy="284.0" r="4.850" fill="#e0382c" fill-opacity="0.78" stroke="#9a2a22" stroke-opacity="0.83" stroke-width="0.9"/>
<circle cx="1205.8" cy="298.5" r="4.850" fill="#b8382c" fill-opacity="0.97" stroke="#6a1912" stroke-opacity="1.00" stroke-width="0.9"/>
<circle cx="1206.2" cy="303.6" r="4.850" fill="#e0382c" fill-opacity="0.78" stroke="#9a2a22" stroke-opacity="0.83" stroke-width="0.9"/>
<circle cx="1202.1" cy="302.7" r="4.850" fill="#e0281c" fill-opacity="0.96" stroke="#7d1610" stroke-opacity="1.00" stroke-width="0.9"/>
<circle cx="1195.5" cy="311.5" r="4.850" fill="#e0281c" fill-opacity="0.96" stroke="#7d1610" stroke-opacity="1.00" stroke-width="0.9"/>
<circle cx="1198.3" cy="317.1" r="4.850" fill="#e0281c" fill-opacity="0.96" stroke="#7d1610" stroke-opacity="1.00" stroke-width="0.9"/>
<circle cx="1200.7" cy="320.9" r="4.850" fill="#e0281c" fill-opacity="0.96" stroke="#7d1610" stroke-opacity="1.00" stroke-width="0.9"/>
<circle cx="1203.0" cy="324.6" r="4.850" fill="#e0281c" fill-opacity="0.96" stroke="#7d1610" stroke-opacity="1.00" stroke-width="0.9"/>
<circle cx="1194.1" cy="323.7" r="4.850" fill="#e0281c" fill-opacity="0.96" stroke="#7d1610" stroke-opacity="1.00" stroke-width="0.9"/>
<circle cx="1192.3" cy="320.4" r="4.850" fill="#e0281c" fill-opacity="0.96" stroke="#7d1610" stroke-opacity="1.00" stroke-width="0.9"/>
<circle cx="1193.2" cy="331.6" r="4.850" fill="#e0281c" fill-opacity="0.96" stroke="#7d1610" stroke-opacity="1.00" stroke-width="0.9"/>
<circle cx="1176.4" cy="325.1" r="4.850" fill="#e0382c" fill-opacity="0.78" stroke="#9a2a22" stroke-opacity="0.83" stroke-width="0.9"/>
<circle cx="1172.2" cy="322.3" r="4.850" fill="#b8382c" fill-opacity="0.97" stroke="#6a1912" stroke-opacity="1.00" stroke-width="0.9"/>
<circle cx="1221.6" cy="313.9" r="4.850" fill="#e0382c" fill-opacity="0.78" stroke="#9a2a22" stroke-opacity="0.83" stroke-width="0.9"/>
<circle cx="1231.9" cy="326.0" r="4.850" fill="#b8382c" fill-opacity="0.97" stroke="#6a1912" stroke-opacity="1.00" stroke-width="0.9"/>
<circle cx="1237.9" cy="325.5" r="4.850" fill="#e0382c" fill-opacity="0.78" stroke="#9a2a22" stroke-opacity="0.83" stroke-width="0.9"/>
<circle cx="1141.9" cy="325.5" r="4.850" fill="#b8382c" fill-opacity="0.97" stroke="#6a1912" stroke-opacity="1.00" stroke-width="0.9"/>
<circle cx="1142.4" cy="333.9" r="4.850" fill="#b8382c" fill-opacity="0.97" stroke="#6a1912" stroke-opacity="1.00" stroke-width="0.9"/>
<circle cx="1131.7" cy="329.7" r="4.850" fill="#e0281c" fill-opacity="0.96" stroke="#7d1610" stroke-opacity="1.00" stroke-width="0.9"/>
<circle cx="1134.5" cy="341.8" r="4.850" fill="#b8382c" fill-opacity="0.97" stroke="#6a1912" stroke-opacity="1.00" stroke-width="0.9"/>
<circle cx="1134.0" cy="346.5" r="4.850" fill="#e0382c" fill-opacity="0.78" stroke="#9a2a22" stroke-opacity="0.83" stroke-width="0.9"/>
<circle cx="1244.9" cy="336.7" r="4.850" fill="#e0281c" fill-opacity="0.96" stroke="#7d1610" stroke-opacity="1.00" stroke-width="0.9"/>
<circle cx="1231.0" cy="343.2" r="4.850" fill="#e0281c" fill-opacity="0.96" stroke="#7d1610" stroke-opacity="1.00" stroke-width="0.9"/>
<circle cx="1207.2" cy="349.3" r="4.850" fill="#e0281c" fill-opacity="0.96" stroke="#7d1610" stroke-opacity="1.00" stroke-width="0.9"/>
<circle cx="1276.6" cy="330.2" r="4.850" fill="#e0382c" fill-opacity="0.78" stroke="#9a2a22" stroke-opacity="0.83" stroke-width="0.9"/>
<circle cx="1161.0" cy="286.8" r="4.850" fill="#e0281c" fill-opacity="0.96" stroke="#7d1610" stroke-opacity="1.00" stroke-width="0.9"/>
<circle cx="1163.8" cy="291.5" r="4.850" fill="#e0281c" fill-opacity="0.96" stroke="#7d1610" stroke-opacity="1.00" stroke-width="0.9"/>
<circle cx="1169.0" cy="293.4" r="4.850" fill="#e0281c" fill-opacity="0.96" stroke="#7d1610" stroke-opacity="1.00" stroke-width="0.9"/>
<circle cx="1169.9" cy="298.5" r="4.850" fill="#e0281c" fill-opacity="0.96" stroke="#7d1610" stroke-opacity="1.00" stroke-width="0.9"/>
<circle cx="1162.0" cy="302.2" r="4.850" fill="#e0281c" fill-opacity="0.96" stroke="#7d1610" stroke-opacity="1.00" stroke-width="0.9"/>
<circle cx="1172.7" cy="304.5" r="4.850" fill="#e0281c" fill-opacity="0.96" stroke="#7d1610" stroke-opacity="1.00" stroke-width="0.9"/>
<circle cx="1168.5" cy="308.3" r="4.850" fill="#e0281c" fill-opacity="0.96" stroke="#7d1610" stroke-opacity="1.00" stroke-width="0.9"/>
<circle cx="1175.9" cy="305.0" r="4.850" fill="#e0281c" fill-opacity="0.96" stroke="#7d1610" stroke-opacity="1.00" stroke-width="0.9"/>
<circle cx="1161.5" cy="297.1" r="4.850" fill="#e0281c" fill-opacity="0.96" stroke="#7d1610" stroke-opacity="1.00" stroke-width="0.9"/>
<circle cx="1156.8" cy="298.5" r="4.850" fill="#e0281c" fill-opacity="0.96" stroke="#7d1610" stroke-opacity="1.00" stroke-width="0.9"/>
<circle cx="1176.9" cy="293.8" r="4.850" fill="#e0281c" fill-opacity="0.96" stroke="#7d1610" stroke-opacity="1.00" stroke-width="0.9"/>
<circle cx="1167.1" cy="303.6" r="4.850" fill="#e0281c" fill-opacity="0.96" stroke="#7d1610" stroke-opacity="1.00" stroke-width="0.9"/>
<circle cx="1175.0" cy="310.6" r="4.850" fill="#e0382c" fill-opacity="0.78" stroke="#9a2a22" stroke-opacity="0.83" stroke-width="0.9"/>
<circle cx="1179.7" cy="302.2" r="4.850" fill="#e0281c" fill-opacity="0.96" stroke="#7d1610" stroke-opacity="1.00" stroke-width="0.9"/>
<circle cx="1150.8" cy="292.0" r="4.850" fill="#e0382c" fill-opacity="0.78" stroke="#9a2a22" stroke-opacity="0.83" stroke-width="0.9"/>
<circle cx="1146.1" cy="291.5" r="4.850" fill="#e0281c" fill-opacity="0.96" stroke="#7d1610" stroke-opacity="1.00" stroke-width="0.9"/>
<circle cx="1138.6" cy="287.3" r="4.850" fill="#e0281c" fill-opacity="0.96" stroke="#7d1610" stroke-opacity="1.00" stroke-width="0.9"/>
<circle cx="1170.3" cy="315.3" r="4.850" fill="#e0281c" fill-opacity="0.96" stroke="#7d1610" stroke-opacity="1.00" stroke-width="0.9"/>
<circle cx="1163.8" cy="310.6" r="4.850" fill="#e0281c" fill-opacity="0.96" stroke="#7d1610" stroke-opacity="1.00" stroke-width="0.9"/>
<circle cx="1199.3" cy="315.3" r="4.850" fill="#e0281c" fill-opacity="0.96" stroke="#7d1610" stroke-opacity="1.00" stroke-width="0.9"/>
<circle cx="1196.5" cy="319.5" r="4.850" fill="#e0281c" fill-opacity="0.96" stroke="#7d1610" stroke-opacity="1.00" stroke-width="0.9"/>
<circle cx="1204.4" cy="321.3" r="4.850" fill="#e0281c" fill-opacity="0.96" stroke="#7d1610" stroke-opacity="1.00" stroke-width="0.9"/>
<circle cx="1190.9" cy="324.6" r="4.850" fill="#e0281c" fill-opacity="0.96" stroke="#7d1610" stroke-opacity="1.00" stroke-width="0.9"/>
<circle cx="1194.6" cy="280.8" r="4.850" fill="#e0281c" fill-opacity="0.96" stroke="#7d1610" stroke-opacity="1.00" stroke-width="0.9"/>
<circle cx="1195.5" cy="288.2" r="4.850" fill="#e0281c" fill-opacity="0.96" stroke="#7d1610" stroke-opacity="1.00" stroke-width="0.9"/>
<circle cx="1236.1" cy="360.5" r="4.850" fill="#409f8f" fill-opacity="0.7" stroke="#3a8576" stroke-opacity="0.75" stroke-width="0.9"/>
<circle cx="1254.3" cy="359.6" r="4.850" fill="#409f8f" fill-opacity="0.92" stroke="#2a6f63" stroke-opacity="0.97" stroke-width="0.9"/>
<circle cx="1220.2" cy="391.7" r="4.850" fill="#409f8f" fill-opacity="0.92" stroke="#2a6f63" stroke-opacity="0.97" stroke-width="0.9"/>
<circle cx="1227.7" cy="390.8" r="4.850" fill="#409f8f" fill-opacity="0.92" stroke="#2a6f63" stroke-opacity="0.97" stroke-width="0.9"/>
<circle cx="1148.0" cy="398.3" r="4.850" fill="#409f8f" fill-opacity="0.92" stroke="#2a6f63" stroke-opacity="0.97" stroke-width="0.9"/>
<circle cx="1220.2" cy="406.7" r="4.850" fill="#409f8f" fill-opacity="0.7" stroke="#3a8576" stroke-opacity="0.75" stroke-width="0.9"/>
<circle cx="1222.6" cy="421.6" r="4.850" fill="#409f8f" fill-opacity="0.92" stroke="#2a6f63" stroke-opacity="0.97" stroke-width="0.9"/>
<circle cx="1183.4" cy="431.8" r="4.850" fill="#409f8f" fill-opacity="0.92" stroke="#2a6f63" stroke-opacity="0.97" stroke-width="0.9"/>
<circle cx="1250.5" cy="362.4" r="4.850" fill="#e0281c" fill-opacity="0.96" stroke="#7d1610" stroke-opacity="1.00" stroke-width="0.9"/>
<circle cx="1273.8" cy="360.5" r="4.850" fill="#e0281c" fill-opacity="0.96" stroke="#7d1610" stroke-opacity="1.00" stroke-width="0.9"/>
<circle cx="1218.8" cy="386.2" r="4.850" fill="#b8382c" fill-opacity="0.97" stroke="#6a1912" stroke-opacity="1.00" stroke-width="0.9"/>
<circle cx="1141.4" cy="398.3" r="4.850" fill="#e0382c" fill-opacity="0.78" stroke="#9a2a22" stroke-opacity="0.83" stroke-width="0.9"/>
<circle cx="1155.0" cy="395.9" r="4.850" fill="#e0281c" fill-opacity="0.96" stroke="#7d1610" stroke-opacity="1.00" stroke-width="0.9"/>
<circle cx="1170.3" cy="401.5" r="4.850" fill="#e0382c" fill-opacity="0.78" stroke="#9a2a22" stroke-opacity="0.83" stroke-width="0.9"/>
<circle cx="1172.2" cy="396.4" r="4.850" fill="#e0382c" fill-opacity="0.78" stroke="#9a2a22" stroke-opacity="0.83" stroke-width="0.9"/>
<circle cx="1217.4" cy="410.9" r="4.850" fill="#b8382c" fill-opacity="0.97" stroke="#6a1912" stroke-opacity="1.00" stroke-width="0.9"/>
<circle cx="1252.9" cy="416.9" r="4.850" fill="#e0281c" fill-opacity="0.96" stroke="#7d1610" stroke-opacity="1.00" stroke-width="0.9"/>
<circle cx="1256.6" cy="446.8" r="4.850" fill="#e0281c" fill-opacity="0.96" stroke="#7d1610" stroke-opacity="1.00" stroke-width="0.9"/>
<circle cx="1210.0" cy="458.9" r="4.850" fill="#409f8f" fill-opacity="0.92" stroke="#2a6f63" stroke-opacity="0.97" stroke-width="0.9"/>
<circle cx="1200.2" cy="459.4" r="4.850" fill="#b8382c" fill-opacity="0.97" stroke="#6a1912" stroke-opacity="1.00" stroke-width="0.9"/>
<circle cx="1193.7" cy="465.4" r="4.850" fill="#e0281c" fill-opacity="0.96" stroke="#7d1610" stroke-opacity="1.00" stroke-width="0.9"/>
<circle cx="1304.0" cy="284.7" r="4.850" fill="#409f8f" fill-opacity="0.7" stroke="#3a8576" stroke-opacity="0.75" stroke-width="0.9"/>
<circle cx="1292.4" cy="293.6" r="4.850" fill="#409f8f" fill-opacity="0.7" stroke="#3a8576" stroke-opacity="0.75" stroke-width="0.9"/>
<circle cx="1325.5" cy="295.0" r="4.850" fill="#409f8f" fill-opacity="0.7" stroke="#3a8576" stroke-opacity="0.75" stroke-width="0.9"/>
<circle cx="1349.3" cy="350.4" r="4.850" fill="#409f8f" fill-opacity="0.92" stroke="#2a6f63" stroke-opacity="0.97" stroke-width="0.9"/>
<circle cx="1348.8" cy="357.9" r="4.850" fill="#409f8f" fill-opacity="0.92" stroke="#2a6f63" stroke-opacity="0.97" stroke-width="0.9"/>
<circle cx="1358.6" cy="353.2" r="4.850" fill="#409f8f" fill-opacity="0.92" stroke="#2a6f63" stroke-opacity="0.97" stroke-width="0.9"/>
<circle cx="1366.0" cy="361.6" r="4.850" fill="#409f8f" fill-opacity="0.92" stroke="#2a6f63" stroke-opacity="0.97" stroke-width="0.9"/>
<circle cx="1345.1" cy="311.3" r="4.850" fill="#e0281c" fill-opacity="0.96" stroke="#7d1610" stroke-opacity="1.00" stroke-width="0.9"/>
<circle cx="1292.4" cy="318.7" r="4.850" fill="#b8382c" fill-opacity="0.97" stroke="#6a1912" stroke-opacity="1.00" stroke-width="0.9"/>
<circle cx="1382.8" cy="319.2" r="4.850" fill="#e0382c" fill-opacity="0.78" stroke="#9a2a22" stroke-opacity="0.83" stroke-width="0.9"/>
<circle cx="1285.4" cy="341.1" r="4.850" fill="#b8382c" fill-opacity="0.97" stroke="#6a1912" stroke-opacity="1.00" stroke-width="0.9"/>
<circle cx="1293.3" cy="347.2" r="4.850" fill="#e0382c" fill-opacity="0.78" stroke="#9a2a22" stroke-opacity="0.83" stroke-width="0.9"/>
<circle cx="1289.1" cy="346.7" r="4.850" fill="#e0281c" fill-opacity="0.96" stroke="#7d1610" stroke-opacity="1.00" stroke-width="0.9"/>
<circle cx="1292.8" cy="352.8" r="4.850" fill="#e0281c" fill-opacity="0.96" stroke="#7d1610" stroke-opacity="1.00" stroke-width="0.9"/>
<circle cx="1308.2" cy="354.2" r="4.850" fill="#e0382c" fill-opacity="0.78" stroke="#9a2a22" stroke-opacity="0.83" stroke-width="0.9"/>
<circle cx="1320.3" cy="357.4" r="4.850" fill="#e0281c" fill-opacity="0.96" stroke="#7d1610" stroke-opacity="1.00" stroke-width="0.9"/>
<circle cx="1312.9" cy="364.9" r="4.850" fill="#e0382c" fill-opacity="0.78" stroke="#9a2a22" stroke-opacity="0.83" stroke-width="0.9"/>
<circle cx="1317.6" cy="363.0" r="4.850" fill="#e0281c" fill-opacity="0.96" stroke="#7d1610" stroke-opacity="1.00" stroke-width="0.9"/>
<circle cx="1284.0" cy="362.1" r="4.850" fill="#e0382c" fill-opacity="0.78" stroke="#9a2a22" stroke-opacity="0.83" stroke-width="0.9"/>
<circle cx="1281.7" cy="365.8" r="4.850" fill="#e0281c" fill-opacity="0.96" stroke="#7d1610" stroke-opacity="1.00" stroke-width="0.9"/>
<circle cx="1296.6" cy="365.8" r="4.850" fill="#e0281c" fill-opacity="0.96" stroke="#7d1610" stroke-opacity="1.00" stroke-width="0.9"/>
<circle cx="1358.6" cy="331.8" r="4.850" fill="#e0382c" fill-opacity="0.78" stroke="#9a2a22" stroke-opacity="0.83" stroke-width="0.9"/>
<circle cx="1366.5" cy="327.1" r="4.850" fill="#e0281c" fill-opacity="0.96" stroke="#7d1610" stroke-opacity="1.00" stroke-width="0.9"/>
<circle cx="1376.3" cy="329.5" r="4.850" fill="#e0281c" fill-opacity="0.96" stroke="#7d1610" stroke-opacity="1.00" stroke-width="0.9"/>
<circle cx="1384.7" cy="339.3" r="4.850" fill="#e0382c" fill-opacity="0.78" stroke="#9a2a22" stroke-opacity="0.83" stroke-width="0.9"/>
<circle cx="1389.8" cy="337.4" r="4.850" fill="#e0281c" fill-opacity="0.96" stroke="#7d1610" stroke-opacity="1.00" stroke-width="0.9"/>
<circle cx="1386.1" cy="332.3" r="4.850" fill="#e0281c" fill-opacity="0.96" stroke="#7d1610" stroke-opacity="1.00" stroke-width="0.9"/>
<circle cx="1373.5" cy="336.0" r="4.850" fill="#e0281c" fill-opacity="0.96" stroke="#7d1610" stroke-opacity="1.00" stroke-width="0.9"/>
<circle cx="1352.1" cy="339.7" r="4.850" fill="#e0281c" fill-opacity="0.96" stroke="#7d1610" stroke-opacity="1.00" stroke-width="0.9"/>
<circle cx="1361.4" cy="339.3" r="4.850" fill="#e0281c" fill-opacity="0.96" stroke="#7d1610" stroke-opacity="1.00" stroke-width="0.9"/>
<circle cx="1401.5" cy="338.8" r="4.850" fill="#b8382c" fill-opacity="0.97" stroke="#6a1912" stroke-opacity="1.00" stroke-width="0.9"/>
<circle cx="1343.2" cy="348.1" r="4.850" fill="#b8382c" fill-opacity="0.97" stroke="#6a1912" stroke-opacity="1.00" stroke-width="0.9"/>
<circle cx="1372.6" cy="344.8" r="4.850" fill="#e0281c" fill-opacity="0.96" stroke="#7d1610" stroke-opacity="1.00" stroke-width="0.9"/>
<circle cx="1375.4" cy="346.2" r="4.850" fill="#e0281c" fill-opacity="0.96" stroke="#7d1610" stroke-opacity="1.00" stroke-width="0.9"/>
<circle cx="1365.1" cy="351.8" r="4.850" fill="#e0382c" fill-opacity="0.78" stroke="#9a2a22" stroke-opacity="0.83" stroke-width="0.9"/>
<circle cx="1374.4" cy="365.4" r="4.850" fill="#e0281c" fill-opacity="0.96" stroke="#7d1610" stroke-opacity="1.00" stroke-width="0.9"/>
<circle cx="1375.4" cy="360.7" r="4.850" fill="#e0281c" fill-opacity="0.96" stroke="#7d1610" stroke-opacity="1.00" stroke-width="0.9"/>
<circle cx="1340.9" cy="360.2" r="4.850" fill="#e0382c" fill-opacity="0.78" stroke="#9a2a22" stroke-opacity="0.83" stroke-width="0.9"/>
<circle cx="1358.6" cy="362.6" r="4.850" fill="#e0281c" fill-opacity="0.96" stroke="#7d1610" stroke-opacity="1.00" stroke-width="0.9"/>
<circle cx="1361.8" cy="365.4" r="4.850" fill="#e0281c" fill-opacity="0.96" stroke="#7d1610" stroke-opacity="1.00" stroke-width="0.9"/>
<circle cx="1346.5" cy="367.2" r="4.850" fill="#e0281c" fill-opacity="0.96" stroke="#7d1610" stroke-opacity="1.00" stroke-width="0.9"/>
<circle cx="1296.1" cy="374.7" r="4.850" fill="#409f8f" fill-opacity="0.92" stroke="#2a6f63" stroke-opacity="0.97" stroke-width="0.9"/>
<circle cx="1287.7" cy="375.2" r="4.850" fill="#409f8f" fill-opacity="0.92" stroke="#2a6f63" stroke-opacity="0.97" stroke-width="0.9"/>
<circle cx="1298.9" cy="395.7" r="4.850" fill="#409f8f" fill-opacity="0.92" stroke="#2a6f63" stroke-opacity="0.97" stroke-width="0.9"/>
<circle cx="1297.0" cy="397.6" r="4.850" fill="#409f8f" fill-opacity="0.92" stroke="#2a6f63" stroke-opacity="0.97" stroke-width="0.9"/>
<circle cx="1354.8" cy="372.8" r="4.850" fill="#409f8f" fill-opacity="0.92" stroke="#2a6f63" stroke-opacity="0.97" stroke-width="0.9"/>
<circle cx="1336.7" cy="394.8" r="4.850" fill="#409f8f" fill-opacity="0.92" stroke="#2a6f63" stroke-opacity="0.97" stroke-width="0.9"/>
<circle cx="1359.0" cy="403.6" r="4.850" fill="#409f8f" fill-opacity="0.92" stroke="#2a6f63" stroke-opacity="0.97" stroke-width="0.9"/>
<circle cx="1359.5" cy="420.9" r="4.850" fill="#409f8f" fill-opacity="0.92" stroke="#2a6f63" stroke-opacity="0.97" stroke-width="0.9"/>
<circle cx="1350.2" cy="423.7" r="4.850" fill="#409f8f" fill-opacity="0.92" stroke="#2a6f63" stroke-opacity="0.97" stroke-width="0.9"/>
<circle cx="1332.5" cy="380.8" r="4.850" fill="#409f8f" fill-opacity="0.92" stroke="#2a6f63" stroke-opacity="0.97" stroke-width="0.9"/>
<circle cx="1281.2" cy="365.4" r="4.850" fill="#e0281c" fill-opacity="0.96" stroke="#7d1610" stroke-opacity="1.00" stroke-width="0.9"/>
<circle cx="1284.9" cy="371.9" r="4.850" fill="#e0281c" fill-opacity="0.96" stroke="#7d1610" stroke-opacity="1.00" stroke-width="0.9"/>
<circle cx="1305.4" cy="372.4" r="4.850" fill="#e0382c" fill-opacity="0.78" stroke="#9a2a22" stroke-opacity="0.83" stroke-width="0.9"/>
<circle cx="1314.8" cy="365.4" r="4.850" fill="#e0382c" fill-opacity="0.78" stroke="#9a2a22" stroke-opacity="0.83" stroke-width="0.9"/>
<circle cx="1293.3" cy="382.6" r="4.850" fill="#e0281c" fill-opacity="0.96" stroke="#7d1610" stroke-opacity="1.00" stroke-width="0.9"/>
<circle cx="1298.9" cy="384.0" r="4.850" fill="#b8382c" fill-opacity="0.97" stroke="#6a1912" stroke-opacity="1.00" stroke-width="0.9"/>
<circle cx="1291.9" cy="388.2" r="4.850" fill="#e0281c" fill-opacity="0.96" stroke="#7d1610" stroke-opacity="1.00" stroke-width="0.9"/>
<circle cx="1291.0" cy="391.0" r="4.850" fill="#e0281c" fill-opacity="0.96" stroke="#7d1610" stroke-opacity="1.00" stroke-width="0.9"/>
<circle cx="1333.4" cy="371.9" r="4.850" fill="#e0382c" fill-opacity="0.78" stroke="#9a2a22" stroke-opacity="0.83" stroke-width="0.9"/>
<circle cx="1335.3" cy="373.3" r="4.850" fill="#e0281c" fill-opacity="0.96" stroke="#7d1610" stroke-opacity="1.00" stroke-width="0.9"/>
<circle cx="1343.2" cy="374.7" r="4.850" fill="#e0382c" fill-opacity="0.78" stroke="#9a2a22" stroke-opacity="0.83" stroke-width="0.9"/>
<circle cx="1351.1" cy="378.0" r="4.850" fill="#e0281c" fill-opacity="0.96" stroke="#7d1610" stroke-opacity="1.00" stroke-width="0.9"/>
<circle cx="1336.7" cy="382.2" r="4.850" fill="#e0281c" fill-opacity="0.96" stroke="#7d1610" stroke-opacity="1.00" stroke-width="0.9"/>
<circle cx="1344.6" cy="387.3" r="4.850" fill="#e0281c" fill-opacity="0.96" stroke="#7d1610" stroke-opacity="1.00" stroke-width="0.9"/>
<circle cx="1347.4" cy="389.6" r="4.850" fill="#e0281c" fill-opacity="0.96" stroke="#7d1610" stroke-opacity="1.00" stroke-width="0.9"/>
<circle cx="1350.7" cy="385.0" r="4.850" fill="#e0281c" fill-opacity="0.96" stroke="#7d1610" stroke-opacity="1.00" stroke-width="0.9"/>
<circle cx="1374.9" cy="380.8" r="4.850" fill="#e0281c" fill-opacity="0.96" stroke="#7d1610" stroke-opacity="1.00" stroke-width="0.9"/>
<circle cx="1361.8" cy="365.4" r="4.850" fill="#e0281c" fill-opacity="0.96" stroke="#7d1610" stroke-opacity="1.00" stroke-width="0.9"/>
<circle cx="1374.4" cy="365.9" r="4.850" fill="#e0281c" fill-opacity="0.96" stroke="#7d1610" stroke-opacity="1.00" stroke-width="0.9"/>
<circle cx="1338.5" cy="402.2" r="4.850" fill="#e0281c" fill-opacity="0.96" stroke="#7d1610" stroke-opacity="1.00" stroke-width="0.9"/>
<circle cx="1342.7" cy="406.4" r="4.850" fill="#e0281c" fill-opacity="0.96" stroke="#7d1610" stroke-opacity="1.00" stroke-width="0.9"/>
<circle cx="1348.3" cy="420.4" r="4.850" fill="#e0281c" fill-opacity="0.96" stroke="#7d1610" stroke-opacity="1.00" stroke-width="0.9"/>
<circle cx="1359.5" cy="423.7" r="4.850" fill="#b8382c" fill-opacity="0.97" stroke="#6a1912" stroke-opacity="1.00" stroke-width="0.9"/>
<circle cx="1416.5" cy="475.0" r="4.850" fill="#409f8f" fill-opacity="0.92" stroke="#2a6f63" stroke-opacity="0.97" stroke-width="0.9"/>
<circle cx="1365.2" cy="471.7" r="4.850" fill="#e0382c" fill-opacity="0.78" stroke="#9a2a22" stroke-opacity="0.83" stroke-width="0.9"/>
<circle cx="1431.4" cy="475.9" r="4.850" fill="#e0281c" fill-opacity="0.96" stroke="#7d1610" stroke-opacity="1.00" stroke-width="0.9"/>
<circle cx="1420.2" cy="484.8" r="4.850" fill="#b8382c" fill-opacity="0.97" stroke="#6a1912" stroke-opacity="1.00" stroke-width="0.9"/>
</svg></div>
<div class="b" style="left:813.4px;top:186.3px;width:30.600000000000023px;height:60.69999999999999px;background:#fff;border-radius:5px;box-shadow:0 1px 4px rgba(40,60,100,0.18),0 3px 8px rgba(40,60,100,0.1);"></div>
<svg style="left:821.5px;top:194.600px" width="14" height="14" viewBox="0 0 14 14"><circle cx="7" cy="7" r="7" fill="#2b2f3d"/><path d="M7 3.500V10.500M3.500 7H10.500" stroke="#fff" stroke-width="1.400"/></svg>
<svg style="left:821.5px;top:224.600px" width="14" height="14" viewBox="0 0 14 14"><circle cx="7" cy="7" r="7" fill="#2b2f3d"/><path d="M3.500 7H10.500" stroke="#fff" stroke-width="1.600"/></svg>
<div class="b" style="left:813.4px;top:255px;width:30.600000000000023px;height:29.600000000000023px;background:#fff;border-radius:5px;box-shadow:0 1px 4px rgba(40,60,100,0.18),0 3px 8px rgba(40,60,100,0.1);"></div>
<svg style="left:821px;top:262.300px" width="15" height="15" viewBox="0 0 15 15" fill="none" stroke="#343741" stroke-width="1"><circle cx="7.500" cy="7.500" r="5.300" stroke-dasharray="6.300 2"  stroke-dashoffset="-1"/><path d="M7.500 0.500V3M7.500 12V14.500M0.500 7.500H3M12 7.500H14.500"/><circle cx="7.500" cy="7.500" r="0.900" fill="#343741"/></svg>
<div class="b" style="left:813.4px;top:293px;width:30.600000000000023px;height:29.80000000000001px;background:#fff;border-radius:5px;box-shadow:0 1px 4px rgba(40,60,100,0.18),0 3px 8px rgba(40,60,100,0.1);"></div>
<svg style="left:822px;top:301.200px" width="13" height="13" viewBox="0 0 13 13" fill="none" stroke="#343741" stroke-width="1" stroke-linecap="round" stroke-linejoin="round"><path d="M1.500 11.500L11.500 1.500M7.800 1H12V5.200M1 7.800V12H5.200"/></svg>
<div class="b" style="left:813.4px;top:330.8px;width:30.600000000000023px;height:29.80000000000001px;background:#fff;border-radius:5px;box-shadow:0 1px 4px rgba(40,60,100,0.18),0 3px 8px rgba(40,60,100,0.1);"></div>
<svg style="left:820.500px;top:337.500px" width="16" height="16" viewBox="0 0 16 16" fill="none" stroke="#343741" stroke-width="1.050" stroke-linejoin="round"><g transform="translate(5.200 5.200) rotate(45) scale(0.880)"><path d="M-3.490 -1.500L-0.800 -1.500L-0.800 1.500L-3.490 1.500A3.800 3.800 0 0 0 3.400 1.700L10.800 1.700A1.700 1.700 0 0 0 10.800 -1.700L3.400 -1.700A3.800 3.800 0 0 0 -3.490 -1.500Z"/><circle cx="10.300" cy="0" r="0.550"/></g></svg>
<div class="b" style="left:1405px;top:186px;width:304px;height:164.5px;background:#fff;border-radius:6px;box-shadow:0 2px 6px rgba(40,60,100,0.22),0 6px 14px rgba(40,60,100,0.12);"></div>
<div class="t" style="left:1420.6px;top:191.5px;font-size:11.4px;color:#1a1c21;font-weight:700;letter-spacing:-0.373px;">LAYERS</div>
<div class="b" style="left:1405px;top:217.1px;width:304px;height:1.0px;background:#f1f3f8;"></div>
<div class="b" style="left:1405px;top:256.1px;width:304px;height:1.0px;background:#f1f3f8;"></div>
<div class="b" style="left:1405px;top:295.5px;width:304px;height:1.0px;background:#f1f3f8;"></div>
<div class="b" style="left:1405px;top:334.1px;width:304px;height:1.0px;background:#f1f3f8;"></div>
<svg style="left:1636px;top:195px" width="16" height="13" viewBox="0 0 16 13" fill="none" stroke="#343741" stroke-width="1" stroke-linecap="round"><path d="M1 6.500C3 3 5.500 2 8 2C10.500 2 13 3 15 6.500C13 10 10.500 11 8 11C5.500 11 3 10 1 6.500Z"/><circle cx="8" cy="6.500" r="2.200"/><path d="M13 0.800L3 12.200"/><path d="M14.300 1.500L4.300 12.800" stroke="#fff" stroke-width="0.800"/></svg>
<svg style="left:1659.500px;top:195px" width="16" height="13" viewBox="0 0 16 13" fill="none" stroke="#343741" stroke-width="1"><path d="M1 6.500C3 3 5.500 2 8 2C10.500 2 13 3 15 6.500C13 10 10.500 11 8 11C5.500 11 3 10 1 6.500Z"/><circle cx="8" cy="6.500" r="2.300"/><circle cx="8" cy="6.500" r="0.700" fill="#343741"/></svg>
<svg style="left:1687px;top:196px" width="14" height="11" viewBox="0 0 14 11" fill="none" stroke="#343741" stroke-width="1" stroke-linecap="round" stroke-linejoin="round"><path d="M0.700 1.300H8M0.700 5.500H13M0.700 9.700H8M10.300 2.800L13 5.500L10.300 8.200"/></svg>
<div class="b" style="left:1413.300px;top:229.500px;width:14.600px;height:14.600px;background:#fbd5d0;border:1px dashed #d8392c"></div>
<div class="b" style="left:1414.600px;top:231px;width:12px;height:12px;border-radius:50%;background:#e0281c"></div>
<div class="t" style="left:1436.2px;top:227.0px;font-size:11.8px;color:#343741;letter-spacing:0.303px;-webkit-text-stroke:0.300px #343741;">vpc flow action reject</div>
<svg style="left:1556.5px;top:233.0px" width="22" height="9" viewBox="0 0 22 9" fill="none" stroke="#7a8291" stroke-width="0.800"><circle cx="4.500" cy="4.500" r="3.600"/><path d="M4.500 2.300V4.700H6.300"/><rect x="12.800" y="1" width="7.200" height="7.200" rx="0.800"/></svg>
<svg style="left:1563px;top:271.5px" width="22" height="9" viewBox="0 0 22 9" fill="none" stroke="#7a8291" stroke-width="0.800"><circle cx="4.500" cy="4.500" r="3.600"/><path d="M4.500 2.300V4.700H6.300"/><rect x="12.800" y="1" width="7.200" height="7.200" rx="0.800"/></svg>
<div class="b" style="left:1413.800px;top:268.800px;width:13.600px;height:13.600px;border-radius:50%;background:#3f9f8f;border:1px solid #2f8576"></div>
<div class="t" style="left:1436.2px;top:265.6px;font-size:11.8px;color:#343741;letter-spacing:0.317px;-webkit-text-stroke:0.300px #343741;">vpc flow action accept</div>
<svg style="left:1413.800px;top:307.800px" width="14" height="14" viewBox="0 0 14 14" fill="none" stroke="#343741" stroke-width="0.900"><rect x="0.5" y="0.5" width="3.300" height="3.300"/><rect x="0.5" y="5.1" width="3.300" height="3.300"/><rect x="0.5" y="9.7" width="3.300" height="3.300"/><rect x="5.1" y="0.5" width="3.300" height="3.300"/><rect x="5.1" y="5.1" width="3.300" height="3.300"/><rect x="5.1" y="9.7" width="3.300" height="3.300"/><rect x="9.7" y="0.5" width="3.300" height="3.300"/><rect x="9.7" y="5.1" width="3.300" height="3.300"/><rect x="9.7" y="9.7" width="3.300" height="3.300"/></svg>
<div class="t" style="left:1436.2px;top:304.6px;font-size:11.8px;color:#343741;letter-spacing:-0.050px;-webkit-text-stroke:0.300px #343741;">Basemap</div>
<div class="b" style="left:1647.9px;top:546.6px;width:61.19999999999982px;height:14.799999999999955px;background:rgba(255,255,255,0.92);"></div>
<div class="t" style="left:1652.6px;top:544.0px;font-size:10.4px;color:#1a1c21;font-weight:700;letter-spacing:-0.523px;">zoom:</div>
<div class="t" style="left:1683.5px;top:544.0px;font-size:10.56px;color:#1a1c21;letter-spacing:0.112px;">0.47</div>
<div class="b" style="left:1340.7px;top:570px;width:368.39999999999986px;height:14.799999999999955px;background:rgba(255,255,255,0.850);"></div>
<div class="t" style="left:1344.6px;top:567.4px;font-size:10.45px;color:#1a1c21;letter-spacing:0.051px;-webkit-text-stroke:0.2px #1a1c21;">Elastic Maps Service</div>
<svg style="left:1447.5px;top:572.500px" width="10" height="10" viewBox="0 0 10 10" fill="none" stroke="#343741" stroke-width="0.900" stroke-linecap="round" stroke-linejoin="round"><path d="M4 1.500H2.200C1.500 1.500 1 2 1 2.700V7.800C1 8.500 1.500 9 2.200 9H7.300C8 9 8.500 8.500 8.500 7.800V6M5.500 4.500L9.200 0.800M6.300 0.700H9.300V3.700"/></svg>
<div class="t" style="left:1458.5px;top:567.4px;font-size:10.45px;color:#1a1c21;letter-spacing:0.053px;-webkit-text-stroke:0.2px #1a1c21;">, OpenMapTiles</div>
<svg style="left:1537px;top:572.500px" width="10" height="10" viewBox="0 0 10 10" fill="none" stroke="#343741" stroke-width="0.900" stroke-linecap="round" stroke-linejoin="round"><path d="M4 1.500H2.200C1.500 1.500 1 2 1 2.700V7.800C1 8.500 1.500 9 2.200 9H7.300C8 9 8.500 8.500 8.500 7.800V6M5.500 4.500L9.200 0.800M6.300 0.700H9.300V3.700"/></svg>
<div class="t" style="left:1548.0px;top:567.4px;font-size:10.45px;color:#1a1c21;letter-spacing:0.176px;-webkit-text-stroke:0.2px #1a1c21;">, OpenStreetMap contributors</div>
<svg style="left:1694px;top:572.500px" width="10" height="10" viewBox="0 0 10 10" fill="none" stroke="#343741" stroke-width="0.900" stroke-linecap="round" stroke-linejoin="round"><path d="M4 1.500H2.200C1.500 1.500 1 2 1 2.700V7.800C1 8.500 1.500 9 2.200 9H7.300C8 9 8.500 8.500 8.500 7.800V6M5.500 4.500L9.200 0.800M6.300 0.700H9.300V3.700"/></svg>
<div class="b" style="left:0px;top:1162px;width:1734px;height:18px;background:#fff;"></div>
<div class="b" style="left:1728px;top:0px;width:6px;height:1180px;background:#fff;"></div>
</body></html>
